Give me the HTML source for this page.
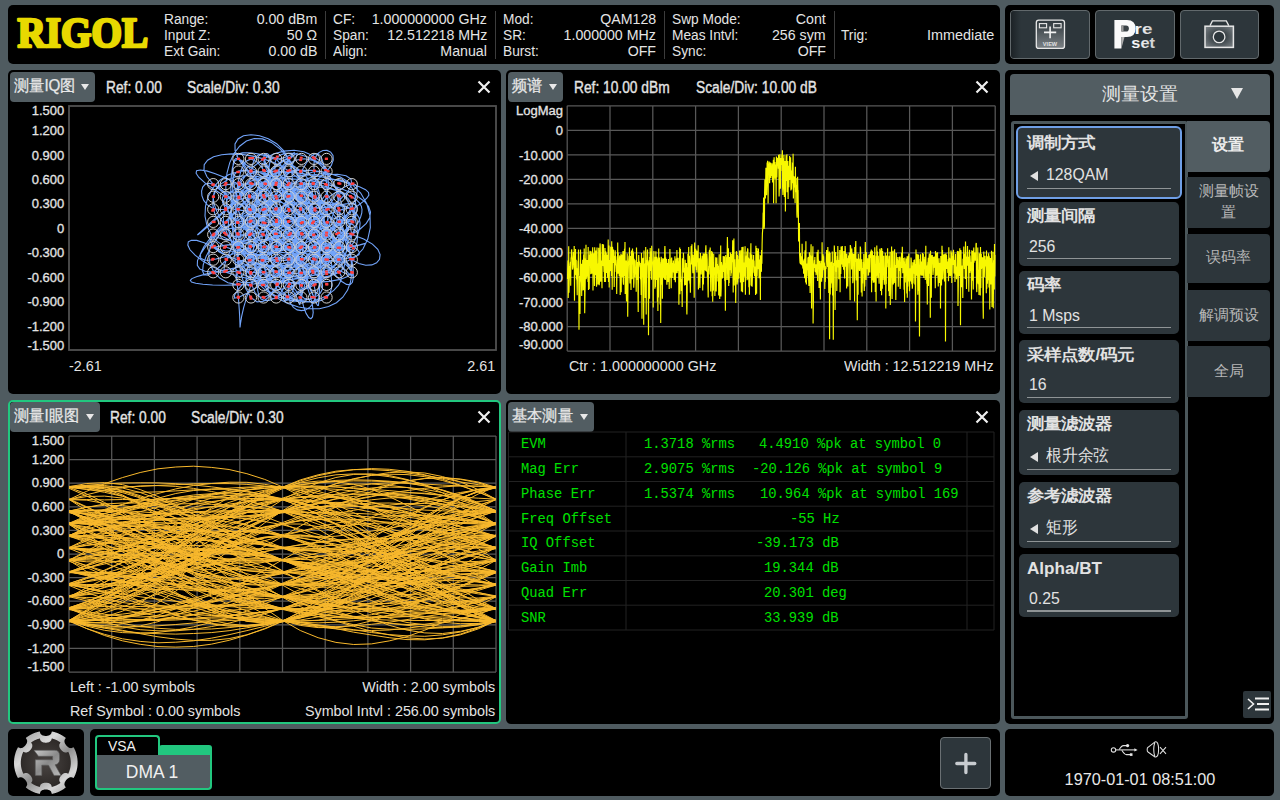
<!DOCTYPE html><html><head><meta charset="utf-8"><style>html,body{margin:0;padding:0;}body{width:1280px;height:800px;position:relative;overflow:hidden;background:#4f5b60;font-family:"Liberation Sans",sans-serif;}</style></head><body><div style="position:absolute;left:8px;top:5px;width:992px;height:59px;background:#000;border-radius:5px;"></div><div style="position:absolute;left:1005px;top:5px;width:269px;height:59px;background:#000;border-radius:5px;"></div><div style="position:absolute;left:8px;top:70px;width:493px;height:324px;background:#000;border-radius:5px;"></div><div style="position:absolute;left:506px;top:70px;width:494px;height:324px;background:#000;border-radius:5px;"></div><div style="position:absolute;left:8px;top:400px;width:493px;height:324px;background:#000;border-radius:5px;box-sizing:border-box;border:2px solid #22c77f;"></div><div style="position:absolute;left:506px;top:400px;width:494px;height:324px;background:#000;border-radius:5px;"></div><div style="position:absolute;left:1005px;top:70px;width:269px;height:654px;background:#000;border-radius:5px;"></div><div style="position:absolute;left:8px;top:729px;width:76px;height:67px;background:#000;border-radius:5px;"></div><div style="position:absolute;left:90px;top:729px;width:910px;height:67px;background:#000;border-radius:5px;"></div><div style="position:absolute;left:1005px;top:729px;width:269px;height:67px;background:#000;border-radius:5px;"></div><svg style="position:absolute;left:0;top:0" width="170" height="64"><text x="17.6" y="46.8" font-family="Liberation Serif" font-weight="bold" font-size="42" textLength="130.5" lengthAdjust="spacingAndGlyphs" fill="#e8d900" stroke="#e8d900" stroke-width="2.7" stroke-linejoin="round">RIGOL</text></svg><div style="position:absolute;left:163.7px;top:8.83px;font:normal 15.5px/19px 'Liberation Sans', sans-serif;color:#e4e4e4;white-space:pre;transform:scale(0.885,1.0);transform-origin:left;">Range:</div><div style="position:absolute;right:962.8px;top:8.83px;font:normal 15.5px/19px 'Liberation Sans', sans-serif;color:#e4e4e4;white-space:pre;transform:scale(0.915,1.0);transform-origin:right;">0.00 dBm</div><div style="position:absolute;left:163.7px;top:24.93px;font:normal 15.5px/19px 'Liberation Sans', sans-serif;color:#e4e4e4;white-space:pre;transform:scale(0.885,1.0);transform-origin:left;">Input Z:</div><div style="position:absolute;right:962.8px;top:24.93px;font:normal 15.5px/19px 'Liberation Sans', sans-serif;color:#e4e4e4;white-space:pre;transform:scale(0.915,1.0);transform-origin:right;">50 Ω</div><div style="position:absolute;left:163.7px;top:40.73px;font:normal 15.5px/19px 'Liberation Sans', sans-serif;color:#e4e4e4;white-space:pre;transform:scale(0.885,1.0);transform-origin:left;">Ext Gain:</div><div style="position:absolute;right:962.8px;top:40.73px;font:normal 15.5px/19px 'Liberation Sans', sans-serif;color:#e4e4e4;white-space:pre;transform:scale(0.915,1.0);transform-origin:right;">0.00 dB</div><div style="position:absolute;left:332.8px;top:8.83px;font:normal 15.5px/19px 'Liberation Sans', sans-serif;color:#e4e4e4;white-space:pre;transform:scale(0.885,1.0);transform-origin:left;">CF:</div><div style="position:absolute;right:793.0px;top:8.83px;font:normal 15.5px/19px 'Liberation Sans', sans-serif;color:#e4e4e4;white-space:pre;transform:scale(0.915,1.0);transform-origin:right;">1.000000000 GHz</div><div style="position:absolute;left:332.8px;top:24.93px;font:normal 15.5px/19px 'Liberation Sans', sans-serif;color:#e4e4e4;white-space:pre;transform:scale(0.885,1.0);transform-origin:left;">Span:</div><div style="position:absolute;right:793.0px;top:24.93px;font:normal 15.5px/19px 'Liberation Sans', sans-serif;color:#e4e4e4;white-space:pre;transform:scale(0.915,1.0);transform-origin:right;">12.512218 MHz</div><div style="position:absolute;left:332.8px;top:40.73px;font:normal 15.5px/19px 'Liberation Sans', sans-serif;color:#e4e4e4;white-space:pre;transform:scale(0.885,1.0);transform-origin:left;">Align:</div><div style="position:absolute;right:793.0px;top:40.73px;font:normal 15.5px/19px 'Liberation Sans', sans-serif;color:#e4e4e4;white-space:pre;transform:scale(0.915,1.0);transform-origin:right;">Manual</div><div style="position:absolute;left:502.7px;top:8.83px;font:normal 15.5px/19px 'Liberation Sans', sans-serif;color:#e4e4e4;white-space:pre;transform:scale(0.885,1.0);transform-origin:left;">Mod:</div><div style="position:absolute;right:623.8px;top:8.83px;font:normal 15.5px/19px 'Liberation Sans', sans-serif;color:#e4e4e4;white-space:pre;transform:scale(0.915,1.0);transform-origin:right;">QAM128</div><div style="position:absolute;left:502.7px;top:24.93px;font:normal 15.5px/19px 'Liberation Sans', sans-serif;color:#e4e4e4;white-space:pre;transform:scale(0.885,1.0);transform-origin:left;">SR:</div><div style="position:absolute;right:623.8px;top:24.93px;font:normal 15.5px/19px 'Liberation Sans', sans-serif;color:#e4e4e4;white-space:pre;transform:scale(0.915,1.0);transform-origin:right;">1.000000 MHz</div><div style="position:absolute;left:502.7px;top:40.73px;font:normal 15.5px/19px 'Liberation Sans', sans-serif;color:#e4e4e4;white-space:pre;transform:scale(0.885,1.0);transform-origin:left;">Burst:</div><div style="position:absolute;right:623.8px;top:40.73px;font:normal 15.5px/19px 'Liberation Sans', sans-serif;color:#e4e4e4;white-space:pre;transform:scale(0.915,1.0);transform-origin:right;">OFF</div><div style="position:absolute;left:672.0px;top:8.83px;font:normal 15.5px/19px 'Liberation Sans', sans-serif;color:#e4e4e4;white-space:pre;transform:scale(0.885,1.0);transform-origin:left;">Swp Mode:</div><div style="position:absolute;right:454.5px;top:8.83px;font:normal 15.5px/19px 'Liberation Sans', sans-serif;color:#e4e4e4;white-space:pre;transform:scale(0.915,1.0);transform-origin:right;">Cont</div><div style="position:absolute;left:672.0px;top:24.93px;font:normal 15.5px/19px 'Liberation Sans', sans-serif;color:#e4e4e4;white-space:pre;transform:scale(0.885,1.0);transform-origin:left;">Meas Intvl:</div><div style="position:absolute;right:454.5px;top:24.93px;font:normal 15.5px/19px 'Liberation Sans', sans-serif;color:#e4e4e4;white-space:pre;transform:scale(0.915,1.0);transform-origin:right;">256 sym</div><div style="position:absolute;left:672.0px;top:40.73px;font:normal 15.5px/19px 'Liberation Sans', sans-serif;color:#e4e4e4;white-space:pre;transform:scale(0.885,1.0);transform-origin:left;">Sync:</div><div style="position:absolute;right:454.5px;top:40.73px;font:normal 15.5px/19px 'Liberation Sans', sans-serif;color:#e4e4e4;white-space:pre;transform:scale(0.915,1.0);transform-origin:right;">OFF</div><div style="position:absolute;left:841.4px;top:24.93px;font:normal 15.5px/19px 'Liberation Sans', sans-serif;color:#e4e4e4;white-space:pre;transform:scale(0.885,1.0);transform-origin:left;">Trig:</div><div style="position:absolute;right:285.5px;top:24.93px;font:normal 15.5px/19px 'Liberation Sans', sans-serif;color:#e4e4e4;white-space:pre;transform:scale(0.93,1.0);transform-origin:right;">Immediate</div><div style="position:absolute;left:324.5px;top:11px;width:1px;height:48px;background:#3c3c3c;border-radius:0px;"></div><div style="position:absolute;left:495px;top:11px;width:1px;height:48px;background:#3c3c3c;border-radius:0px;"></div><div style="position:absolute;left:664px;top:11px;width:1px;height:48px;background:#3c3c3c;border-radius:0px;"></div><div style="position:absolute;left:833.5px;top:11px;width:1px;height:48px;background:#3c3c3c;border-radius:0px;"></div><div style="position:absolute;left:1010px;top:10.3px;width:79.8px;height:48.7px;background:#2d363b;border-radius:4px;box-sizing:border-box;border:1px solid #62696c;"></div><div style="position:absolute;left:1095px;top:10.3px;width:79.8px;height:48.7px;background:#2d363b;border-radius:4px;box-sizing:border-box;border:1px solid #62696c;"></div><div style="position:absolute;left:1179.5px;top:10.3px;width:79.8px;height:48.7px;background:#2d363b;border-radius:4px;box-sizing:border-box;border:1px solid #62696c;"></div><div style="position:absolute;left:1011px;top:11.3px;width:10px;height:46.7px;background:linear-gradient(90deg,#1c2226,#2d363b);border-radius:3px;"></div><svg style="position:absolute;left:0;top:0;" width="1280" height="64">
<defs><linearGradient id="vg" x1="0" y1="0" x2="0" y2="1"><stop offset="0" stop-color="#2d363b"/><stop offset="1" stop-color="#7b8185"/></linearGradient>
<radialGradient id="cg" cx="0.5" cy="0.5" r="0.7"><stop offset="0.2" stop-color="#2d363b"/><stop offset="1" stop-color="#80868a"/></radialGradient>
<linearGradient id="pg" x1="0" y1="0" x2="1" y2="0"><stop offset="0" stop-color="#fff"/><stop offset="1" stop-color="#cfcfcf"/></linearGradient></defs>
<rect x="1036.3" y="20.1" width="28.2" height="28.3" rx="2.5" fill="url(#vg)" stroke="#e8e8e8" stroke-width="1.3"/>
<rect x="1039.4" y="23.6" width="7.2" height="4.2" fill="none" stroke="#e8e8e8" stroke-width="1.1"/>
<rect x="1053.7" y="23.6" width="7.4" height="4.2" fill="none" stroke="#e8e8e8" stroke-width="1.1"/>
<path d="M1050.1 26.6V38.2M1044 32.4H1056.2" stroke="#f2f2f2" stroke-width="1.6"/>
<text x="1050" y="46.2" text-anchor="middle" font-family="Liberation Sans" font-weight="bold" font-size="5.6" fill="#e0e0e0">VIEW</text>
<path d="M1114.4 20H1127Q1135.6 20 1135.6 28.5Q1135.6 37 1127 37H1121.4V48.4H1114.4Z" fill="#fafafa"/><path d="M1121.4 25.4H1126Q1128.9 25.4 1128.9 28.5Q1128.9 31.6 1126 31.6H1121.4Z" fill="#3a4246"/><path d="M1121.4 25.4H1123.5V31.6H1121.4Z" fill="#9a9a9a"/><path d="M1121.4 37H1124.5L1121.4 48.4Z" fill="#b0b0b0"/>
<text x="1134.6" y="33.9" font-family="Liberation Sans" font-weight="bold" font-size="14" fill="url(#pg)" textLength="17.7" lengthAdjust="spacingAndGlyphs">re</text>
<text x="1131.3" y="48.1" font-family="Liberation Sans" font-weight="bold" font-size="15.5" fill="url(#pg)" textLength="23.6" lengthAdjust="spacingAndGlyphs">set</text>
<path d="M1210 25.6L1212.4 20.9H1226.3L1228.8 25.6" fill="none" stroke="#e6e6e6" stroke-width="1.3"/>
<rect x="1205" y="26.2" width="28.4" height="21.2" fill="url(#cg)" stroke="#e6e6e6" stroke-width="1.5"/>
<circle cx="1219.1" cy="36.9" r="5.8" fill="#2d363b" stroke="#e6e6e6" stroke-width="1.3"/>
</svg><div style="position:absolute;left:10px;top:72px;width:85px;height:30px;background:#525d62;border-radius:4px;"></div><div style="position:absolute;left:14px;top:76.36px;font:normal 16px/19px 'Liberation Sans', sans-serif;color:#e8e8e8;white-space:pre;transform:scale(0.95,1.0);transform-origin:left;-webkit-text-stroke:0.25px #e8e8e8;">测量IQ图</div><div style="position:absolute;left:81.4px;top:84.2px;width:0;height:0;border-left:4.3px solid transparent;border-right:4.3px solid transparent;border-top:6.2px solid #e8e8e8"></div><div style="position:absolute;left:106.4px;top:78.36px;font:normal 16px/19px 'Liberation Sans', sans-serif;color:#e4e4e4;white-space:pre;transform:scale(0.86,1.0);transform-origin:left;-webkit-text-stroke:0.35px #e4e4e4;">Ref: 0.00</div><div style="position:absolute;left:187px;top:78.36px;font:normal 16px/19px 'Liberation Sans', sans-serif;color:#e4e4e4;white-space:pre;transform:scale(0.86,1.0);transform-origin:left;-webkit-text-stroke:0.35px #e4e4e4;">Scale/Div: 0.30</div><svg style="position:absolute;left:476.75px;top:79.5px" width="14" height="14"><path d="M1.5 1.5L12.5 12.5M12.5 1.5L1.5 12.5" stroke="#f0f0f0" stroke-width="2.2"/></svg><div style="position:absolute;left:508px;top:72px;width:55px;height:30px;background:#525d62;border-radius:4px;"></div><div style="position:absolute;left:512px;top:76.36px;font:normal 16px/19px 'Liberation Sans', sans-serif;color:#e8e8e8;white-space:pre;transform:scale(0.95,1.0);transform-origin:left;-webkit-text-stroke:0.25px #e8e8e8;">频谱</div><div style="position:absolute;left:549.4px;top:84.2px;width:0;height:0;border-left:4.3px solid transparent;border-right:4.3px solid transparent;border-top:6.2px solid #e8e8e8"></div><div style="position:absolute;left:574px;top:78.36px;font:normal 16px/19px 'Liberation Sans', sans-serif;color:#e4e4e4;white-space:pre;transform:scale(0.86,1.0);transform-origin:left;-webkit-text-stroke:0.35px #e4e4e4;">Ref: 10.00 dBm</div><div style="position:absolute;left:696px;top:78.36px;font:normal 16px/19px 'Liberation Sans', sans-serif;color:#e4e4e4;white-space:pre;transform:scale(0.86,1.0);transform-origin:left;-webkit-text-stroke:0.35px #e4e4e4;">Scale/Div: 10.00 dB</div><svg style="position:absolute;left:975px;top:79.5px" width="14" height="14"><path d="M1.5 1.5L12.5 12.5M12.5 1.5L1.5 12.5" stroke="#f0f0f0" stroke-width="2.2"/></svg><div style="position:absolute;left:10px;top:402px;width:89.5px;height:30px;background:#525d62;border-radius:4px;"></div><div style="position:absolute;left:14px;top:406.36px;font:normal 16px/19px 'Liberation Sans', sans-serif;color:#e8e8e8;white-space:pre;transform:scale(0.95,1.0);transform-origin:left;-webkit-text-stroke:0.25px #e8e8e8;">测量I眼图</div><div style="position:absolute;left:85.9px;top:414.2px;width:0;height:0;border-left:4.3px solid transparent;border-right:4.3px solid transparent;border-top:6.2px solid #e8e8e8"></div><div style="position:absolute;left:110px;top:408.36px;font:normal 16px/19px 'Liberation Sans', sans-serif;color:#e4e4e4;white-space:pre;transform:scale(0.86,1.0);transform-origin:left;-webkit-text-stroke:0.35px #e4e4e4;">Ref: 0.00</div><div style="position:absolute;left:191px;top:408.36px;font:normal 16px/19px 'Liberation Sans', sans-serif;color:#e4e4e4;white-space:pre;transform:scale(0.86,1.0);transform-origin:left;-webkit-text-stroke:0.35px #e4e4e4;">Scale/Div: 0.30</div><svg style="position:absolute;left:476.75px;top:409.5px" width="14" height="14"><path d="M1.5 1.5L12.5 12.5M12.5 1.5L1.5 12.5" stroke="#f0f0f0" stroke-width="2.2"/></svg><div style="position:absolute;left:508px;top:402px;width:86px;height:30px;background:#525d62;border-radius:4px;"></div><div style="position:absolute;left:512px;top:406.36px;font:normal 16px/19px 'Liberation Sans', sans-serif;color:#e8e8e8;white-space:pre;transform:scale(0.95,1.0);transform-origin:left;-webkit-text-stroke:0.25px #e8e8e8;">基本测量</div><div style="position:absolute;left:580.4px;top:414.2px;width:0;height:0;border-left:4.3px solid transparent;border-right:4.3px solid transparent;border-top:6.2px solid #e8e8e8"></div><svg style="position:absolute;left:975px;top:409.5px" width="14" height="14"><path d="M1.5 1.5L12.5 12.5M12.5 1.5L1.5 12.5" stroke="#f0f0f0" stroke-width="2.2"/></svg><svg style="position:absolute;left:0;top:0" width="1280" height="800" viewBox="0 0 1280 800"><rect x="69" y="106" width="427" height="244" fill="none" stroke="#505050" stroke-width="1.8"/><polyline points="251,184.1 249.1,189.3 247.7,196.9 247.1,206.5 247.1,217.7 247.9,229.9 249.5,242.5 251.9,254.8 255.1,266.3 259,276.5 263.6,284.9 268.7,291.3 274.1,295.5 279.5,297.5 284.5,297.5 288.8,295.8 292,292.5 293.8,288.2 293.9,283.1 292.3,277.7 288.8,272.3 283.6,267.3 277.1,262.8 269.6,259.1 261.6,256.3 253.8,254.5 246.9,253.7 241.4,253.9 238,255 236.9,257 238.4,259.7 242.4,263 248.7,266.6 256.8,270.3 266,273.7 275.6,276.5 284.6,278.4 292.4,279.2 298.1,278.5 301.2,276.3 301.4,272.3 298.6,266.6 293.1,259.4 285.4,250.8 276.2,241.1 266.3,230.7 256.7,220.1 248.3,209.8 242.1,200 238.6,191.4 238.4,184.1 241.6,178.4 248.2,174.3 257.9,172 270.1,171.1 284.1,171.6 299,173.1 314,175.4 328.3,178.1 341.1,181.1 351.8,184.1 360,187 365.6,189.7 368.5,192.4 368.9,195.1 367,198 363.4,201.4 358.3,205.3 352.3,210 345.8,215.5 339.2,221.9 332.8,229.2 326.8,237.2 321.3,245.6 316.6,254.4 312.5,263.2 309.1,271.6 306.3,279.5 304.2,286.6 302.6,292.6 301.4,297.5 300.6,301.1 300.1,303.5 299.8,304.5 299.4,304.3 298.9,303 298.1,300.7 296.9,297.5 294.9,293.8 292.3,289.5 288.8,284.9 284.4,280.2 279.3,275.5 273.5,270.8 267.4,266.4 261.1,262.2 255,258.3 249.5,254.8 244.7,251.8 240.9,249.2 238.4,247.1 237.1,245.4 237,244.1 238,243 239.8,242.1 242.2,241.3 244.8,240.4 247.2,239.4 249.2,238.1 250.5,236.5 251,234.5 250.6,232 249.4,229.2 247.6,226.1 245.7,222.8 243.9,219.5 242.7,216.5 242.5,213.7 243.7,211.5 246.5,210 251,209.3 257.3,209.4 265.2,210.4 274.2,212.2 284,214.7 293.9,217.7 303.4,221 311.9,224.6 318.9,228.1 323.9,231.4 326.6,234.5 327.1,237.3 325.3,239.9 321.4,242.2 315.8,244.4 309,246.5 301.6,248.7 294.2,251.1 287.2,253.7 281.1,256.5 276.2,259.7 272.7,263.1 270.6,266.6 269.6,269.9 269.6,272.8 269.9,275.3 270.3,276.9 270.2,277.5 269.3,277.1 267.1,275.3 263.6,272.3 258.8,268 252.7,262.5 245.8,255.9 238.3,248.3 230.9,239.9 224.2,231.1 218.5,222.1 214.6,213.1 212.8,204.6 213.2,196.7 216,189.7 221,183.9 228,179.5 236.6,176.6 246.2,175.5 256.2,176.1 266,178.7 275,183 282.7,189.1 288.8,196.7 293,205.7 295.4,215.8 296.1,226.8 295.5,238.1 294,249.7 292,260.9 290.1,271.6 288.7,281.5 288.2,290.2 288.8,297.5 290.5,303.3 293.4,307.4 297.2,309.9 301.5,310.6 305.9,309.7 309.9,307.2 313.1,303.3 315,298.1 315.4,291.9 314,284.9 310.9,277.4 306.3,269.7 300.6,262.1 294.3,254.9 288,248.4 282.3,242.9 277.8,238.7 275,235.9 274.5,234.5 276.2,234.5 280.3,235.8 286.5,238.2 294.3,241.3 303.2,244.7 312.5,247.9 321.4,250.5 329,252 334.9,252.1 338.4,250.5 339.2,247.1 337.2,241.8 332.5,234.8 325.2,226.5 315.9,217.1 305.1,207.3 293.5,197.7 281.6,188.7 270.3,181.1 259.9,175.3 251,171.5 243.7,170 238.4,170.9 234.8,174 232.9,178.9 232.4,185.3 233,192.6 234.3,200.5 235.8,208.2 237.3,215.5 238.4,221.9 239,227.1 239,231.2 238.3,233.9 237,235.6 235.2,236.4 233.2,236.4 231,236 228.9,235.5 227.1,234.9 225.8,234.5 225.1,234.4 225.1,234.5 225.8,234.8 227.3,235.3 229.5,235.8 232.5,236.1 236.1,236.3 240.5,236.1 245.4,235.5 251,234.5 257.1,233 263.8,231.2 270.8,228.9 278.3,226.3 286.2,223.5 294.3,220.6 302.5,217.6 310.7,214.7 318.8,211.9 326.6,209.3 333.8,207 340.3,205.1 346,203.9 350.6,203.3 354.1,203.6 356.3,205 357.2,207.5 356.7,211.1 354.9,216 351.8,221.9 347.6,228.8 342.4,236.4 336.3,244.2 329.5,252 322.3,259.2 315,265.3 307.7,270 300.8,272.9 294.4,273.7 288.8,272.3 284,268.7 280.4,263 277.8,255.7 276.5,247 276.3,237.6 277.3,227.9 279.1,218.6 281.8,210 285.1,202.6 288.8,196.7 292.7,192.4 296.6,189.8 300.4,188.8 303.8,189 306.9,190.2 309.5,191.9 311.5,193.8 313,195.5 313.8,196.5 314,196.7 313.4,195.8 312.1,193.9 309.9,190.8 306.7,186.9 302.5,182.3 297.1,177.2 290.5,172.1 282.6,167.1 273.6,162.6 263.6,158.9 252.9,156.1 242,154.4 231.4,153.9 221.7,154.7 213.6,156.8 207.6,160.2 204.2,164.7 204,170.2 207,176.8 213.2,184.1 222.5,192 234.3,200.4 247.9,209 262.3,217.6 276.6,226.2 289.8,234.4 300.8,242 308.8,248.9 313.4,254.8 314,259.7 310.8,263.4 303.9,265.9 293.9,267.1 281.5,267.1 267.7,265.9 253.6,263.6 240.1,260.4 228.4,256.5 219.2,252 213.2,247.1 210.7,242 211.9,236.9 216.6,231.9 224.4,227.3 235,223 247.4,219.2 261.1,215.9 275.1,213.2 288.8,211 301.4,209.3 312.4,208.1 321.2,207.3 327.7,206.8 331.4,206.7 332.5,206.7 330.9,207 326.7,207.4 320.2,208 311.6,208.6 301.4,209.3 290,210 277.9,210.6 265.8,211 254.1,211 243.5,210.6 234.7,209.4 228.1,207.5 224.2,204.7 223.4,201.1 225.8,196.7 231.4,191.6 240,186.2 251.4,180.9 264.9,176.2 279.9,172.5 295.8,170.4 311.6,170.3 326.6,172.5 340.3,177.1 351.8,184.1 360.7,193.1 366.8,203.8 370,215.6 370.3,227.6 367.8,239.1 362.9,249 355.9,256.6 347.2,261.2 337.3,262.3 326.6,259.7 315.5,253.5 304.3,244.1 293.4,232 282.9,218.2 273,203.7 264,189.7 255.9,177.3 248.9,167.5 243.1,161.2 238.4,158.9 234.8,161.1 232.4,167.6 231.1,178.2 230.8,192.2 231.3,208.9 232.4,227.2 233.9,246.3 235.5,264.9 237.1,282.3 238.4,297.5 239.3,310 239.8,319.2 240,325.1 240,327.5 240.1,326.7 240.6,322.8 241.7,316.2 243.7,307.4 246.8,296.8 251,284.9 256.3,272.1 262.4,258.6 269.1,244.8 275.8,231 282,217.4 287.1,204.1 290.7,191.5 292.4,179.6 291.7,168.6 288.8,158.9 283.6,150.5 276.6,143.7 268.3,138.7 259.5,135.7 250.9,134.7 243.5,135.8 238,138.9 235,143.9 235.1,150.7 238.4,158.9 245,168.3 254.5,178.5 266.3,189.3 279.6,200.5 293.5,211.6 307,222.5 319.1,232.9 329,242.7 335.8,251.6 339.2,259.7 338.9,266.8 334.8,272.7 327.2,277.4 316.4,280.7 303.1,282.8 288.1,283.3 272,282.5 255.8,280.3 240.2,276.8 225.8,272.3 213.2,266.9 202.8,261.1 195.1,255.2 190,249.8 187.8,245.1 188.3,241.8 191.4,240.2 196.7,240.4 204.1,242.7 213.2,247.1 223.5,253.4 234.7,261.1 246.2,269.7 257.6,278.5 268.5,286.9 278.4,294 286.9,299.2 293.7,301.7 298.6,301.3 301.4,297.5 302.2,290.5 301,280.5 298,267.8 293.7,253.1 288.5,237.3 282.7,221.2 276.8,205.8 271.4,191.9 266.9,180.3 263.6,171.5 261.9,165.8 261.9,163.3 263.7,163.9 267.3,167.3 272.5,172.8 279.1,179.9 286.9,187.7 295.6,195.6 304.7,203 314,209.3 323,214.2 331.3,217.6 338.7,219.6 344.7,220.4 349,220.3 351.4,219.8 351.7,219.3 349.7,219.3 345.5,220.1 339.2,221.9 331,225 321.2,229.1 310.3,234 298.8,239.5 287.3,245 276.5,250.2 267,254.6 259.3,257.8 253.9,259.5 251,259.7 250.7,258.4 253.1,255.8 257.8,252.1 264.5,247.7 272.6,243.2 281.6,239.1 290.9,235.8 299.7,233.8 307.5,233.3 314,234.5 318.8,237.3 321.8,241.5 323.2,246.9 323.2,252.8 322,258.9 320.2,264.5 318.1,269 316.1,272.1 314.7,273.2 314,272.3 314.2,269.2 315.5,264.1 317.6,257.1 320.5,248.6 323.9,239.2 327.6,229.3 331.2,219.6 334.5,210.6 337.3,202.8 339.2,196.7 340.2,192.4 340.3,190.3 339.4,190.3 337.6,192.4 334.9,196.4 331.6,202 327.6,209 323.3,216.9 318.7,225.5 314,234.5 309.2,243.5 304.6,252.3 300,260.7 295.7,268.6 291.6,275.7 287.8,282 284.4,287.4 281.3,291.8 278.6,295.2 276.2,297.5 274.2,298.7 272.5,298.8 271.1,297.7 269.9,295.4 268.8,291.9 267.8,287.3 266.9,281.6 265.9,275 264.8,267.7 263.6,259.7 262.1,251.4 260.5,242.9 258.5,234.6 256.4,226.6 253.9,219.2 251.2,212.5 248.2,206.9 245.1,202.3 241.8,198.9 238.4,196.7 235.2,195.7 232.2,195.8 229.6,196.9 227.6,198.9 226.4,201.7 226.3,205.1 227.3,209 229.6,213.2 233.3,217.5 238.4,221.9 244.7,226.2 252,230.3 260,234 268.3,237.3 276.5,240.2 284.2,242.6 290.8,244.4 296.1,245.7 299.7,246.6 301.4,247.1 301.2,247.2 299.2,247.2 295.6,247.2 290.8,247.3 285.2,247.8 279.3,248.8 273.8,250.5 269.1,252.8 265.6,255.9 263.6,259.7 263.3,264 264.4,268.6 266.9,273.3 270.1,277.9 273.6,281.9 276.8,285.2 279.1,287.3 280,288.1 279.1,287.3 276.2,284.9 271.4,280.9 264.8,275.4 257,268.5 248.6,260.4 240.2,251.6 232.8,242.4 227.1,233.2 223.7,224.3 223.2,216.3 225.8,209.3 231.4,203.6 239.9,199.4 250.6,196.6 262.7,195.3 275.4,195.4 287.6,196.7 298.4,199 306.8,202.1 312.1,205.6 314,209.3 312.2,213 307.1,216.4 299,219.4 288.8,221.9 277.5,223.7 266,224.9 255.5,225.3 246.9,224.9 241,223.8 238.4,221.9 239.3,219.4 243.7,216.1 251.2,212.2 261.3,207.7 273.2,202.6 285.8,197 298.3,190.9 309.7,184.5 319.3,178 326.6,171.5 331.3,165.4 333.3,159.9 333,155.4 330.7,152.1 327,150.4 322.9,150.5 318.9,152.6 315.7,156.8 314,163.1 314,171.5 315.9,181.7 319.5,193.2 324.4,205.7 330.1,218.6 335.7,231.3 340.6,243.2 344,253.6 345.2,262.2 343.7,268.5 339.2,272.3 331.8,273.4 321.6,271.9 309.2,267.9 295.3,261.8 280.6,254.1 266.1,245.2 252.7,235.8 241.1,226.3 232,217.3 225.8,209.3 222.6,202.6 222.4,197.4 224.9,193.9 229.6,192.1 235.7,191.9 242.5,193.2 249.3,195.9 255.4,199.6 260.3,204.1 263.6,209.3 265.1,214.9 264.8,220.6 263.1,226.5 260.3,232.3 256.8,237.9 253.5,243.3 250.7,248.2 249.1,252.6 249.1,256.5 251,259.7 254.9,262.2 260.8,263.9 268.4,265 277.6,265.4 287.9,265.2 298.8,264.5 309.8,263.5 320.5,262.3 330.4,261 339.2,259.7 346.7,258.4 352.5,257.2 356.7,256 359,254.6 359.5,252.9 358.3,250.7 355.5,247.9 351.2,244.3 345.7,239.8 339.2,234.5 332,228.5 324.4,222 316.8,215.3 309.4,208.9 302.6,203.1 296.8,198.4 292.4,195.2 289.5,193.7 288.3,194.2 288.8,196.7 291.1,201.2 294.8,207.3 299.7,214.8 305.3,223.1 311.1,231.7 316.6,240 321.3,247.4 324.8,253.4 326.6,257.6 326.6,259.7 324.5,259.5 320.6,257 314.9,252.4 307.8,246 299.8,238.3 291.4,229.7 283.1,220.8 275.3,212 268.7,203.8 263.6,196.7 260.3,190.9 258.8,186.7 259.4,184.3 261.8,183.6 265.9,184.6 271.5,187.2 278.1,191.2 285.6,196.4 293.4,202.5 301.4,209.3 309.2,216.7 316.6,224.3 323.5,232 329.8,239.4 335.4,246.6 340.2,253.2 344.3,259.3 347.6,264.5 350.1,268.9 351.8,272.3 352.8,274.7 352.9,275.9 352.1,276 350.5,275 348.1,272.8 344.9,269.5 341,265.2 336.5,259.9 331.7,253.8 326.6,247.1 321.4,239.9 316.3,232.4 311.4,224.7 306.8,217.2 302.6,209.9 298.9,203.1 295.7,197 293,191.8 290.7,187.4 288.8,184.1 287.3,181.7 286.3,180.3 285.7,179.8 285.7,179.9 286.3,180.6 287.6,181.5 289.8,182.5 292.8,183.3 296.7,183.9 301.4,184.1 306.7,183.9 312.3,183.6 317.7,183.2 322.5,183.2 326.2,183.8 328.4,185.6 328.4,188.8 326.1,193.8 321.3,200.6 314,209.3 304.4,219.7 293,231.5 280.6,244.1 268,257 256.2,269.2 246.1,280.1 238.7,288.9 234.6,295 234.5,298 238.4,297.5 246.3,293.6 257.8,286.6 272,277.1 287.9,265.8 304.3,253.5 319.9,241.3 333.4,230.1 343.8,220.6 350.1,213.5 351.8,209.3 348.7,208.1 340.9,209.9 328.9,214.2 313.4,220.6 295.6,228.3 276.7,236.5 257.9,244.5 240.3,251.4 225.2,256.6 213.2,259.7 204.9,260.3 200.7,258.3 200.4,253.8 203.7,247 210.1,238.3 219,228.1 229.6,217.1 241,205.7 252.6,194.6 263.6,184.1 273.4,174.6 281.8,166.6 288.3,160.4 293.1,156 295.9,153.7 297.1,153.5 296.8,155.3 295.1,159.1 292.4,164.5 288.8,171.5 284.6,179.6 279.9,188.5 274.9,197.7 269.6,206.9 264.1,215.4 258.6,222.9 253.1,228.8 247.8,232.9 242.8,234.8 238.4,234.5 234.8,231.9 232.2,227.1 230.8,220.5 230.8,212.3 232.3,203 235.5,193.1 240.3,183.3 246.7,174 254.6,165.7 263.6,158.9 273.5,154 283.8,151.1 294.1,150.3 303.9,151.8 312.6,155.4 319.8,160.9 325.1,168.1 328.1,176.8 328.6,186.4 326.6,196.7 322.2,207.1 315.4,217.3 306.6,226.9 296.1,235.3 284.3,242.4 271.9,247.6 259.4,250.8 247.2,251.8 235.8,250.6 225.8,247.1 217.4,241.6 211,234.3 206.9,225.6 205,216 205.5,206.1 208.2,196.4 213.1,187.6 219.9,180.3 228.5,174.8 238.4,171.5 249.4,170.7 261,172.5 272.8,176.8 284.4,183.3 295.2,191.8 304.9,201.8 313.2,212.9 319.7,224.4 324.1,236 326.6,247.1 327.1,257.2 325.7,266.2 322.9,273.8 319.1,279.8 314.6,284.3 310.1,287.3 306.2,288.7 303.1,288.7 301.5,287.4 301.4,284.9 303.1,281.3 306.4,276.8 311.3,271.4 317.3,265.2 324.1,258.5 331.1,251.4 337.8,244 343.8,236.5 348.5,229.1 351.8,221.9 353.4,215.1 353.3,208.9 351.4,203.4 348.1,198.6 343.5,194.5 338,191.2 331.9,188.6 325.7,186.5 319.6,185.1 314,184.1 309.1,183.6 305.2,183.6 302.3,184.2 300.6,185.3 300.1,187.2 300.8,189.8 302.7,193.3 305.6,197.8 309.4,203.1 314,209.3 319.1,216.2 324.4,223.4 329.7,230.6 334.5,237.4 338.7,243.4 341.7,248 343.5,251 343.7,251.9 342.3,250.6 339.2,247.1 334.4,241.4 328.3,233.8 321.1,224.7 313.2,214.8 305.1,204.7 297.3,194.9 290.1,186.2 284,179.1 279.3,174.1 276.2,171.5 274.9,171.3 275.5,173.6 277.8,178.2 281.8,184.6 287.3,192.4 294,201.2 301.6,210.3 309.8,219.1 318.3,227.3 326.6,234.5 334.5,240.4 341.5,245 347.2,248 351.3,249.8 353.3,250.4 353,250.2 350.2,249.4 344.8,248.5 336.8,247.6 326.6,247.1 314.5,247.1 301.1,247.8 287,249.2 273.1,251.3 260.2,254 249.3,257.3 241.1,260.9 236.3,264.8 235.4,268.6 238.4,272.3 245.4,275.6 255.9,278.4 269.1,280.6 284.2,282.1 300,282.7 315.3,282.6 329.1,281.4 340.3,279.4 348.1,276.3 351.8,272.3 351.1,267.4 346.1,261.5 337,254.9 324.5,247.5 309.2,239.5 292.2,231 274.5,222.3 256.9,213.5 240.4,204.9 225.8,196.7 213.8,189.2 204.7,182.6 198.7,177.2 196.1,173.2 196.6,170.7 200.2,170 206.6,170.9 215.3,173.7 226.1,178.1 238.4,184.1 251.7,191.3 265.5,199.6 279.1,208.6 292.1,218 303.8,227.3 313.7,236.1 321.2,244.1 326,250.8 327.8,256.1 326.6,259.7 322.5,261.4 315.9,261.2 307.3,259.2 297.5,255.4 287.4,250 278,243.2 270.1,235.5 264.7,227 262.4,218.1 263.6,209.3 268.4,200.9 276.5,193.1 287.3,186.4 300,180.9 313.3,176.9 326.3,174.7 337.5,174.3 346.1,175.7 351,179 351.8,184.1 348.3,190.9 340.6,199 329.4,208.3 315.4,218.2 299.7,228.6 283.7,238.9 268.5,248.7 255.3,257.8 245,265.7 238.4,272.3 235.7,277.4 236.9,280.8 241.6,282.5 249.2,282.5 258.8,281.1 269.4,278.4 279.8,274.6 289.1,270.1 296.5,265 301.4,259.7 303.3,254.3 302.2,249.1 298.5,244.3 292.5,239.8 285,235.8 276.7,232.3 268.4,229.1 261,226.4 255,224 251,221.9 249.3,220 250,218.4 253,217.1 257.9,216.2 264.3,215.8 271.8,215.9 279.7,216.5 287.5,217.7 294.9,219.5 301.4,221.9 307.1,224.8 311.7,228.1 315.5,231.5 318.6,234.9 321.4,238.2 324.1,241.1 327,243.5 330.4,245.4 334.5,246.6 339.2,247.1 344.3,247 349.8,246.4 355.1,245.6 359.8,244.7 363.5,243.8 365.7,243.3 366,243.3 363.8,243.9 359.1,245.1 351.8,247.1 342,249.7 329.8,252.8 315.7,256.3 300.2,259.9 283.8,263.4 267.4,266.7 251.5,269.3 236.8,271.3 223.9,272.3 213.2,272.3 205.1,271.2 199.8,269 197.3,265.4 197.5,260.6 200.2,254.6 205.1,247.3 211.7,239 219.8,229.7 228.8,219.7 238.4,209.3 248.3,198.8 258.3,188.6 268.1,179.1 277.7,170.9 286.9,164.5 295.7,160.3 304.1,158.8 312.1,160.1 319.6,164.3 326.6,171.5 332.9,181.3 338.3,193.3 342.7,206.7 345.8,220.8 347.3,234.6 347.1,247.4 344.9,258.1 340.7,266.2 334.6,271 326.6,272.3 317.1,270 306.3,264.2 294.8,255.7 283.1,244.9 271.7,232.8 261.3,220.3 252.4,208.3 245.4,197.9 240.6,189.6 238.4,184.1 238.7,181.8 241.4,182.9 246.2,187.2 252.9,194.6 260.8,204.5 269.5,216.5 278.4,229.9 287,244.1 294.8,258.5 301.4,272.3 306.7,285.1 310.4,296.4 312.5,305.7 313.2,312.6 312.5,317 310.9,318.7 308.7,317.5 306.1,313.4 303.6,306.7 301.4,297.5 299.6,286.2 298.4,273.3 297.9,259.5 298,245.4 298.5,231.8 299.3,219.6 300.2,209.4 301,202 301.4,197.6 301.4,196.7 300.9,199.1 300.1,204.6 298.9,212.7 297.7,222.7 296.7,233.7 296.1,244.8 296.1,255.1 296.9,263.5 298.7,269.4 301.4,272.3 305,271.9 309.2,268.2 313.6,261.7 317.8,252.8 321.3,242.4 323.7,231.2 324.4,220.3 323.1,210.4 319.7,202.4 314,196.7 306.4,193.8 297,193.8 286.5,196.5 275.4,201.4 264.5,208.2 254.7,216.3 246.6,224.8 240.9,233.1 238.1,240.8 238.4,247.1 241.8,251.8 248.1,254.7 256.7,255.7 267,254.7 278.1,252.1 289,248 298.8,242.6 306.7,236.3 311.9,229.3 314,221.9 312.9,214.3 308.6,206.7 301.5,199.2 292.2,191.9 281.6,185 270.4,178.6 259.7,172.6 250.3,167.3 243,162.7 238.4,158.9 236.8,156 238.2,154 242.5,152.9 249.1,152.8 257.5,153.7 266.9,155.5 276.7,158.3 286.1,162 294.5,166.4 301.4,171.5 306.7,177.2 310.2,183.4 312.1,189.9 312.7,196.6 312.4,203.3 311.7,210 311.2,216.6 311.2,222.9 312.1,228.9 314,234.5 317,239.7 321,244.5 325.6,248.9 330.4,252.9 335,256.7 338.9,260.2 341.6,263.5 342.7,266.7 342,269.6 339.2,272.3 334.5,274.6 327.9,276.4 319.9,277.6 310.8,278.1 301.2,277.8 291.6,276.4 282.5,274 274.6,270.4 268.2,265.6 263.6,259.7 261.1,252.7 260.7,244.9 262.4,236.4 266.2,227.5 271.7,218.7 278.7,210 286.7,202 295.6,194.8 304.8,188.8 314,184.1 322.9,180.9 331.1,179.3 338.5,179.5 344.7,181.3 349.7,184.8 353.2,189.8 355.2,196.3 355.6,203.9 354.5,212.6 351.8,221.9 347.6,231.4 342,241 335.3,250.1 327.7,258.5 319.3,265.7 310.4,271.2 301.4,274.9 292.5,276.4 284,275.6 276.2,272.3 269.1,266.6 263.1,258.8 258.1,249.1 254.3,238 251.5,226 249.8,213.7 249.1,201.6 249.1,190.3 249.8,180.1 251,171.5 252.5,164.7 254.3,159.7 256.3,156.5 258.5,154.9 260.8,154.6 263.4,155.2 266.2,156.3 269.3,157.5 272.6,158.4 276.2,158.9 279.9,158.7 283.6,157.9 287.1,156.6 290.2,155.1 292.6,153.6 294.1,152.6 294.6,152.3 293.9,153.2 291.9,155.3 288.8,158.9 284.5,163.8 279.5,169.9 273.9,176.8 268.2,184 262.7,191.2 257.9,197.7 254,203.2 251.5,207.1 250.5,209.2 251,209.3 253,207.4 256.3,203.6 260.7,198.4 265.8,192.1 271.3,185.1 276.6,178.1 281.3,171.6 285.2,165.9 287.7,161.6 288.8,158.9 288.2,158 285.9,158.9 281.8,161.5 276.2,165.8 269.3,171.5 261.3,178.2 252.6,185.7 243.6,193.6 234.5,201.6 225.8,209.3 217.7,216.4 210.6,222.7 204.9,227.9 200.6,231.8 198.1,234.2 197.4,235.1 198.6,234.2 201.7,231.7 206.6,227.6 213.2,221.9 221.1,214.8 230.1,206.8 239.8,198.1 249.7,189.2 259.3,180.8 268.2,173.1 276,166.7 282.2,162.1 286.5,159.4 288.8,158.9 288.9,160.6 286.9,164.3 282.8,169.7 277,176.3 269.7,183.6 261.4,190.9 252.4,197.6 243.2,203.1 234.2,207.1 225.8,209.3 218.3,209.5 212,207.8 207.1,204.6 203.7,200.4 201.9,195.7 201.6,191 202.7,187.1 205.1,184.3 208.7,183.3 213.2,184.1 218.3,186.9 223.9,191.6 229.5,198 235,205.6 240.1,213.9 244.4,222.4 247.7,230.4 250,237.5 251.1,243.2 251,247.1 249.8,249 247.5,248.7 244.4,246.2 240.8,241.6 236.9,235.1 233.2,226.9 229.9,217.4 227.4,206.8 225.9,195.5 225.8,184.1 227,173 229.8,162.6 234,153.5 239.6,146.2 246.4,141.1 254.2,138.5 262.6,138.9 271.4,142.4 280.2,149.1 288.8,158.9 296.7,171.5 303.8,186.4 309.9,202.9 314.7,220.4 318.2,238 320.2,254.7 320.7,269.7 319.8,282.2 317.5,291.6 314,297.5 309.4,299.7 304.1,298.2 298.1,293.4 291.8,285.7 285.5,275.9 279.5,264.6 274,252.8 269.4,241.3 265.9,230.8 263.6,221.9 262.6,215.1 262.9,210.8 264.6,208.9 267.7,209.6 271.8,212.5 276.9,217.3 282.7,223.7 288.9,231 295.2,239 301.4,247.1 307.2,255.1 312.3,262.6 316.5,269.5 319.7,275.7 321.8,281.1 322.6,285.7 322.2,289.6 320.5,292.8 317.8,295.4 314,297.5 309.3,299 304,300 298.3,300.4 292.4,300.2 286.5,299.4 280.8,297.8 275.5,295.6 270.8,292.6 266.8,289 263.6,284.9 261.4,280.3 260.2,275.5 260.1,270.7 261.1,266.3 263.2,262.5 266.5,259.6 270.8,257.8 276.1,257.2 282.1,257.8 288.8,259.7 295.9,262.6 302.9,266.2 309.6,270.3 315.5,274.3 320.2,277.7 323.2,280.2 324.3,281.1 323.1,280.3 319.7,277.3 314,272.3 306.3,265.4 297,256.7 286.8,246.8 276.4,236.2 266.5,225.6 258,215.8 251.7,207.5 248.2,201.2 247.9,197.6 251,196.7 257.4,198.8 266.8,203.7 278.6,211 292,220.1 306,230.4 319.6,241 331.8,251.2 341.6,260.2 348.5,267.4 351.8,272.3 351.5,274.6 347.5,274.2 340.3,271.1 330.4,265.6 318.7,258.1 306,249.1 293.2,239.2 281.4,228.9 271.3,218.8 263.6,209.3 258.7,200.8 256.9,193.6 258.2,187.8 262.5,183.4 269.5,180.5 278.8,179 289.7,178.7 301.8,179.6 314.3,181.4 326.6,184.1 338.3,187.6 348.7,191.7 357.5,196.3 364.2,201.2 368.6,206.5 370.5,212 369.7,217.7 366.3,223.4 360.2,229 351.8,234.5 341.3,239.8 328.8,244.9 314.9,249.5 299.9,253.8 284.3,257.7 268.5,261.2 253,264.4 238.3,267.3 224.9,269.9 213.2,272.3 203.6,274.6 196.4,276.7 191.9,278.6 190.3,280.4 191.5,282 195.8,283.3 202.9,284.3 212.6,285 224.6,285.2 238.4,284.9 253.5,284 269.1,282.7 284.6,280.8 299.1,278.5 311.7,275.7 321.8,272.7 328.8,269.5 332,266.2 331.3,262.9 326.6,259.7 318.3,256.6 306.7,253.7 292.7,250.9 277.1,248.4 261.2,245.9 246,243.6 232.7,241.3 222.3,239 215.6,236.8 213.2,234.5 215.4,232.2 222.1,230 232.9,228.1 247.2,226.6 264.1,225.7 282.6,225.5 301.6,226.2 320.1,228 337.1,230.7 351.8,234.5 363.7,239 372.4,244.1 377.8,249.4 380.1,254.6 379.5,259.3 376.6,262.8 371.8,264.9 365.8,265.2 358.9,263.5 351.8,259.7 344.8,253.9 338.3,246.4 332.3,237.5 327.1,227.7 322.8,217.6 319.4,207.9 316.8,199.2 315.1,192.1 314.2,186.9 314,184.1 314.5,183.7 315.4,185.6 316.7,189.4 318.1,194.7 319.3,200.9 320.1,207.2 320.1,213.1 319.2,217.8 317.2,220.9 314,221.9 309.7,220.7 304.5,217.4 298.6,211.9 292.5,204.9 286.6,196.7 281.5,187.9 277.5,179.2 275.1,171.2 274.7,164.3 276.2,158.9 279.8,155.3 285.1,153.4 291.7,153.3 299.3,154.5 307,156.8 314.2,159.9 320.3,163.2 324.7,166.4 326.9,169.2 326.6,171.5 323.6,173.1 318,174.2 310.1,174.9 300.5,175.6 289.6,176.5 278.1,178.1 266.6,180.7 255.8,184.6 246.2,189.9 238.4,196.7 232.7,205 229.3,214.6 228.3,225.2 229.7,236.6 233.4,248.3 239.1,259.9 246.6,270.9 255.5,281.1 265.5,290.1 276.2,297.5 287.3,303.2 298.5,307 309.3,308.8 319.4,308.7 328.5,306.6 336.4,302.7 342.8,297.2 347.6,290.1 350.6,281.7 351.8,272.3 351.3,262.2 349.1,251.7 345.4,241.2 340.4,231.1 334.4,221.7 327.7,213.4 320.8,206.5 313.9,201.4 307.3,198.1 301.4,196.7 296.3,197.2 292.1,199.4 288.7,202.9 286.2,207.2 284.2,211.9 282.7,216.4 281.3,220.1 279.9,222.5 278.3,223.2 276.2,221.9 273.7,218.5 270.5,213.2 266.9,206.2 262.8,198.1 258.4,189.4 253.9,180.8 249.4,172.9 245.3,166.3 241.5,161.6 238.4,158.9 236,158.4 234.2,160.1 233.2,163.8 232.8,168.9 233,174.8 233.6,181.1 234.6,186.9 235.8,191.7 237,195 238.4,196.7 239.8,196.6 241.2,194.8 242.7,191.7 244.5,187.9 246.4,183.9 248.8,180.4 251.7,178.2 255,177.8 259,179.7 263.6,184.1 268.7,191.2 274.2,200.8 280.1,212.4 286.1,225.5 292,239.5 297.7,253.6 302.9,267.1 307.4,279.3 311.1,289.6 314,297.5 316.2,302.9 317.6,305.5 318.4,305.4 318.7,303 319,298.4 319.3,292.1 320,284.7 321.4,276.5 323.6,268.1 326.6,259.7 330.4,251.7 335,244.3 339.9,237.7 344.8,231.7 349.3,226.5 353,222 355.4,218.1 356.2,214.7 355,211.8 351.8,209.3 346.6,207.2 339.5,205.6 330.9,204.4 321.3,203.6 311.4,203.4 301.6,203.7 292.7,204.4 285.2,205.6 279.6,207.3 276.2,209.3 275,211.5 275.9,214.1 278.7,216.9 282.9,220.1 287.8,223.6 292.8,227.5 297.2,231.8 300.4,236.5 301.9,241.6 301.4,247.1 298.8,252.7 294.4,258.4 288.5,263.8 281.7,268.8 274.8,272.9 268.5,276 263.6,277.6 260.9,277.5 260.8,275.8 263.6,272.3 269.3,267.2 277.8,260.9 288.5,253.6 300.6,246 313.2,238.5 325.4,231.8 336.1,226.3 344.5,222.7 349.9,221.1 351.8,221.9 350.1,225 344.9,230.3 336.9,237.3 326.7,245.5 315.4,254.4 303.9,263.2 293.4,271.2 284.8,277.9 278.9,282.6 276.2,284.9 276.9,284.7 280.6,282 287,276.7 295.2,269.3 304.2,260.3 312.9,250 320.4,239.3 325.5,228.5 327.8,218.4 326.6,209.3 322,201.5 314.3,195.2 303.8,190.5 291.6,187.3 278.6,185.2 265.9,184.2 254.7,183.8 245.9,183.9 240.3,184 238.4,184.1 240.4,184.1 245.9,184 254.7,184.1 265.7,184.5 278.2,185.5 291.1,187.5 303.2,190.8 313.7,195.4 321.7,201.6 326.6,209.3 328.2,218.4 326.2,228.5 321,239.2 312.8,250 302.2,260.2 290,269.3 276.8,276.7 263.3,281.9 250.3,284.7 238.4,284.9 228,282.7 219.7,278.1 213.6,271.6 209.9,263.7 208.8,255 210.2,246.3 214.1,238 220.2,230.9 228.4,225.4 238.4,221.9 249.9,220.5 262.5,221.2 275.5,223.9 288.5,228.2 301,233.6 312.4,239.7 322.3,245.8 330.2,251.5 335.9,256.2 339.2,259.7 340,261.6 338.6,261.8 335.2,260.4 330.3,257.3 324.5,252.8 318.3,247.4 312.4,241.2 307.3,234.6 303.5,228.1 301.4,221.9 301.2,216.3 302.8,211.5 306.3,207.7 311.4,204.9 317.7,203.1 324.8,202.4 332.2,202.7 339.5,204 346.1,206.2 351.8,209.3 356.1,213.1 359,217.7 360.1,223 359.5,229 357.3,235.6 353.5,242.6 348.3,250 341.8,257.5 334.5,265 326.6,272.3 318.5,279.1 310.5,285.3 302.9,290.6 296.2,295 290.6,298.3 286.6,300.4 284.2,301.4 283.8,301.2 285.3,299.9 288.8,297.5 294.1,294.2 300.9,289.9 308.8,284.9 317.4,279.2 326.1,272.8 334.4,265.9 341.6,258.5 347.2,250.7 350.7,242.6 351.8,234.5 350.2,226.5 346,218.9 339.2,212 330.1,206.1 319,201.7 306.3,199 292.7,198.2 278.5,199.7 264.5,203.4 251,209.3 238.6,217.1 227.6,226.3 218.4,236.4 211.2,246.8 206.1,256.5 203.2,264.9 202.6,271.2 204.1,274.8 207.7,275.2 213.2,272.3 220.5,266 229.3,256.7 239.2,245 250,231.7 261.3,217.8 272.8,204.2 284.1,191.9 295,182 305,175 314,171.5 321.9,171.6 328.3,175.1 333.2,181.5 336.4,190.2 338.1,200.2 338.3,210.4 337.1,219.8 334.6,227.4 331,232.5 326.6,234.5 321.6,233.3 316.2,228.8 310.5,221.5 304.7,212.1 299,201.2 293.5,190 288.4,179.3 283.8,170.1 279.7,163.1 276.2,158.9 273.3,157.7 271,159.6 269.3,164.2 267.9,171.2 266.9,179.7 266.2,189.2 265.5,198.9 264.9,207.9 264.3,215.8 263.6,221.9 262.9,226.1 262.3,228.1 261.7,228.1 261.5,226.1 261.8,222.6 262.7,217.9 264.5,212.6 267.3,207 271.2,201.6 276.2,196.7 282.3,192.6 289.4,189.5 297.3,187.5 305.8,186.6 314.5,186.6 323.2,187.5 331.6,189.1 339.3,191.3 346.1,193.9 351.8,196.7 356.2,199.7 359.4,202.9 361.3,206.1 362,209.5 361.8,213 360.7,216.7 359,220.8 356.8,225.1 354.4,229.7 351.8,234.5 349.3,239.3 346.9,244.1 344.7,248.4 342.9,252.1 341.4,254.8 340.3,256.3 339.6,256.4 339.2,254.9 339.1,251.8 339.2,247.1 339.6,241.2 339.9,234.4 340.2,227.1 340.1,219.9 339.6,213.4 338.6,208.2 336.8,204.8 334.3,203.7 330.9,205.2 326.6,209.3 321.5,216 315.7,224.9 309.3,235.6 302.5,247.4 295.5,259.4 288.4,271 281.5,281.2 275,289.4 269,295 263.6,297.5 259,296.8 255.2,292.9 252.3,286.2 250.2,277 248.8,266 248.2,254 248.2,241.6 248.8,229.6 249.8,218.7 251,209.3 252.5,201.8 254,196.6 255.3,193.6 256.4,192.9 257,194.3 257.1,197.4 256.6,202.1 255.3,208 253.5,214.7 251,221.9 248.2,229.3 245.3,236.6 242.4,243.7 240,250.3 238.2,256.2 237.6,261.3 238.4,265.5 240.8,268.8 245,271 251,272.3 258.7,272.6 267.9,272.2 278.1,271.2 289,270 300,268.7 310.6,267.9 320.3,267.6 328.5,268.1 334.9,269.7 339.2,272.3 341.3,275.9 341,280.3 338.5,285.2 334,290.2 327.9,294.9 320.6,298.7 312.6,301.2 304.3,302 296.2,300.8 288.8,297.5 282.5,292 277.5,284.5 273.9,275.1 271.9,264.3 271.4,252.5 272.5,240.3 274.9,228.1 278.5,216.5 283.2,205.9 288.8,196.7 295,189.3 301.8,183.8 308.8,180.4 315.9,179.2 323.1,180 329.9,182.9 336.4,187.5 342.4,193.6 347.5,201 351.8,209.3 355,218.1 356.9,226.9 357.6,235.3 357,242.7 354.9,248.8 351.6,253.1 346.9,255.2 341.1,254.9 334.2,252.2 326.6,247.1 318.5,239.8 310,230.5 301.6,219.9 293.5,208.5 285.9,196.9 279.1,185.9 273.3,176 268.7,167.9 265.4,162.1 263.6,158.9 263.3,158.7 264.4,161.3 267.1,166.7 271.2,174.5 276.4,184.5 282.8,196 290,208.6 297.8,221.7 305.9,234.7 314,247.1 321.9,258.4 329.4,268.2 336.1,276 341.8,281.5 346.5,284.4 350.1,284.7 352.4,282.3 353.4,277.2 353.2,269.5 351.8,259.7 349.2,248.1 345.5,235.2 340.8,221.8 335.2,208.4 328.7,196 321.5,185.2 313.8,176.9 305.6,171.6 297.2,169.7 288.8,171.5 280.6,176.9 273,185.7 266.2,197.3 260.6,210.9 256.4,225.8 253.9,240.8 253.3,255.1 254.7,267.6 258.2,277.8 263.6,284.9 270.9,288.8 279.5,289.5 289.2,287.2 299.2,282.5 309.1,276.2 318.4,268.9 326.4,261.6 332.7,255.1 337.1,250.1 339.2,247.1 339.1,246.4 336.7,248 332.2,251.8 325.9,257.5 318.3,264.4 309.8,272.1 300.9,279.9 292,287 283.7,293.1 276.2,297.5 269.9,300.1 264.8,300.6 261.1,299 258.8,295.5 257.7,290.1 257.6,283.2 258.4,275.1 259.8,266.2 261.6,256.7 263.6,247.1 265.6,237.7 267.4,228.8 268.8,220.5 269.8,213.2 270.2,207 270.1,202 269.3,198.5 267.9,196.4 266,195.8 263.6,196.7 261,199.1 258.3,202.7 255.8,207.4 253.5,213 252,219.1 251.4,225.4 252.1,231.7 254.3,237.6 258.1,242.8 263.6,247.1 270.8,250.3 279.5,252.3 289.3,253.1 300,252.7 310.9,251.3 321.6,248.9 331.4,245.8 340,242.2 346.9,238.4 351.8,234.5 354.5,230.9 355.1,227.8 353.7,225.2 350.8,223.5 346.7,222.6 342,222.8 337.2,224 332.8,226.4 329.1,229.9 326.6,234.5 325.3,240 325.3,246.3 326.2,253.3 327.7,260.6 329.5,268 331,275.3 331.8,282.2 331.5,288.3 329.8,293.5 326.6,297.5 321.9,300.3 315.9,301.7 308.9,301.9 301.4,300.9 293.9,299 287.1,296.4 281.5,293.5 277.6,290.4 275.8,287.5 276.2,284.9 278.9,282.7 283.8,280.9 290.4,279.5 298.4,278.1 307,276.7 315.7,274.9 323.9,272.5 330.8,269.2 336,264.9 339.2,259.7 340.1,253.5 338.6,246.7 334.9,239.6 329.2,232.7 321.9,226.6 313.4,221.6 304.1,218.4 294.5,217.2 285.1,218.4 276.2,221.9 268.2,227.6 261.3,235.2 255.6,244.1 251.2,253.7 248.2,263.3 246.5,272 246.1,279 246.7,283.9 248.4,285.9 251,284.9 254.4,280.8 258.5,273.6 263.2,263.6 268.3,251.4 273.7,237.7 279.3,223.2 285.1,208.5 290.7,194.6 296.2,182.1 301.4,171.5 306.2,163.2 310.4,157.4 314.1,154.2 317.3,153.6 319.8,155.3 321.9,158.9 323.5,164 324.8,170.2 325.8,177.1 326.6,184.1 327.3,191.1 327.7,197.6 327.9,203.4 327.7,208.4 327.1,212.5 325.9,215.8 324,218.2 321.4,220 318.1,221.2 314,221.9 309.3,222.1 304.1,221.9 298.7,221.1 293.3,219.8 288.3,217.8 283.8,215.1 280.2,211.6 277.6,207.3 276.3,202.3 276.2,196.7 277.4,190.7 279.7,184.8 282.8,179.4 286.5,175 290.3,172.1 294.1,171.4 297.3,173.3 299.8,178.1 301.2,185.9 301.4,196.7 300.3,210 297.8,225.2 294.1,241.5 289.2,257.8 283.5,273.1 277.1,286.1 270.4,295.7 263.6,301.2 257,301.9 251,297.5 245.6,288.3 241.2,274.7 238,257.7 236,238.5 235.3,218.5 235.9,199.4 237.9,182.7 241.2,169.7 245.6,161.5 251,158.9 257.2,161.9 264.1,170.5 271.3,183.8 278.7,200.9 286,220.2 292.9,240.3 299.4,259.5 305.2,276.2 310.1,289.2 314,297.5 316.9,300.4 318.7,298 319.4,290.6 319,278.9 317.7,264 315.5,247.1 312.6,229.5 309.2,212.4 305.4,197 301.4,184.1 297.4,174.2 293.7,167.7 290.3,164.3 287.5,163.8 285.5,165.6 284.2,169 284,173.1 284.7,177.4 286.3,181.2 288.8,184.1 291.9,185.8 295.4,186.4 299.1,186.1 302.6,185.3 305.5,184.5 307.6,184.2 308.4,184.9 307.8,187.1 305.5,191 301.4,196.7 295.6,204.2 288.4,213.2 279.9,223.2 270.6,233.7 261,244.1 251.6,253.6 242.9,261.7 235.5,267.7 229.7,271.4 225.8,272.3 224,270.6 224.3,266.1 226.5,259.3 230.4,250.5 235.6,240.1 241.5,228.7 247.7,217 253.8,205.3 259.1,194.2 263.6,184.1 266.9,175.2 269,167.8 269.9,162 269.8,157.7 269,155 267.6,153.7 266.2,153.6 264.9,154.6 263.9,156.4 263.6,158.9 264,161.9 264.9,165.1 266.2,168.5 267.7,171.8 269,174.9 269.9,177.7 270,180.1 269.1,181.9 267,183.3 263.6,184.1 259,184.4 253.3,184.4 246.9,184.2 240.1,184 233.3,184 226.9,184.6 221.4,186 217.1,188.4 214.3,191.9 213.2,196.7 213.8,202.6 216,209.6 219.7,217.4 224.7,225.6 230.7,233.8 237.3,241.6 244.2,248.4 251.1,253.9 257.6,257.8 263.6,259.7 268.9,259.7 273.4,257.8 277.1,254.3 280,249.5 282.3,243.9 284,238.1 285.3,232.6 286.5,227.8 287.6,224.1 288.8,221.9 290.3,221.2 292.2,222 294.6,224 297.6,226.8 301.2,230 305.3,233 310,235.4 315.2,236.6 320.8,236.4 326.6,234.5 332.5,230.9 338.4,225.7 343.9,219.3 348.8,212.1 352.8,204.7 355.7,197.7 357.2,191.6 357.2,187.1 355.4,184.5 351.8,184.1 346.4,185.9 339.3,189.9 330.6,195.7 320.5,203.1 309.4,211.4 297.7,220 285.6,228.4 273.6,236 261.9,242.4 251,247.1 241,250.1 232.2,251.3 224.8,250.9 218.9,249.2 214.4,246.6 211.5,243.5 210,240.4 209.9,237.6 211,235.6 213.2,234.5 216.4,234.5 220.5,235.7 225.5,237.9 231.1,240.9 237.5,244.5 244.4,248.3 251.8,252.1 259.7,255.4 267.8,258 276.2,259.7 284.6,260.4 293,260 301.1,258.6 308.9,256.3 316.1,253.3 322.7,249.7 328.3,245.8 333,241.9 336.7,238.1 339.2,234.5 340.6,231.4 341,228.7 340.5,226.6 339.2,224.9 337.4,223.6 335.2,222.8 332.9,222.2 330.6,221.9 328.5,221.8 326.6,221.9 325,222.2 323.5,222.7 322,223.3 320.1,224.2 317.7,225.4 314.4,226.8 310,228.5 304.3,230.3 297.2,232.4 288.8,234.5 279.2,236.6 268.8,238.7 257.8,240.7 246.9,242.5 236.7,244 227.6,245.3 220.4,246.3 215.4,246.9 212.9,247.2 213.2,247.1 216.1,246.7 221.6,245.8 229.1,244.5 238.1,242.7 248.1,240.5 258.3,237.6 268,234.3 276.7,230.5 283.7,226.3 288.8,221.9 291.6,217.4 292.2,212.9 290.7,208.9 287.4,205.4 282.5,202.8 276.5,201.4 270,201.2 263.2,202.4 256.8,205.2 251,209.3 246.2,214.8 242.8,221.3 240.8,228.7 240.6,236.5 242.2,244.3 245.6,251.9 250.9,258.8 257.9,264.7 266.4,269.2 276.2,272.3 286.9,273.7 298.2,273.4 309.3,271.4 319.8,267.8 329,262.6 336.4,256.1 341.5,248.5 343.8,240 343,231.1 339.2,221.9 332.4,212.9 323,204.5 311.4,197 298.5,190.8 285,186.3 271.8,183.8 259.8,183.5 249.9,185.5 242.6,190 238.4,196.7 237.5,205.5 239.8,215.8 245,227.3 252.5,239.3 261.5,251.1 271.3,262 281,271.3 289.6,278.5 296.6,283.2 301.4,284.9 303.6,283.7 303.1,279.7 300.2,273.2 295.1,264.6 288.3,254.7 280.5,244.2 272.3,233.7 264.3,224 257,215.7 251,209.3 246.5,205.1 243.7,203.1 242.6,203.3 243,205.5 244.8,209.3 247.7,214.2 251.4,219.6 255.4,225.1 259.6,230.2 263.6,234.5 267.3,237.7 270.5,239.7 273.3,240.5 275.6,240.2 277.5,239 279,237.1 280.2,234.9 281.1,232.5 281.9,230.2" fill="none" stroke="#72a4fa" stroke-width="1.1"/><g fill="none" stroke="#d2d2d2" stroke-width="1"><circle cx="238.4" cy="297.5" r="5.6"/><circle cx="251" cy="297.5" r="5.6"/><circle cx="263.6" cy="297.5" r="5.6"/><circle cx="276.2" cy="297.5" r="5.6"/><circle cx="288.8" cy="297.5" r="5.6"/><circle cx="301.4" cy="297.5" r="5.6"/><circle cx="314" cy="297.5" r="5.6"/><circle cx="326.6" cy="297.5" r="5.6"/><circle cx="238.4" cy="284.9" r="5.6"/><circle cx="251" cy="284.9" r="5.6"/><circle cx="263.6" cy="284.9" r="5.6"/><circle cx="276.2" cy="284.9" r="5.6"/><circle cx="288.8" cy="284.9" r="5.6"/><circle cx="301.4" cy="284.9" r="5.6"/><circle cx="314" cy="284.9" r="5.6"/><circle cx="326.6" cy="284.9" r="5.6"/><circle cx="213.2" cy="272.3" r="5.6"/><circle cx="225.8" cy="272.3" r="5.6"/><circle cx="238.4" cy="272.3" r="5.6"/><circle cx="251" cy="272.3" r="5.6"/><circle cx="263.6" cy="272.3" r="5.6"/><circle cx="276.2" cy="272.3" r="5.6"/><circle cx="288.8" cy="272.3" r="5.6"/><circle cx="301.4" cy="272.3" r="5.6"/><circle cx="314" cy="272.3" r="5.6"/><circle cx="326.6" cy="272.3" r="5.6"/><circle cx="339.2" cy="272.3" r="5.6"/><circle cx="351.8" cy="272.3" r="5.6"/><circle cx="213.2" cy="259.7" r="5.6"/><circle cx="225.8" cy="259.7" r="5.6"/><circle cx="238.4" cy="259.7" r="5.6"/><circle cx="251" cy="259.7" r="5.6"/><circle cx="263.6" cy="259.7" r="5.6"/><circle cx="276.2" cy="259.7" r="5.6"/><circle cx="288.8" cy="259.7" r="5.6"/><circle cx="301.4" cy="259.7" r="5.6"/><circle cx="314" cy="259.7" r="5.6"/><circle cx="326.6" cy="259.7" r="5.6"/><circle cx="339.2" cy="259.7" r="5.6"/><circle cx="351.8" cy="259.7" r="5.6"/><circle cx="213.2" cy="247.1" r="5.6"/><circle cx="225.8" cy="247.1" r="5.6"/><circle cx="238.4" cy="247.1" r="5.6"/><circle cx="251" cy="247.1" r="5.6"/><circle cx="263.6" cy="247.1" r="5.6"/><circle cx="276.2" cy="247.1" r="5.6"/><circle cx="288.8" cy="247.1" r="5.6"/><circle cx="301.4" cy="247.1" r="5.6"/><circle cx="314" cy="247.1" r="5.6"/><circle cx="326.6" cy="247.1" r="5.6"/><circle cx="339.2" cy="247.1" r="5.6"/><circle cx="351.8" cy="247.1" r="5.6"/><circle cx="213.2" cy="234.5" r="5.6"/><circle cx="225.8" cy="234.5" r="5.6"/><circle cx="238.4" cy="234.5" r="5.6"/><circle cx="251" cy="234.5" r="5.6"/><circle cx="263.6" cy="234.5" r="5.6"/><circle cx="276.2" cy="234.5" r="5.6"/><circle cx="288.8" cy="234.5" r="5.6"/><circle cx="301.4" cy="234.5" r="5.6"/><circle cx="314" cy="234.5" r="5.6"/><circle cx="326.6" cy="234.5" r="5.6"/><circle cx="339.2" cy="234.5" r="5.6"/><circle cx="351.8" cy="234.5" r="5.6"/><circle cx="213.2" cy="221.9" r="5.6"/><circle cx="225.8" cy="221.9" r="5.6"/><circle cx="238.4" cy="221.9" r="5.6"/><circle cx="251" cy="221.9" r="5.6"/><circle cx="263.6" cy="221.9" r="5.6"/><circle cx="276.2" cy="221.9" r="5.6"/><circle cx="288.8" cy="221.9" r="5.6"/><circle cx="301.4" cy="221.9" r="5.6"/><circle cx="314" cy="221.9" r="5.6"/><circle cx="326.6" cy="221.9" r="5.6"/><circle cx="339.2" cy="221.9" r="5.6"/><circle cx="351.8" cy="221.9" r="5.6"/><circle cx="213.2" cy="209.3" r="5.6"/><circle cx="225.8" cy="209.3" r="5.6"/><circle cx="238.4" cy="209.3" r="5.6"/><circle cx="251" cy="209.3" r="5.6"/><circle cx="263.6" cy="209.3" r="5.6"/><circle cx="276.2" cy="209.3" r="5.6"/><circle cx="288.8" cy="209.3" r="5.6"/><circle cx="301.4" cy="209.3" r="5.6"/><circle cx="314" cy="209.3" r="5.6"/><circle cx="326.6" cy="209.3" r="5.6"/><circle cx="339.2" cy="209.3" r="5.6"/><circle cx="351.8" cy="209.3" r="5.6"/><circle cx="213.2" cy="196.7" r="5.6"/><circle cx="225.8" cy="196.7" r="5.6"/><circle cx="238.4" cy="196.7" r="5.6"/><circle cx="251" cy="196.7" r="5.6"/><circle cx="263.6" cy="196.7" r="5.6"/><circle cx="276.2" cy="196.7" r="5.6"/><circle cx="288.8" cy="196.7" r="5.6"/><circle cx="301.4" cy="196.7" r="5.6"/><circle cx="314" cy="196.7" r="5.6"/><circle cx="326.6" cy="196.7" r="5.6"/><circle cx="339.2" cy="196.7" r="5.6"/><circle cx="351.8" cy="196.7" r="5.6"/><circle cx="213.2" cy="184.1" r="5.6"/><circle cx="225.8" cy="184.1" r="5.6"/><circle cx="238.4" cy="184.1" r="5.6"/><circle cx="251" cy="184.1" r="5.6"/><circle cx="263.6" cy="184.1" r="5.6"/><circle cx="276.2" cy="184.1" r="5.6"/><circle cx="288.8" cy="184.1" r="5.6"/><circle cx="301.4" cy="184.1" r="5.6"/><circle cx="314" cy="184.1" r="5.6"/><circle cx="326.6" cy="184.1" r="5.6"/><circle cx="339.2" cy="184.1" r="5.6"/><circle cx="351.8" cy="184.1" r="5.6"/><circle cx="238.4" cy="171.5" r="5.6"/><circle cx="251" cy="171.5" r="5.6"/><circle cx="263.6" cy="171.5" r="5.6"/><circle cx="276.2" cy="171.5" r="5.6"/><circle cx="288.8" cy="171.5" r="5.6"/><circle cx="301.4" cy="171.5" r="5.6"/><circle cx="314" cy="171.5" r="5.6"/><circle cx="326.6" cy="171.5" r="5.6"/><circle cx="238.4" cy="158.9" r="5.6"/><circle cx="251" cy="158.9" r="5.6"/><circle cx="263.6" cy="158.9" r="5.6"/><circle cx="276.2" cy="158.9" r="5.6"/><circle cx="288.8" cy="158.9" r="5.6"/><circle cx="301.4" cy="158.9" r="5.6"/><circle cx="314" cy="158.9" r="5.6"/><circle cx="326.6" cy="158.9" r="5.6"/></g><g fill="#ff4040"><rect x="236.9" y="296.6" width="3" height="2.2"/><rect x="236.7" y="295.7" width="3" height="2.2"/><rect x="249.1" y="295.6" width="3" height="2.2"/><rect x="249.5" y="297.5" width="3" height="2.2"/><rect x="261.7" y="295.9" width="3" height="2.2"/><rect x="262.5" y="296.7" width="3" height="2.2"/><rect x="274.8" y="295.7" width="3" height="2.2"/><rect x="274.7" y="297" width="3" height="2.2"/><rect x="286.2" y="296" width="3" height="2.2"/><rect x="285.8" y="295.4" width="3" height="2.2"/><rect x="298.4" y="296.2" width="3" height="2.2"/><rect x="298.9" y="296.6" width="3" height="2.2"/><rect x="312.6" y="296.3" width="3" height="2.2"/><rect x="310.5" y="296" width="3" height="2.2"/><rect x="325.1" y="296.5" width="3" height="2.2"/><rect x="323.9" y="296" width="3" height="2.2"/><rect x="236.1" y="283.2" width="3" height="2.2"/><rect x="237.7" y="283.2" width="3" height="2.2"/><rect x="249.5" y="284.5" width="3" height="2.2"/><rect x="249" y="283.7" width="3" height="2.2"/><rect x="262.2" y="283.9" width="3" height="2.2"/><rect x="261.1" y="283.9" width="3" height="2.2"/><rect x="275.8" y="282.6" width="3" height="2.2"/><rect x="275.4" y="283.9" width="3" height="2.2"/><rect x="286.8" y="285.4" width="3" height="2.2"/><rect x="287.9" y="282.8" width="3" height="2.2"/><rect x="300" y="284.3" width="3" height="2.2"/><rect x="299.7" y="284.3" width="3" height="2.2"/><rect x="312.4" y="284.3" width="3" height="2.2"/><rect x="313.7" y="283.3" width="3" height="2.2"/><rect x="325.3" y="283.4" width="3" height="2.2"/><rect x="325.2" y="282.9" width="3" height="2.2"/><rect x="211.2" y="271" width="3" height="2.2"/><rect x="212.4" y="272.1" width="3" height="2.2"/><rect x="223.2" y="270.6" width="3" height="2.2"/><rect x="224.8" y="269.6" width="3" height="2.2"/><rect x="236.5" y="271.1" width="3" height="2.2"/><rect x="237.9" y="271.8" width="3" height="2.2"/><rect x="249.2" y="270.9" width="3" height="2.2"/><rect x="249.3" y="272.4" width="3" height="2.2"/><rect x="261.8" y="271" width="3" height="2.2"/><rect x="262.4" y="271.1" width="3" height="2.2"/><rect x="274.5" y="270.3" width="3" height="2.2"/><rect x="274.7" y="270.8" width="3" height="2.2"/><rect x="288.2" y="271.7" width="3" height="2.2"/><rect x="287.3" y="271.7" width="3" height="2.2"/><rect x="299.6" y="272" width="3" height="2.2"/><rect x="299.9" y="271.7" width="3" height="2.2"/><rect x="311.5" y="271.5" width="3" height="2.2"/><rect x="311.1" y="269.6" width="3" height="2.2"/><rect x="324.9" y="270.5" width="3" height="2.2"/><rect x="325.2" y="273" width="3" height="2.2"/><rect x="337" y="270.7" width="3" height="2.2"/><rect x="337.9" y="271.6" width="3" height="2.2"/><rect x="350.2" y="271" width="3" height="2.2"/><rect x="350.9" y="271.6" width="3" height="2.2"/><rect x="210.9" y="258.5" width="3" height="2.2"/><rect x="211.7" y="257.8" width="3" height="2.2"/><rect x="224.5" y="257.9" width="3" height="2.2"/><rect x="225.1" y="258.8" width="3" height="2.2"/><rect x="237" y="258.1" width="3" height="2.2"/><rect x="236.8" y="257" width="3" height="2.2"/><rect x="248.6" y="258.9" width="3" height="2.2"/><rect x="247.8" y="259.3" width="3" height="2.2"/><rect x="260.7" y="259.2" width="3" height="2.2"/><rect x="261.4" y="259.2" width="3" height="2.2"/><rect x="274.8" y="257.4" width="3" height="2.2"/><rect x="275.7" y="259.8" width="3" height="2.2"/><rect x="287.2" y="258.4" width="3" height="2.2"/><rect x="287.2" y="257.8" width="3" height="2.2"/><rect x="300.8" y="258.2" width="3" height="2.2"/><rect x="299.9" y="258" width="3" height="2.2"/><rect x="312" y="257.6" width="3" height="2.2"/><rect x="313.5" y="258.5" width="3" height="2.2"/><rect x="325.9" y="258.6" width="3" height="2.2"/><rect x="324.5" y="258.3" width="3" height="2.2"/><rect x="337.3" y="258.6" width="3" height="2.2"/><rect x="337.4" y="258.4" width="3" height="2.2"/><rect x="349.2" y="258" width="3" height="2.2"/><rect x="351.6" y="258.1" width="3" height="2.2"/><rect x="210.9" y="246.3" width="3" height="2.2"/><rect x="212.8" y="244.8" width="3" height="2.2"/><rect x="224.1" y="245.5" width="3" height="2.2"/><rect x="222.9" y="246.6" width="3" height="2.2"/><rect x="236.9" y="246.1" width="3" height="2.2"/><rect x="236.3" y="246.4" width="3" height="2.2"/><rect x="249.1" y="245.9" width="3" height="2.2"/><rect x="248.6" y="245" width="3" height="2.2"/><rect x="263.2" y="245.6" width="3" height="2.2"/><rect x="262.3" y="246" width="3" height="2.2"/><rect x="274.3" y="245.6" width="3" height="2.2"/><rect x="275.2" y="245.8" width="3" height="2.2"/><rect x="287.2" y="246" width="3" height="2.2"/><rect x="288.2" y="246.5" width="3" height="2.2"/><rect x="300.2" y="245.5" width="3" height="2.2"/><rect x="298.8" y="246.8" width="3" height="2.2"/><rect x="313.3" y="245.9" width="3" height="2.2"/><rect x="312.9" y="246.6" width="3" height="2.2"/><rect x="325.8" y="246.7" width="3" height="2.2"/><rect x="324.7" y="247.2" width="3" height="2.2"/><rect x="336.7" y="246.7" width="3" height="2.2"/><rect x="338.1" y="246.7" width="3" height="2.2"/><rect x="351.8" y="247.2" width="3" height="2.2"/><rect x="349.4" y="244.6" width="3" height="2.2"/><rect x="212.4" y="232.6" width="3" height="2.2"/><rect x="211.7" y="234.1" width="3" height="2.2"/><rect x="223" y="231.7" width="3" height="2.2"/><rect x="224.5" y="233.4" width="3" height="2.2"/><rect x="236.7" y="233.4" width="3" height="2.2"/><rect x="236.2" y="232.2" width="3" height="2.2"/><rect x="249.4" y="232.6" width="3" height="2.2"/><rect x="248.2" y="233.8" width="3" height="2.2"/><rect x="262.1" y="233.7" width="3" height="2.2"/><rect x="261.3" y="232.9" width="3" height="2.2"/><rect x="273.9" y="232.7" width="3" height="2.2"/><rect x="274.9" y="232.8" width="3" height="2.2"/><rect x="287.6" y="233.7" width="3" height="2.2"/><rect x="288.9" y="232.3" width="3" height="2.2"/><rect x="300.6" y="233.3" width="3" height="2.2"/><rect x="299.9" y="232.2" width="3" height="2.2"/><rect x="312.1" y="234" width="3" height="2.2"/><rect x="312.4" y="233.5" width="3" height="2.2"/><rect x="324.9" y="234.3" width="3" height="2.2"/><rect x="325.1" y="231.6" width="3" height="2.2"/><rect x="337.1" y="231.8" width="3" height="2.2"/><rect x="335.1" y="233" width="3" height="2.2"/><rect x="351.4" y="233.4" width="3" height="2.2"/><rect x="349.4" y="232.6" width="3" height="2.2"/><rect x="212.6" y="220.9" width="3" height="2.2"/><rect x="211.7" y="220.8" width="3" height="2.2"/><rect x="224.3" y="221.4" width="3" height="2.2"/><rect x="224.7" y="221" width="3" height="2.2"/><rect x="236.1" y="221.2" width="3" height="2.2"/><rect x="236.4" y="221.7" width="3" height="2.2"/><rect x="248.5" y="220.7" width="3" height="2.2"/><rect x="249.5" y="219.7" width="3" height="2.2"/><rect x="263.5" y="222" width="3" height="2.2"/><rect x="261.7" y="221.4" width="3" height="2.2"/><rect x="275" y="218.7" width="3" height="2.2"/><rect x="274.9" y="220.8" width="3" height="2.2"/><rect x="287.4" y="219.9" width="3" height="2.2"/><rect x="287.1" y="220.7" width="3" height="2.2"/><rect x="300.9" y="221.1" width="3" height="2.2"/><rect x="299.9" y="222" width="3" height="2.2"/><rect x="312.1" y="220.5" width="3" height="2.2"/><rect x="311" y="222.1" width="3" height="2.2"/><rect x="325.9" y="221.5" width="3" height="2.2"/><rect x="325.6" y="220.9" width="3" height="2.2"/><rect x="337.9" y="220.6" width="3" height="2.2"/><rect x="337.5" y="220.8" width="3" height="2.2"/><rect x="351.5" y="221.2" width="3" height="2.2"/><rect x="350.3" y="220.3" width="3" height="2.2"/><rect x="211.2" y="209.5" width="3" height="2.2"/><rect x="212.1" y="208.3" width="3" height="2.2"/><rect x="224" y="207.3" width="3" height="2.2"/><rect x="224.2" y="208.9" width="3" height="2.2"/><rect x="236.6" y="208" width="3" height="2.2"/><rect x="236.7" y="208.3" width="3" height="2.2"/><rect x="248.2" y="208" width="3" height="2.2"/><rect x="248.8" y="208.9" width="3" height="2.2"/><rect x="261.5" y="208.7" width="3" height="2.2"/><rect x="263.3" y="207.9" width="3" height="2.2"/><rect x="274.2" y="208.4" width="3" height="2.2"/><rect x="274.7" y="207.4" width="3" height="2.2"/><rect x="287.7" y="209.8" width="3" height="2.2"/><rect x="287.1" y="208" width="3" height="2.2"/><rect x="299.1" y="208.5" width="3" height="2.2"/><rect x="298.9" y="207.3" width="3" height="2.2"/><rect x="313.5" y="207.5" width="3" height="2.2"/><rect x="313.4" y="209.4" width="3" height="2.2"/><rect x="325.3" y="208.6" width="3" height="2.2"/><rect x="326.7" y="208" width="3" height="2.2"/><rect x="337.2" y="207.1" width="3" height="2.2"/><rect x="337.7" y="209.4" width="3" height="2.2"/><rect x="351.1" y="207.4" width="3" height="2.2"/><rect x="349.6" y="207.8" width="3" height="2.2"/><rect x="211.9" y="195.4" width="3" height="2.2"/><rect x="211.9" y="195.8" width="3" height="2.2"/><rect x="224.1" y="195.6" width="3" height="2.2"/><rect x="224.5" y="195.5" width="3" height="2.2"/><rect x="237.3" y="197.1" width="3" height="2.2"/><rect x="237.4" y="195.6" width="3" height="2.2"/><rect x="248.2" y="195.9" width="3" height="2.2"/><rect x="247.9" y="194.5" width="3" height="2.2"/><rect x="262.8" y="196.2" width="3" height="2.2"/><rect x="262" y="194.2" width="3" height="2.2"/><rect x="274.4" y="195.1" width="3" height="2.2"/><rect x="275.2" y="197.4" width="3" height="2.2"/><rect x="287.5" y="195" width="3" height="2.2"/><rect x="286.4" y="195.6" width="3" height="2.2"/><rect x="299.8" y="194.7" width="3" height="2.2"/><rect x="300" y="194.7" width="3" height="2.2"/><rect x="313.4" y="196.5" width="3" height="2.2"/><rect x="313.4" y="195.2" width="3" height="2.2"/><rect x="325.5" y="195.5" width="3" height="2.2"/><rect x="324.8" y="195.3" width="3" height="2.2"/><rect x="336.7" y="194.4" width="3" height="2.2"/><rect x="338.3" y="195.4" width="3" height="2.2"/><rect x="350.5" y="196.4" width="3" height="2.2"/><rect x="348.9" y="195" width="3" height="2.2"/><rect x="211.8" y="183.3" width="3" height="2.2"/><rect x="211.4" y="183.8" width="3" height="2.2"/><rect x="224.5" y="182" width="3" height="2.2"/><rect x="223.6" y="183.6" width="3" height="2.2"/><rect x="237.3" y="181.5" width="3" height="2.2"/><rect x="238" y="183.5" width="3" height="2.2"/><rect x="250.6" y="182.7" width="3" height="2.2"/><rect x="249.3" y="182.1" width="3" height="2.2"/><rect x="264.1" y="182.9" width="3" height="2.2"/><rect x="263.4" y="182.5" width="3" height="2.2"/><rect x="274.8" y="181.7" width="3" height="2.2"/><rect x="274.4" y="183.8" width="3" height="2.2"/><rect x="286.3" y="183.9" width="3" height="2.2"/><rect x="287.6" y="182.2" width="3" height="2.2"/><rect x="299.5" y="182.6" width="3" height="2.2"/><rect x="299.9" y="182.6" width="3" height="2.2"/><rect x="311.8" y="182.8" width="3" height="2.2"/><rect x="311.7" y="182" width="3" height="2.2"/><rect x="325.1" y="183.7" width="3" height="2.2"/><rect x="323.9" y="183" width="3" height="2.2"/><rect x="337.2" y="182.2" width="3" height="2.2"/><rect x="338.4" y="182.6" width="3" height="2.2"/><rect x="351.5" y="182.4" width="3" height="2.2"/><rect x="350.6" y="182.8" width="3" height="2.2"/><rect x="236.3" y="170.9" width="3" height="2.2"/><rect x="236.8" y="170.9" width="3" height="2.2"/><rect x="249.5" y="169.5" width="3" height="2.2"/><rect x="249.4" y="170.4" width="3" height="2.2"/><rect x="262.9" y="169.7" width="3" height="2.2"/><rect x="262.1" y="169" width="3" height="2.2"/><rect x="275.2" y="169.5" width="3" height="2.2"/><rect x="273.3" y="170.4" width="3" height="2.2"/><rect x="288.2" y="169.2" width="3" height="2.2"/><rect x="286.4" y="169.8" width="3" height="2.2"/><rect x="299" y="170.7" width="3" height="2.2"/><rect x="299.3" y="169.8" width="3" height="2.2"/><rect x="313" y="169.8" width="3" height="2.2"/><rect x="312.8" y="169.6" width="3" height="2.2"/><rect x="324.1" y="168.9" width="3" height="2.2"/><rect x="326.6" y="170.1" width="3" height="2.2"/><rect x="237.1" y="157.8" width="3" height="2.2"/><rect x="237" y="157.8" width="3" height="2.2"/><rect x="251" y="157" width="3" height="2.2"/><rect x="248.3" y="157" width="3" height="2.2"/><rect x="261" y="158.4" width="3" height="2.2"/><rect x="262.8" y="157" width="3" height="2.2"/><rect x="273.6" y="157.5" width="3" height="2.2"/><rect x="275.8" y="155.5" width="3" height="2.2"/><rect x="287.7" y="156.9" width="3" height="2.2"/><rect x="288.1" y="156.9" width="3" height="2.2"/><rect x="299.7" y="156.6" width="3" height="2.2"/><rect x="299.1" y="158.9" width="3" height="2.2"/><rect x="313.2" y="157.5" width="3" height="2.2"/><rect x="311.8" y="156.3" width="3" height="2.2"/><rect x="324.8" y="157.8" width="3" height="2.2"/><rect x="325" y="157.7" width="3" height="2.2"/></g><path d="M567.2 105.8V351.0M567.2 105.8H995.2M610 105.8V351.0M567.2 130.3H995.2M652.8 105.8V351.0M567.2 154.8H995.2M695.6 105.8V351.0M567.2 179.4H995.2M738.4 105.8V351.0M567.2 203.9H995.2M781.2 105.8V351.0M567.2 228.4H995.2M824 105.8V351.0M567.2 252.9H995.2M866.8 105.8V351.0M567.2 277.4H995.2M909.6 105.8V351.0M567.2 302H995.2M952.4 105.8V351.0M567.2 326.5H995.2M995.2 105.8V351.0M567.2 351H995.2" stroke="#585858" stroke-width="1.25" fill="none"/><polyline points="567.5,279 567.7,269 568,260.4 568.2,297.9 568.5,286.9 568.7,246.2 569,292.7 569.2,281.3 569.5,276.2 569.7,265.9 570,274.3 570.2,264.3 570.5,261.7 570.7,285.8 571,257.4 571.2,258.4 571.5,250.2 571.7,249.3 572,255.5 572.2,258.6 572.5,269.5 572.7,268.9 573,267.2 573.2,263.1 573.5,252.1 573.7,263.9 574,258.9 574.2,246 574.5,300.7 574.7,270.5 575,261.2 575.2,275.2 575.5,249.1 575.7,270.7 576,274.4 576.2,259.8 576.5,279.5 576.7,268.3 577,284.6 577.2,295.3 577.5,275.1 577.7,273.7 578,260.8 578.2,264.5 578.5,249.4 578.7,269.4 579,329.7 579.2,276 579.5,277.9 579.7,295.3 580,314.1 580.2,278.8 580.5,249.6 580.7,269.2 581,263.5 581.2,279.5 581.5,282.9 581.7,296.1 582,264 582.2,268.1 582.5,270.5 582.7,259.8 583,290.6 583.2,276.4 583.5,262 583.7,254.6 584,290.1 584.2,248.4 584.5,267.5 584.7,313.2 585,292.7 585.2,285.6 585.5,258.4 585.7,262.4 586,244.8 586.2,279.3 586.5,275.5 586.7,260.5 587,266 587.2,259.9 587.5,276.8 587.7,264.6 588,282 588.2,247 588.5,290 588.7,281.8 589,259.7 589.2,288.9 589.5,254.7 589.7,259.6 590,250.7 590.2,257.5 590.5,262.5 590.7,274.2 591,251.3 591.2,270 591.5,261.2 591.7,273.7 592,253.4 592.2,262.5 592.5,253.8 592.7,247.2 593,290.5 593.2,255.1 593.5,263.7 593.7,253.3 594,259.3 594.2,270.8 594.5,286.1 594.7,247.3 595,265.5 595.2,270.9 595.5,250.7 595.7,275.2 596,250.6 596.2,260.9 596.5,286.7 596.7,285 597,247.5 597.2,258.7 597.5,278.2 597.7,263.5 598,284.4 598.2,276.7 598.5,281.9 598.7,247.8 599,259.6 599.2,285.3 599.5,282 599.7,276.1 600,243.4 600.2,245.3 600.5,256.2 600.7,281.7 601,270.4 601.2,260.4 601.5,271.9 601.7,271.9 602,288.3 602.2,244.3 602.5,251.9 602.7,244.1 603,265.5 603.2,265.6 603.5,244.6 603.7,263.5 604,272.1 604.2,255.1 604.5,282 604.7,264.4 605,248.1 605.2,260.2 605.5,282 605.7,251.3 606,267.4 606.2,252.8 606.5,273.1 606.7,260.1 607,254.9 607.2,257.6 607.5,274.8 607.7,277.9 608,264.9 608.2,239.4 608.5,282 608.7,262.9 609,245.6 609.2,287.5 609.5,260.2 609.7,271.4 610,266.8 610.2,260 610.5,271 610.7,246.8 611,262.5 611.2,253.6 611.5,276.1 611.7,241.3 612,259 612.2,289.8 612.5,246.9 612.7,250 613,251.6 613.2,263 613.5,249.6 613.7,258 614,256.1 614.2,286.9 614.5,265.5 614.7,265.1 615,257.7 615.2,250.3 615.5,259.7 615.7,260.2 616,267.9 616.2,271.9 616.5,265.7 616.7,294 617,267.3 617.2,256.3 617.5,262 617.7,242.5 618,273.8 618.2,252.6 618.5,262.3 618.7,260 619,267.5 619.2,276.3 619.5,259.8 619.7,255.4 620,264.4 620.2,295.1 620.5,284.6 620.7,259.1 621,253.7 621.2,292.2 621.5,256.3 621.7,254.8 622,277.3 622.2,255.7 622.5,263.4 622.7,257.9 623,250.9 623.2,281.2 623.5,284.8 623.7,251.2 624,276 624.2,265.2 624.5,248.8 624.7,259.9 625,242.1 625.2,293.9 625.5,289 625.7,271.2 626,260.5 626.2,290.2 626.5,301.5 626.7,273.5 627,271 627.2,253.4 627.5,273.2 627.7,316.8 628,284.7 628.2,274.5 628.5,261.9 628.7,260.5 629,255.9 629.2,264.7 629.5,247.6 629.7,276 630,283.6 630.2,266 630.5,273.4 630.7,256.1 631,289.9 631.2,264.4 631.5,250.4 631.7,267.4 632,270.9 632.2,279.2 632.5,248.6 632.7,264.4 633,251.3 633.2,252.9 633.5,253.8 633.7,287.7 634,282.5 634.2,258.8 634.5,274.7 634.7,277.3 635,260.3 635.2,266.9 635.5,273.6 635.7,273.1 636,274.6 636.2,291.8 636.5,247.6 636.7,259.9 637,279.9 637.2,277 637.5,262.1 637.7,266.8 638,293.3 638.2,312 638.5,268.7 638.7,255 639,263.5 639.2,262.4 639.5,261.5 639.7,264.6 640,267.2 640.2,263.1 640.5,279.3 640.7,276 641,282.8 641.2,295 641.5,253 641.7,269.6 642,318.7 642.2,272.6 642.5,258.2 642.7,276.3 643,276.3 643.2,257.8 643.5,287.2 643.7,324.7 644,250.5 644.2,280.1 644.5,264.2 644.7,263.4 645,279.9 645.2,298 645.5,292.1 645.7,247.1 646,269.3 646.2,314.5 646.5,267.7 646.7,260 647,265.3 647.2,258.6 647.5,249.6 647.7,258.6 648,276.9 648.2,271.4 648.5,335.3 648.7,264 649,262 649.2,260.2 649.5,298.8 649.7,256.9 650,258.7 650.2,248.1 650.5,271 650.7,262.4 651,251.5 651.2,274.1 651.5,279.8 651.7,245.7 652,257.2 652.2,260.8 652.5,262.7 652.7,263.3 653,267.9 653.2,307.6 653.4,266.5 653.7,258.7 653.9,251 654.2,278.6 654.4,279.3 654.7,261.7 654.9,288.8 655.2,256.8 655.4,287.2 655.7,267 655.9,251.3 656.2,274.2 656.4,280.1 656.7,261.4 656.9,256.9 657.2,263.2 657.4,301.7 657.7,273 657.9,311 658.2,258.2 658.4,297.4 658.7,248.5 658.9,266.7 659.2,277.5 659.4,257.5 659.7,264 659.9,262.3 660.2,304.6 660.4,264.5 660.7,323.1 660.9,282.6 661.2,256.7 661.4,259.6 661.7,270.4 661.9,284.8 662.2,259.7 662.4,298.7 662.7,258.2 662.9,260.8 663.2,277.8 663.4,260.4 663.7,267 663.9,258.4 664.2,269.8 664.4,279.5 664.7,250.7 664.9,246.1 665.2,254.5 665.4,279.9 665.7,257.4 665.9,268.1 666.2,272.3 666.4,259 666.7,279.6 666.9,284.8 667.2,276.9 667.4,265.3 667.7,263.2 667.9,281.9 668.2,262.9 668.4,259.1 668.7,282.1 668.9,267.3 669.2,289 669.4,274.2 669.7,262.3 669.9,249.1 670.2,261.4 670.4,277.7 670.7,264.3 670.9,274.2 671.2,288.2 671.4,259 671.7,257.6 671.9,263.6 672.2,277.9 672.4,269.5 672.7,263.1 672.9,272.2 673.2,264.3 673.4,260.6 673.7,272.7 673.9,263.6 674.2,280.1 674.4,265.8 674.7,269.4 674.9,256.3 675.2,279.4 675.4,282.3 675.7,266.7 675.9,271.5 676.2,258.5 676.4,266 676.7,273.3 676.9,250.1 677.2,272.9 677.4,266 677.7,261.2 677.9,262.7 678.2,257.8 678.4,271 678.7,263.5 678.9,304.7 679.2,261.2 679.4,275.1 679.7,247.5 679.9,294.2 680.2,253.2 680.4,249.1 680.7,272.8 680.9,281.9 681.2,278.8 681.4,290.9 681.7,281.9 681.9,279.6 682.2,307 682.4,258.2 682.7,270.7 682.9,271 683.2,268.5 683.4,252.8 683.7,259 683.9,272.7 684.2,267.9 684.4,279.5 684.7,285.4 684.9,279 685.2,259.7 685.4,269.9 685.7,285.1 685.9,277.5 686.2,269 686.4,263.1 686.7,306.4 686.9,314.4 687.2,294.8 687.4,267.2 687.7,281.3 687.9,253.7 688.2,258.1 688.4,279.5 688.7,247.1 688.9,280.4 689.2,266.7 689.4,255.8 689.7,264.9 689.9,282.6 690.2,284.4 690.4,292.8 690.7,269.6 690.9,258.7 691.2,246 691.4,260.2 691.7,264.5 691.9,244.2 692.2,263.6 692.4,254.4 692.7,270 692.9,273.2 693.2,262 693.4,270.6 693.7,254.7 693.9,260.1 694.2,297.8 694.4,257.5 694.7,242.4 694.9,263.1 695.2,248.7 695.4,266.5 695.7,248.7 695.9,262.6 696.2,267.2 696.4,269.9 696.7,250.5 696.9,272.5 697.2,256 697.4,251.2 697.7,261.8 697.9,256.6 698.2,245.3 698.4,289.5 698.7,281.8 698.9,278.9 699.2,258.2 699.4,261.8 699.7,260 699.9,288.1 700.2,264.9 700.4,253.1 700.7,258.9 700.9,258.4 701.2,274.6 701.4,266.9 701.7,266.6 701.9,269.5 702.2,255.7 702.4,262.6 702.7,290.5 702.9,261.3 703.2,253.2 703.4,284.4 703.7,263.6 703.9,278.1 704.2,253.8 704.4,258.9 704.7,270 704.9,262.7 705.2,252.8 705.4,270.7 705.7,248.4 705.9,245.2 706.2,259.1 706.4,271.6 706.7,268 706.9,253.9 707.2,259.4 707.4,277.2 707.7,271.5 707.9,284.8 708.2,297.6 708.4,274.4 708.7,266.1 708.9,267.1 709.2,254 709.4,250.7 709.7,250.2 709.9,274.6 710.2,247.4 710.4,260.9 710.7,291.4 710.9,273.8 711.2,264.5 711.4,260.7 711.7,250.9 711.9,260.7 712.2,296.3 712.4,252.2 712.7,301.8 712.9,276.7 713.2,263 713.4,290.7 713.7,253.7 713.9,275.1 714.2,269.5 714.4,267.4 714.7,273.5 714.9,295.9 715.2,280.4 715.4,277.8 715.7,257.3 715.9,281.7 716.2,291.5 716.4,279.1 716.7,267 716.9,257.6 717.2,273.5 717.4,263.9 717.7,271 717.9,281.4 718.2,269.6 718.4,265.7 718.7,295.6 718.9,272.5 719.2,254.2 719.4,279.2 719.7,299.1 719.9,286.4 720.2,276.7 720.4,280.4 720.7,245.5 720.9,296.5 721.2,287.8 721.4,262 721.7,264.4 721.9,266.7 722.2,273.4 722.4,278.5 722.7,265.3 722.9,277.2 723.2,255.9 723.4,262.6 723.7,272 723.9,266.9 724.2,261.5 724.4,256.3 724.7,280.7 724.9,276.6 725.2,288 725.4,310.7 725.7,255 725.9,259.1 726.2,265.7 726.4,259.6 726.7,257.3 726.9,280.1 727.2,251 727.4,236.9 727.7,252.9 727.9,254.4 728.2,279.9 728.4,248.2 728.7,286.1 728.9,266.6 729.2,283 729.4,257.1 729.7,267 729.9,270.2 730.2,266.4 730.4,252.4 730.7,264 730.9,276.3 731.2,270.4 731.4,273.2 731.7,254.1 731.9,256.8 732.2,257.6 732.4,262.1 732.7,240.2 732.9,264.4 733.2,292.6 733.4,264.8 733.7,258.6 733.9,238.5 734.2,285.4 734.4,261.1 734.7,259.2 734.9,272.6 735.2,280.2 735.4,267.2 735.7,302.9 735.9,288 736.2,255.5 736.4,251.2 736.7,252.2 736.9,256.8 737.2,284.5 737.4,255 737.7,282.6 737.9,259.3 738.2,271.7 738.4,262.6 738.6,278.8 738.9,271.3 739.1,256.1 739.4,262.6 739.6,250.5 739.9,272.5 740.1,263 740.4,282.6 740.6,267.5 740.9,250.2 741.1,250.7 741.4,291.5 741.6,261.3 741.9,247.1 742.1,258.5 742.4,252.9 742.6,292.2 742.9,264.8 743.1,246.8 743.4,272.3 743.6,282 743.9,262.6 744.1,267.7 744.4,276.8 744.6,270.3 744.9,255.6 745.1,246.2 745.4,294.7 745.6,266.4 745.9,267 746.1,260.9 746.4,255.5 746.6,265 746.9,251.4 747.1,280.2 747.4,254.7 747.6,248.3 747.9,249.7 748.1,279.5 748.4,257.4 748.6,266.2 748.9,287.3 749.1,258.5 749.4,294.7 749.6,278.2 749.9,275.7 750.1,252.8 750.4,258.1 750.6,257.9 750.9,243.3 751.1,285.4 751.4,263.5 751.6,286.1 751.9,254.4 752.1,286.8 752.4,278.1 752.6,266.7 752.9,259.5 753.1,267.1 753.4,266.3 753.6,255.1 753.9,272.8 754.1,260.4 754.4,273.5 754.6,276 754.9,266.6 755.1,271.8 755.4,277.8 755.6,294.9 755.9,245.8 756.1,263.1 756.4,264.4 756.6,293.7 756.9,248.1 757.1,276.3 757.4,265.3 757.6,265.6 757.9,251.1 758.1,269.3 758.4,248.6 758.6,268.9 758.9,254.4 759.1,278.3 759.4,259.8 759.6,259.4 759.9,269.7 760.1,266.8 760.4,300 760.6,255.3 760.9,263.8 761.1,270.4 761.4,271.8 761.6,249.9 761.9,263.7 762.1,245.3 762.4,233.5 762.6,230.9 762.9,227.1 763.1,213.3 763.4,212.1 763.6,197.6 763.9,199.3 764.1,229 764.4,225.6 764.6,192.4 764.9,179.5 765.1,196.3 765.4,198.5 765.6,186.5 765.9,167.8 766.1,186.4 766.4,190.7 766.6,195.3 766.9,184.1 767.1,162.4 767.4,177.4 767.6,160.7 767.9,165.3 768.1,203.4 768.4,168.9 768.6,169.7 768.9,166.8 769.1,161.5 769.4,163.1 769.6,183.3 769.9,169.8 770.1,166.1 770.4,174.2 770.6,162.6 770.9,178.1 771.1,170.8 771.4,169.5 771.6,176.1 771.9,163.3 772.1,172 772.4,168.7 772.6,182.6 772.9,164.5 773.1,166.1 773.4,159.8 773.6,203.3 773.9,178.4 774.1,157.2 774.4,166.7 774.6,175.4 774.9,162.1 775.1,178.7 775.4,173 775.6,164.6 775.9,168 776.1,203.2 776.4,156.5 776.6,176 776.9,177.5 777.1,166.4 777.4,157.7 777.6,165.9 777.9,158.3 778.1,161.8 778.4,168.7 778.6,154.7 778.9,166.6 779.1,196.5 779.4,186.5 779.6,188 779.9,154.2 780.1,181.2 780.4,188.8 780.6,161.3 780.9,158 781.1,165.1 781.4,158 781.6,164.8 781.9,154.3 782.1,171.1 782.4,150.2 782.6,187.3 782.9,195 783.1,173.3 783.4,158.3 783.6,173.2 783.9,155.1 784.1,188.3 784.4,197.1 784.6,172.5 784.9,160.9 785.1,167.1 785.4,211.4 785.6,170.6 785.9,176.7 786.1,155.2 786.4,159.8 786.6,180.9 786.9,154.3 787.1,192.2 787.4,161 787.6,190 787.9,161.1 788.1,199 788.4,170 788.6,166.8 788.9,187.3 789.1,165.7 789.4,179.9 789.6,156 789.9,179.8 790.1,171.6 790.4,168.3 790.6,157.2 790.9,190.6 791.1,170.6 791.4,176.5 791.6,189.6 791.9,176.2 792.1,175 792.4,163.8 792.6,164.1 792.9,183.3 793.1,153.8 793.4,198.5 793.6,176.1 793.9,187.5 794.1,178 794.4,176.9 794.6,176.5 794.9,189.1 795.1,202.9 795.4,166.7 795.6,184.5 795.9,192.3 796.1,178.1 796.4,191.7 796.6,185.1 796.9,214.8 797.1,217.7 797.4,200.3 797.6,176.8 797.9,192.1 798.1,191.8 798.4,214.9 798.6,241.4 798.9,230.8 799.1,227.5 799.4,223 799.6,255.3 799.9,261.3 800.1,263.5 800.4,252.9 800.6,264.3 800.9,262.9 801.1,261.5 801.4,256.2 801.6,264.4 801.9,264.8 802.1,243.8 802.4,256.5 802.6,265.7 802.9,268.2 803.1,268.3 803.4,260.6 803.6,273.8 803.9,262.6 804.1,259.7 804.4,258.9 804.6,278.2 804.9,253.8 805.1,250.4 805.4,254.5 805.6,282.4 805.9,241.2 806.1,276.9 806.4,284.6 806.6,275.5 806.9,263.5 807.1,276.3 807.4,263.6 807.6,270.2 807.9,257.4 808.1,263.2 808.4,256.9 808.6,279 808.9,286.1 809.1,266.5 809.4,252.2 809.6,258.8 809.9,255.3 810.1,293.1 810.4,263.7 810.6,271.9 810.9,251.1 811.1,244.3 811.4,285.7 811.6,308.6 811.9,260.8 812.1,262.6 812.4,255.9 812.6,266.6 812.9,246.3 813.1,323.4 813.4,301.8 813.6,263.4 813.9,264.5 814.1,266.8 814.4,260.4 814.6,267.9 814.9,257.1 815.1,270.6 815.4,272.1 815.6,270.2 815.9,264.2 816.1,275.3 816.4,272 816.6,272.9 816.9,267.1 817.1,252.1 817.4,267.1 817.6,281 817.9,258.9 818.1,249.7 818.4,266.2 818.6,259.7 818.9,266.1 819.1,287.9 819.4,285.5 819.6,261 819.9,268 820.1,276.4 820.4,299.6 820.6,263.2 820.9,280.1 821.1,260.8 821.4,273.5 821.6,281.8 821.9,273.9 822.1,242.2 822.4,277.6 822.6,274 822.9,259.7 823.1,254.2 823.4,267.3 823.6,256.2 823.9,267.1 824.1,270.2 824.3,262.5 824.6,267.6 824.8,288.9 825.1,271.6 825.3,282 825.6,274.5 825.8,266.1 826.1,269 826.3,258.9 826.6,250 826.8,260.1 827.1,257.5 827.3,259.3 827.6,266.9 827.8,247 828.1,255.4 828.3,278.6 828.6,279.2 828.8,293.1 829.1,258.7 829.3,251.6 829.6,339.2 829.8,257.2 830.1,253 830.3,294.4 830.6,273.9 830.8,287.8 831.1,262.2 831.3,265.4 831.6,261.7 831.8,278.3 832.1,283.5 832.3,251.5 832.6,295.5 832.8,278.1 833.1,281.9 833.3,339.8 833.6,262.9 833.8,265.7 834.1,261.8 834.3,245.5 834.6,252.8 834.8,264.1 835.1,310.1 835.3,270.3 835.6,252 835.8,262.3 836.1,261.8 836.3,271.8 836.6,264.1 836.8,291 837.1,275.2 837.3,256.1 837.6,267.4 837.8,246.1 838.1,257.6 838.3,262.7 838.6,260.1 838.8,279.2 839.1,270.7 839.3,267.7 839.6,265.5 839.8,249.9 840.1,292.3 840.3,268.5 840.6,259.7 840.8,274 841.1,246.5 841.3,264.6 841.6,252.4 841.8,264.5 842.1,255.4 842.3,245.9 842.6,263.1 842.8,267 843.1,260.4 843.3,260.8 843.6,269.8 843.8,251 844.1,253.1 844.3,266.8 844.6,278.6 844.8,268.3 845.1,246 845.3,249.1 845.6,262.7 845.8,266.6 846.1,257.4 846.3,253.9 846.6,288.5 846.8,253.6 847.1,262.2 847.3,258.1 847.6,276.1 847.8,286.5 848.1,270.3 848.3,263.4 848.6,256.1 848.8,255.3 849.1,263.2 849.3,252.6 849.6,254.3 849.8,274.3 850.1,300.3 850.3,245 850.6,246.4 850.8,248 851.1,255.7 851.3,252.5 851.6,269.4 851.8,248.5 852.1,259.6 852.3,253.4 852.6,254.8 852.8,283.3 853.1,280.4 853.3,253.7 853.6,265.4 853.8,258.1 854.1,266.3 854.3,254.1 854.6,301.4 854.8,247 855.1,261.8 855.3,253.2 855.6,245.8 855.8,241 856.1,274.7 856.3,280.6 856.6,259.1 856.8,258.5 857.1,292.1 857.3,320.2 857.6,271.9 857.8,258.9 858.1,294.8 858.3,253.8 858.6,268.7 858.8,258.5 859.1,260.6 859.3,268.6 859.6,271 859.8,267.5 860.1,263.5 860.3,246.6 860.6,248.9 860.8,266.6 861.1,276.1 861.3,292.6 861.6,273.5 861.8,259.3 862.1,296.6 862.3,268 862.6,283.4 862.8,270.8 863.1,273.2 863.3,261.9 863.6,274.1 863.8,254 864.1,284.2 864.3,291 864.6,275.1 864.8,286.4 865.1,260 865.3,242 865.6,272.7 865.8,255.1 866.1,280.1 866.3,252 866.6,259.4 866.8,261.5 867.1,269.2 867.3,268 867.6,258.3 867.8,263 868.1,275.7 868.3,260.6 868.6,275.2 868.8,255.2 869.1,255 869.3,269 869.6,258.8 869.8,272.5 870.1,256 870.3,256.3 870.6,252.1 870.8,251.8 871.1,256.4 871.3,249.6 871.6,292.2 871.8,253.8 872.1,280.4 872.3,250.7 872.6,259.8 872.8,258 873.1,262.2 873.3,282.7 873.6,256.5 873.8,255 874.1,257.3 874.3,282.6 874.6,257.9 874.8,247.3 875.1,264.4 875.3,292.1 875.6,277.3 875.8,267.7 876.1,301.4 876.3,255.8 876.6,276.5 876.8,245.6 877.1,265.2 877.3,251.3 877.6,254.8 877.8,277.5 878.1,277.3 878.3,255.7 878.6,267.1 878.8,272.3 879.1,283.7 879.3,263.1 879.6,272.9 879.8,248.7 880.1,267.9 880.3,250.3 880.6,291.1 880.8,261.4 881.1,269.5 881.3,248.1 881.6,295.3 881.8,248.6 882.1,266.4 882.3,288.7 882.6,250.9 882.8,280.1 883.1,263 883.3,261.1 883.6,273.5 883.8,255.7 884.1,279.9 884.3,284.8 884.6,278.1 884.8,267.5 885.1,271.2 885.3,252.7 885.6,263.4 885.8,308.6 886.1,267.5 886.3,283.9 886.6,255.5 886.8,258.9 887.1,256.1 887.3,263.3 887.6,248.2 887.8,267.2 888.1,266.3 888.3,265.1 888.6,291.2 888.8,261.4 889.1,255.8 889.3,295.9 889.6,261.2 889.8,273.6 890.1,251.8 890.3,305.1 890.6,275.2 890.8,275.7 891.1,267.7 891.3,277.9 891.6,246.5 891.8,282.3 892.1,298.9 892.3,269.2 892.6,251.4 892.8,271.7 893.1,250.8 893.3,284.6 893.6,269.9 893.8,283.2 894.1,272.9 894.3,273.2 894.6,249.2 894.8,274.8 895.1,283 895.3,265.1 895.6,282.5 895.8,300 896.1,265.6 896.3,253.1 896.6,268.1 896.8,259 897.1,266.3 897.3,259.9 897.6,267.7 897.8,257.1 898.1,271.8 898.3,286.8 898.6,264.5 898.8,260.3 899.1,271.1 899.3,256.9 899.6,264.2 899.8,256.6 900.1,289.1 900.3,284.2 900.6,266.8 900.8,278 901.1,257.5 901.3,262.4 901.6,252.7 901.8,267.9 902.1,265.5 902.3,246.8 902.6,258.9 902.8,273.3 903.1,261.6 903.3,257.9 903.6,265.7 903.8,267.2 904.1,289.8 904.3,261.6 904.6,302 904.8,257.4 905.1,272.9 905.3,282.5 905.6,267.3 905.8,265.1 906.1,265.4 906.3,258.6 906.6,275.5 906.8,293.4 907.1,256.3 907.3,297.8 907.6,267.4 907.8,286.6 908.1,268.6 908.3,255.7 908.6,281.5 908.8,253.6 909.1,280.9 909.3,276.8 909.5,291.3 909.8,268.7 910,268.3 910.3,281.6 910.5,271.8 910.8,268.6 911,257.6 911.3,260.9 911.5,280.5 911.8,284.2 912,265.4 912.3,288.8 912.5,285.9 912.8,262.2 913,283.4 913.3,272.3 913.5,271 913.8,273.7 914,259.9 914.3,265.5 914.5,259.5 914.8,284.4 915,278.2 915.3,264.1 915.5,321.5 915.8,275.4 916,249.4 916.3,271.9 916.5,275.6 916.8,254.1 917,259.2 917.3,254.2 917.5,263 917.8,294.8 918,262.7 918.3,291.1 918.5,254.5 918.8,271.9 919,276.3 919.3,303.8 919.5,336.5 919.8,266.9 920,258.9 920.3,268.8 920.5,254.2 920.8,267.5 921,275.5 921.3,261.6 921.5,274.9 921.8,268.9 922,275.7 922.3,268 922.5,253.1 922.8,267 923,275.7 923.3,253.8 923.5,265.2 923.8,278.1 924,264.3 924.3,259.2 924.5,269.3 924.8,256.7 925,258.9 925.3,279.9 925.5,269.8 925.8,245.8 926,262.1 926.3,270.7 926.5,273.7 926.8,283.8 927,265.4 927.3,304.6 927.5,267.5 927.8,263 928,263.1 928.3,257.7 928.5,286.1 928.8,263.1 929,257.6 929.3,253.6 929.5,273.7 929.8,256.2 930,271 930.3,317.8 930.5,250.8 930.8,259.4 931,254.9 931.3,297.8 931.5,273 931.8,257.2 932,257.8 932.3,255 932.5,264.1 932.8,259.1 933,275 933.3,270.5 933.5,256.7 933.8,268.1 934,260.8 934.3,258.4 934.5,256.5 934.8,259.8 935,266.5 935.3,288.3 935.5,250.9 935.8,271.9 936,276 936.3,272.6 936.5,255.3 936.8,252.7 937,275.3 937.3,273.8 937.5,252.2 937.8,265.9 938,277.2 938.3,286.6 938.5,262.8 938.8,270.5 939,258.2 939.3,283.1 939.5,269.5 939.8,263.6 940,263.5 940.3,270.1 940.5,308.6 940.8,256 941,267.5 941.3,267.7 941.5,285.5 941.8,264.4 942,245.8 942.3,270.1 942.5,250.1 942.8,279.6 943,274.8 943.3,267.9 943.5,255.8 943.8,254.4 944,267.3 944.3,264.3 944.5,281.4 944.8,253.7 945,275.4 945.3,254.9 945.5,341.6 945.8,265.8 946,253.2 946.3,263.2 946.5,254.9 946.8,268.8 947,268.3 947.3,261.6 947.5,263.7 947.8,273.1 948,272 948.3,259 948.5,281.2 948.8,247.3 949,260.7 949.3,275.9 949.5,257.8 949.8,272.4 950,260.6 950.3,258.6 950.5,276.2 950.8,266.2 951,250.4 951.3,261.4 951.5,252.4 951.8,283.1 952,270.9 952.3,260 952.5,256.1 952.8,265 953,251.7 953.3,260.7 953.5,249.8 953.8,259.1 954,273.4 954.3,267.8 954.5,259.9 954.8,268 955,282 955.3,263.5 955.5,253.9 955.8,274.6 956,269.1 956.3,266.4 956.5,279.2 956.8,273.5 957,276 957.3,253 957.5,250.9 957.8,262.4 958,306.1 958.3,286.1 958.5,251.2 958.8,267.2 959,263 959.3,266.6 959.5,276 959.8,248.2 960,252.1 960.3,253.5 960.5,325.2 960.8,250 961,251.6 961.3,280.7 961.5,266.2 961.8,287.3 962,278.1 962.3,265.6 962.5,276.1 962.8,298 963,258.7 963.3,261.5 963.5,259.4 963.8,246.5 964,261.7 964.3,269.1 964.5,253.8 964.8,263.5 965,260.9 965.3,278.9 965.5,241.4 965.8,256.3 966,265.5 966.3,262.6 966.5,289 966.8,264.2 967,257.1 967.3,257.1 967.5,245.9 967.8,265.6 968,261.5 968.3,265.7 968.5,256.8 968.8,291.8 969,274.3 969.3,253.7 969.5,249.7 969.8,272.9 970,255.5 970.3,261.3 970.5,267.1 970.8,271.3 971,262.1 971.3,275.3 971.5,299.4 971.8,250.2 972,256.7 972.3,268.7 972.5,280.8 972.8,250.9 973,259.7 973.3,289.5 973.5,253 973.8,247.6 974,262.8 974.3,256.5 974.5,259.7 974.8,258.6 975,252.4 975.3,260.7 975.5,254.7 975.8,255.9 976,244.2 976.3,243 976.5,287.1 976.8,292.1 977,274.6 977.3,276.5 977.5,265.5 977.8,247.6 978,281.6 978.3,284.1 978.5,269.8 978.8,285.4 979,295 979.3,253.3 979.5,266.8 979.8,258.4 980,272.9 980.3,295.5 980.5,246.9 980.8,288.1 981,271.6 981.3,253.8 981.5,268.9 981.8,265.1 982,266.8 982.3,264.8 982.5,257.2 982.8,268.6 983,302.4 983.3,318.8 983.5,266.6 983.8,251.5 984,272 984.3,277 984.5,267.9 984.8,264.7 985,255.7 985.3,264.8 985.5,259.5 985.8,265.1 986,267.3 986.3,293.2 986.5,250.6 986.8,288.7 987,258.4 987.3,256.2 987.5,283.7 987.8,266.1 988,275.5 988.3,280.3 988.5,253.3 988.8,255.3 989,287.6 989.3,256.3 989.5,268.8 989.8,309.4 990,258.2 990.3,262 990.5,258 990.8,262.6 991,284.4 991.3,272.7 991.5,250.8 991.8,269.9 992,306.9 992.3,289.4 992.5,262.8 992.8,284.1 993,251.8 993.3,308.3 993.5,278.9 993.8,286.8 994,260.3 994.3,289.5 994.5,244 994.8,276.4 995,254.9" fill="none" stroke="#f8f800" stroke-width="1.15"/><path d="M69 436.0V672.0M69.0 436H496.0M111.7 436.0V672.0M69.0 459.6H496.0M154.4 436.0V672.0M69.0 483.2H496.0M197.1 436.0V672.0M69.0 506.8H496.0M239.8 436.0V672.0M69.0 530.4H496.0M282.5 436.0V672.0M69.0 554H496.0M325.2 436.0V672.0M69.0 577.6H496.0M367.9 436.0V672.0M69.0 601.2H496.0M410.6 436.0V672.0M69.0 624.8H496.0M453.3 436.0V672.0M69.0 648.4H496.0M496 436.0V672.0M69.0 672H496.0" stroke="#585858" stroke-width="1.25" fill="none"/><path d="M69 596.6 86.8 594 104.6 590.7 122.4 587 140.2 582.9 158 578.7 175.8 574.3 193.5 569.2 211.3 564.6 229.1 560 246.9 555.5 264.7 551.6 282.5 547.9 300.3 544.6 318.1 542.1 335.9 540.1 353.7 538.9 371.5 538.5 389.2 538.6 407 540 424.8 541.8 442.6 544.8 460.4 549 478.2 553.8 496 559.6M69 559.6 86.8 566 104.6 572.7 122.4 580.1 140.2 587.4 158 594.3 175.8 601.2 193.5 607.2 211.3 612.7 229.1 616.8 246.9 619.7 264.7 621.3 282.5 621.2 300.3 620 318.1 616.9 335.9 612.9 353.7 607.9 371.5 602.6 389.2 596.7 407 590.9 424.8 585.5 442.6 580.8 460.4 577 478.2 574.3 496 572.8M69 572.8 86.8 572.1 104.6 573.3 122.4 575.2 140.2 578 158 581.1 175.8 584.3 193.5 586.9 211.3 588.9 229.1 590 246.9 589.5 264.7 587.5 282.5 584.1 300.3 579.1 318.1 572.4 335.9 564.6 353.7 556.2 371.5 547.3 389.2 538.3 407 529.8 424.8 522.5 442.6 516.8 460.4 512.8 478.2 510.8 496 511.7M69 511.7 86.8 514.7 104.6 520.3 122.4 528.1 140.2 537.4 158 548.3 175.8 559.6 193.5 572 211.3 583.8 229.1 595 246.9 605.1 264.7 614.2 282.5 620.5 300.3 625.4 318.1 627.6 335.9 627.6 353.7 625.2 371.5 620.8 389.2 615 407 607.8 424.8 599.3 442.6 589.9 460.4 580.2 478.2 570 496 560.3M69 560.3 86.8 550.7 104.6 541.8 122.4 533.7 140.2 526 158 519 175.8 512.9 193.5 507.4 211.3 502.6 229.1 498.2 246.9 494.1 264.7 490.2 282.5 487.3 300.3 484.6 318.1 482.5 335.9 480.4 353.7 479.8 371.5 480.2 389.2 481.2 407 482.8 424.8 486 442.6 490.4 460.4 496.4 478.2 503.6 496 511.6M69 511.6 86.8 520.7 104.6 530.4 122.4 541.3 140.2 552.2 158 562.8 175.8 572.9 193.5 582.6 211.3 591 229.1 598.1 246.9 603.4 264.7 607.2 282.5 609 300.3 608.9 318.1 607.5 335.9 604.5 353.7 599.9 371.5 594.5 389.2 588.5 407 582.3 424.8 576.3 442.6 571 460.4 566.2 478.2 562.8 496 560.7M69 560.7 86.8 560 104.6 560.4 122.4 562.1 140.2 565 158 569 175.8 573.3 193.5 578.4 211.3 583.1 229.1 587.6 246.9 591.4 264.7 594.9 282.5 597.4 300.3 598.3 318.1 598.1 335.9 596.2 353.7 593.2 371.5 589.1 389.2 584 407 577.4 424.8 570 442.6 562 460.4 553.7 478.2 544.6 496 535.8M69 535.8 86.8 526.9 104.6 518.5 122.4 510.8 140.2 504.2 158 498.2 175.8 493.5 193.5 490.5 211.3 489.3 229.1 489.3 246.9 491.1 264.7 494.8 282.5 499.5 300.3 506.2 318.1 514.5 335.9 523.9 353.7 534.3 371.5 545.6 389.2 557.8 407 569.8 424.8 581.3 442.6 592.8 460.4 603.3 478.2 612.6 496 621.2M69 621.2 86.8 628.6 104.6 634.4 122.4 638.8 140.2 641.4 158 642.8 175.8 642.2 193.5 640.8 211.3 638.2 229.1 634.7 246.9 630.6 264.7 626.3 282.5 620.8 300.3 615.3 318.1 609.7 335.9 603.8 353.7 598.3 371.5 592.7 389.2 587.4 407 582.2 424.8 577.6 442.6 572.9 460.4 568.7 478.2 564.3 496 561M69 561 86.8 557.4 104.6 554.1 122.4 551 140.2 548.1 158 545.5 175.8 542.8 193.5 540.1 211.3 536.8 229.1 533.8 246.9 530.6 264.7 527.4 282.5 523.7 300.3 520.3 318.1 517 335.9 513.7 353.7 510.3 371.5 507.3 389.2 505.1 407 503.6 424.8 503.5 442.6 504.3 460.4 505.9 478.2 508.7 496 512.6M69 512.6 86.8 517.8 104.6 523.6 122.4 530.8 140.2 538.3 158 546.2 175.8 554.1 193.5 561.4 211.3 567.8 229.1 573.7 246.9 578.5 264.7 581.9 282.5 583.9 300.3 584.3 318.1 583.2 335.9 580 353.7 576.3 371.5 570.8 389.2 564.4 407 557.8 424.8 550.8 442.6 543.4 460.4 536.5 478.2 529.8 496 523.7M69 523.7 86.8 518.1 104.6 513.4 122.4 509.7 140.2 506.6 158 505 175.8 504 193.5 503.6 211.3 504.3 229.1 505.4 246.9 506.9 264.7 508.9 282.5 511.3 300.3 513.9 318.1 516.6 335.9 519.9 353.7 523.4 371.5 527.1 389.2 531.1 407 535.2 424.8 539.9 442.6 544.5 460.4 549.3 478.2 554.6 496 559.9M69 559.9 86.8 565.6 104.6 571.2 122.4 577 140.2 582.4 158 588.1 175.8 593.6 193.5 599.4 211.3 604.4 229.1 609.4 246.9 613.5 264.7 617.3 282.5 621.1 300.3 624 318.1 626.9 335.9 628.9 353.7 630.2 371.5 630.5 389.2 630 407 628.2 424.8 626 442.6 623 460.4 619.1 478.2 614.1 496 607.9M69 607.9 86.8 601.5 104.6 594 122.4 585.9 140.2 577.5 158 569 175.8 561 193.5 553.1 211.3 545.3 229.1 538.1 246.9 532.1 264.7 527.4 282.5 523.9 300.3 520.7 318.1 519.4 335.9 518.9 353.7 519.6 371.5 520.9 389.2 522.2 407 524.3 424.8 526.8 442.6 529.4 460.4 532 478.2 533.9 496 535.4M69 535.4 86.8 537.2 104.6 537.7 122.4 538.4 140.2 538.8 158 539 175.8 539.5 193.5 540.1 211.3 540.7 229.1 541.9 246.9 543 264.7 545.1 282.5 548.2 300.3 551.4 318.1 555.7 335.9 560.1 353.7 564.8 371.5 570.5 389.2 576.1 407 582.2 424.8 588.4 442.6 594 460.4 599.7 478.2 604.2 496 608.6M69 608.6 86.8 611.8 104.6 614.3 122.4 616.1 140.2 617 158 616.1 175.8 614.5 193.5 611.1 211.3 607.2 229.1 602.3 246.9 596.7 264.7 590.4 282.5 583.2 300.3 575.9 318.1 568.1 335.9 560.2 353.7 552.5 371.5 545.5 389.2 538.4 407 532.2 424.8 526.1 442.6 521 460.4 516.9 478.2 513.7 496 511.5M69 511.5 86.8 510.1 104.6 510.2 122.4 511.4 140.2 513.6 158 517 175.8 521.6 193.5 527.6 211.3 534.6 229.1 542.6 246.9 551.3 264.7 560.7 282.5 570.8 300.3 581.5 318.1 591.5 335.9 601.4 353.7 610.7 371.5 618.5 389.2 625.3 407 630.1 424.8 632.9 442.6 633.5 460.4 631.3 478.2 627.5 496 620.8M69 620.8 86.8 611.5 104.6 600.9 122.4 588.2 140.2 574.4 158 559.9 175.8 545.2 193.5 531.3 211.3 518.4 229.1 507.2 246.9 497.9 264.7 491.1 282.5 487 300.3 486.1 318.1 487.3 335.9 491.8 353.7 498.7 371.5 507.6 389.2 518.3 407 530 424.8 542.3 442.6 554.2 460.4 566 478.2 576.1 496 585.4M69 585.4 86.8 592.7 104.6 598.5 122.4 602.5 140.2 604.7 158 605.8 175.8 606.2 193.5 605.6 211.3 605.2 229.1 604.9 246.9 605.7 264.7 607.1 282.5 609 300.3 612.3 318.1 616.5 335.9 621.1 353.7 626.3 371.5 631.3 389.2 634.9 407 637.8 424.8 639 442.6 638.1 460.4 634.8 478.2 628.9 496 620.7M69 620.7 86.8 609.7 104.6 596.7 122.4 582.3 140.2 566.9 158 550.6 175.8 535.4 193.5 520.8 211.3 507.7 229.1 497.5 246.9 490.2 264.7 486.6 282.5 486.5 300.3 490.4 318.1 497.6 335.9 507.4 353.7 519.5 371.5 533.8 389.2 549.1 407 565 424.8 580.3 442.6 594.2 460.4 605.6 478.2 614.6 496 620.6M69 620.6 86.8 622.9 104.6 622.1 122.4 618.4 140.2 611.9 158 602.7 175.8 591.1 193.5 578.1 211.3 564.4 229.1 550.3 246.9 536.3 264.7 522.8 282.5 510.7 300.3 500.2 318.1 491.1 335.9 483.7 353.7 478.7 371.5 475.4 389.2 474.2 407 474.6 424.8 476.7 442.6 480.5 460.4 485.7 478.2 491.9 496 498.9M69 498.9 86.8 506.8 104.6 515.3 122.4 524.3 140.2 532.8 158 541.5 175.8 549.9 193.5 558 211.3 565.2 229.1 571.4 246.9 576.7 264.7 581 282.5 584.2 300.3 586.2 318.1 587.2 335.9 587.2 353.7 586.5 371.5 585.4 389.2 584 407 582.2 424.8 581 442.6 580.6 460.4 580.7 478.2 582.1 496 584.5M69 584.5 86.8 588.2 104.6 592.6 122.4 597.9 140.2 603.7 158 609.2 175.8 614.9 193.5 620.1 211.3 623.9 229.1 626.2 246.9 626.5 264.7 624.9 282.5 620.8 300.3 614.4 318.1 606.5 335.9 596.6 353.7 585.3 371.5 573.7 389.2 561.3 407 549.1 424.8 538.1 442.6 528.2 460.4 520.4 478.2 514.4 496 511M69 511 86.8 509.8 104.6 511.1 122.4 515.1 140.2 521.3 158 528.9 175.8 538.5 193.5 548.9 211.3 559 229.1 569.5 246.9 579.4 264.7 588.4 282.5 596.3 300.3 602.9 318.1 607.9 335.9 610.7 353.7 611.7 371.5 610.9 389.2 608.6 407 604.8 424.8 599.9 442.6 593.9 460.4 587.1 478.2 580 496 572.3M69 572.3 86.8 564.8 104.6 556.9 122.4 549.1 140.2 541.8 158 535 175.8 528.2 193.5 522.1 211.3 516.5 229.1 511.7 246.9 507.3 264.7 503.1 282.5 499.9 300.3 497.3 318.1 495.3 335.9 494.4 353.7 494 371.5 494.5 389.2 496.2 407 498.8 424.8 502.2 442.6 506.4 460.4 511.1 478.2 517 496 523.4M69 523.4 86.8 530.2 104.6 537.8 122.4 545.7 140.2 553.6 158 561.3 175.8 568.1 193.5 573.8 211.3 578.4 229.1 581.9 246.9 584.6 264.7 585.3 282.5 584.8 300.3 582.7 318.1 579.1 335.9 574.2 353.7 568.6 371.5 562.7 389.2 556.8 407 551.9 424.8 548.1 442.6 545.2 460.4 543.7 478.2 544.5 496 547M69 547 86.8 551.4 104.6 557.7 122.4 565.7 140.2 574.5 158 584.2 175.8 594 193.5 602.8 211.3 610.4 229.1 616.6 246.9 620.9 264.7 622.6 282.5 621.5 300.3 618 318.1 612.3 335.9 604 353.7 594.5 371.5 583.7 389.2 572.8 407 562.1 424.8 552.7 442.6 544.7 460.4 538.7 478.2 536 496 535.8M69 535.8 86.8 538.6 104.6 544.1 122.4 551.8 140.2 561.6 158 572.6 175.8 584 193.5 595.1 211.3 605.1 229.1 613.5 246.9 619.4 264.7 621.9 282.5 621.7 300.3 617.9 318.1 610.9 335.9 601.4 353.7 588.9 371.5 574.6 389.2 559.5 407 544.1 424.8 529.3 442.6 515.5 460.4 503.3 478.2 494 496 486.8M69 486.8 86.8 483.5 104.6 482.6 122.4 484.6 140.2 489.6 158 496.5 175.8 504.7 193.5 514.4 211.3 524.4 229.1 534.4 246.9 544 264.7 552.6 282.5 560.1 300.3 565.7 318.1 569.9 335.9 573 353.7 574.1 371.5 574.5 389.2 574 407 572.9 424.8 571.5 442.6 570.5 460.4 570.2 478.2 570.6 496 571.5M69 571.5 86.8 574 104.6 577 122.4 580.9 140.2 585.4 158 590.2 175.8 595.6 193.5 600.9 211.3 606.2 229.1 611 246.9 615.2 264.7 618.4 282.5 620.9 300.3 622.3 318.1 622.9 335.9 622.2 353.7 620.8 371.5 618.7 389.2 615.4 407 611.5 424.8 607.1 442.6 601.9 460.4 596.2 478.2 590.4 496 585M69 585 86.8 578.6 104.6 573.3 122.4 568.1 140.2 563.5 158 559.3 175.8 556.1 193.5 553.8 211.3 552.8 229.1 553 246.9 554.4 264.7 556.9 282.5 560.2 300.3 565.2 318.1 570.1 335.9 576.1 353.7 582.2 371.5 588.9 389.2 595.3 407 600.8 424.8 605.2 442.6 608.5 460.4 610.3 478.2 610.3 496 608.6M69 608.6 86.8 605.3 104.6 600.5 122.4 594.1 140.2 586.8 158 578.6 175.8 569.9 193.5 561.6 211.3 553.6 229.1 547 246.9 541.5 264.7 537.6 282.5 535.5 300.3 534.9 318.1 536.5 335.9 539.1 353.7 543.3 371.5 548.1 389.2 554.3 407 560.8 424.8 567.3 442.6 572.9 460.4 577.6 478.2 581.5 496 583.7M69 583.7 86.8 584.6 104.6 584.2 122.4 582.2 140.2 579 158 574.3 175.8 568.4 193.5 561.6 211.3 554.2 229.1 546.4 246.9 539 264.7 531.3 282.5 524.3 300.3 517.7 318.1 511.9 335.9 506.9 353.7 502.4 371.5 499.8 389.2 498 407 497.5 424.8 497.9 442.6 499.9 460.4 502.7 478.2 507 496 512.2M69 512.2 86.8 518.2 104.6 524.6 122.4 531.9 140.2 539.9 158 547.4 175.8 554.8 193.5 561.7 211.3 567.8 229.1 573.5 246.9 578 264.7 581.8 282.5 584.1 300.3 585.3 318.1 585.5 335.9 584.9 353.7 583 371.5 580.8 389.2 578.4 407 575.9 424.8 574.2 442.6 572.5 460.4 571.4 478.2 571.2 496 572.2M69 572.2 86.8 574.2 104.6 577.3 122.4 581.1 140.2 586.3 158 592 175.8 597.9 193.5 603.7 211.3 609.5 229.1 613.8 246.9 617.4 264.7 619.9 282.5 621.4 300.3 621.3 318.1 620.1 335.9 617.1 353.7 612.3 371.5 606.3 389.2 599.3 407 591.6 424.8 582.7 442.6 574 460.4 565.5 478.2 556.7 496 547.6M69 547.6 86.8 539 104.6 530.9 122.4 523.8 140.2 518.1 158 512.6 175.8 508.2 193.5 504.4 211.3 501.6 229.1 499.5 246.9 498.9 264.7 498.7 282.5 499.3 300.3 500.8 318.1 502.2 335.9 504.1 353.7 505.7 371.5 508.5 389.2 510.6 407 513.2 424.8 515.8 442.6 518.5 460.4 520.1 478.2 521.7 496 523.2M69 523.2 86.8 524.1 104.6 524.9 122.4 525.1 140.2 525.2 158 524.3 175.8 523.1 193.5 520.7 211.3 518 229.1 514.3 246.9 510.2 264.7 505.4 282.5 499.9 300.3 494.6 318.1 489.2 335.9 483.8 353.7 479 371.5 475.3 389.2 472.6 407 471.9 424.8 473 442.6 476.6 460.4 481.9 478.2 489.6 496 499.3M69 499.3 86.8 510.9 104.6 524.4 122.4 539 140.2 554.1 158 569.6 175.8 584.1 193.5 597.1 211.3 607.7 229.1 616 246.9 621.3 264.7 623.3 282.5 622 300.3 616.9 318.1 608.4 335.9 597.6 353.7 584.2 371.5 568.8 389.2 553.3 407 537.7 424.8 522.8 442.6 509.5 460.4 498.7 478.2 490.7 496 486.4M69 486.4 86.8 485.6 104.6 488.8 122.4 494.9 140.2 504.3 158 516.4 175.8 530.7 193.5 546 211.3 562.5 229.1 579.1 246.9 594.5 264.7 608.2 282.5 620.4 300.3 630.5 318.1 637.7 335.9 642.4 353.7 644.5 371.5 643.9 389.2 640.9 407 636.6 424.8 630.2 442.6 622.4 460.4 614.3 478.2 605.9 496 596.9M69 596.9 86.8 587.7 104.6 578.7 122.4 570.2 140.2 562.4 158 555.1 175.8 548.1 193.5 541.1 211.3 534.8 229.1 528.6 246.9 522.9 264.7 517.1 282.5 511.8 300.3 506.8 318.1 502.8 335.9 499.1 353.7 496.4 371.5 494.4 389.2 493.9 407 494.8 424.8 497.4 442.6 501.5 460.4 507.1 478.2 515.1 496 524.3M69 524.3 86.8 534.8 104.6 545.8 122.4 557.7 140.2 569.6 158 581.3 175.8 592.4 193.5 602.6 211.3 610.6 229.1 616.9 246.9 621.1 264.7 622.1 282.5 620.9 300.3 617.2 318.1 611.7 335.9 604 353.7 594.6 371.5 584.5 389.2 573.4 407 561.8 424.8 551.3 442.6 542 460.4 533.4 478.2 527.4 496 523.1M69 523.1 86.8 521.1 104.6 521.5 122.4 523.8 140.2 528.1 158 534.3 175.8 542.2 193.5 551.2 211.3 560.5 229.1 569.7 246.9 579.4 264.7 588.3 282.5 596.7 300.3 603.5 318.1 609.1 335.9 613.5 353.7 616.3 371.5 617.7 389.2 617.5 407 616.2 424.8 613.8 442.6 610.6 460.4 606.2 478.2 601.3 496 595.8M69 595.8 86.8 590.6 104.6 585.2 122.4 580.2 140.2 575.2 158 570.7 175.8 566.9 193.5 563.4 211.3 560.9 229.1 559 246.9 558.7 264.7 558.8 282.5 559.9 300.3 561.7 318.1 564.4 335.9 567.4 353.7 571 371.5 574.5 389.2 578 407 581.2 424.8 584 442.6 586 460.4 586.3 478.2 586 496 584.1M69 584.1 86.8 581 104.6 576.7 122.4 570.5 140.2 563.9 158 556.1 175.8 547.6 193.5 539.1 211.3 529.8 229.1 520.8 246.9 512.6 264.7 504.7 282.5 498.1 300.3 492.6 318.1 488 335.9 485.6 353.7 484.1 371.5 484 389.2 485.3 407 487.5 424.8 491.2 442.6 495.5 460.4 500.1 478.2 505.7 496 511.6M69 511.6 86.8 517.6 104.6 523.7 122.4 529.8 140.2 535.6 158 541.4 175.8 546.4 193.5 551.5 211.3 556.1 229.1 560.6 246.9 564.8 264.7 568.1 282.5 571.3 300.3 574.4 318.1 577.2 335.9 579 353.7 580.7 371.5 581.9 389.2 583 407 583.7 424.8 584.2 442.6 584.3 460.4 584.4 478.2 585 496 584.9M69 584.9 86.8 585 104.6 584.7 122.4 585.1 140.2 585.2 158 586 175.8 587.2 193.5 588.4 211.3 590 229.1 591.8 246.9 593.8 264.7 595.5 282.5 597.4 300.3 599 318.1 600.8 335.9 602.1 353.7 603.3 371.5 603.9 389.2 603.5 407 602.5 424.8 600.3 442.6 597.6 460.4 593.7 478.2 589 496 583.6M69 583.6 86.8 577.6 104.6 570.1 122.4 562.1 140.2 553.7 158 545 175.8 536.3 193.5 527.9 211.3 520.5 229.1 513.2 246.9 507.6 264.7 503 282.5 499.3 300.3 496.7 318.1 496.1 335.9 496.7 353.7 498.9 371.5 502.5 389.2 507 407 512.6 424.8 518.8 442.6 526.3 460.4 533.4 478.2 541.1 496 548.3M69 548.3 86.8 555.7 104.6 562.9 122.4 569.7 140.2 575.5 158 580.6 175.8 585.5 193.5 589.1 211.3 592.1 229.1 594.2 246.9 595.6 264.7 596 282.5 596.3 300.3 595.3 318.1 594 335.9 592.1 353.7 589.8 371.5 586.7 389.2 582.9 407 579.5 424.8 575.7 442.6 571.5 460.4 567.8 478.2 563.8 496 560.2M69 560.2 86.8 557 104.6 553.8 122.4 551.3 140.2 549.1 158 548 175.8 547.8 193.5 548.3 211.3 549.1 229.1 551 246.9 553.2 264.7 556.4 282.5 560.2 300.3 564.6 318.1 569.5 335.9 574.4 353.7 580 371.5 586 389.2 591.5 407 597.2 424.8 602.6 442.6 607.8 460.4 612.8 478.2 617.2 496 621.4M69 621.4 86.8 625.1 104.6 628.2 122.4 631 140.2 632.9 158 633.7 175.8 634.1 193.5 633.5 211.3 632.6 229.1 630.7 246.9 627.8 264.7 624.7 282.5 620.7 300.3 615.8 318.1 611 335.9 605.6 353.7 600.3 371.5 595 389.2 589.8 407 585.1 424.8 581 442.6 577.4 460.4 574.8 478.2 572.7 496 571.7M69 571.7 86.8 572.2 104.6 573 122.4 574.9 140.2 577.2 158 580.5 175.8 584.2 193.5 588.2 211.3 592.5 229.1 596.9 246.9 600.8 264.7 605.2 282.5 608.5 300.3 611.5 318.1 614.1 335.9 616.1 353.7 618.4 371.5 619.4 389.2 620.1 407 620.4 424.8 620.5 442.6 620.5 460.4 620.6 478.2 620.3 496 620.4M69 620.4 86.8 620.3 104.6 620.5 122.4 620.3 140.2 619.7 158 619.6 175.8 618.9 193.5 618.2 211.3 617 229.1 615.7 246.9 614.2 264.7 611.7 282.5 608.9 300.3 605.4 318.1 601.5 335.9 598 353.7 594.1 371.5 590.2 389.2 586.9 407 583.4 424.8 580.3 442.6 577.4 460.4 574.9 478.2 573.3 496 572.5M69 572.5 86.8 572.3 104.6 572.7 122.4 573.4 140.2 574.9 158 576.6 175.8 578 193.5 579.6 211.3 580.8 229.1 582.5 246.9 583.7 264.7 584.7 282.5 584.8 300.3 584.7 318.1 584 335.9 582.4 353.7 580.4 371.5 578.2 389.2 576 407 573.6 424.8 571.2 442.6 568.2 460.4 565.4 478.2 562.9 496 560.7M69 560.7 86.8 558.3 104.6 556.7 122.4 555.3 140.2 553.9 158 552.6 175.8 551.7 193.5 550.8 211.3 550.1 229.1 549.6 246.9 549.1 264.7 548.5 282.5 548 300.3 547.4 318.1 546.1 335.9 545.1 353.7 544.1 371.5 542.9 389.2 541.1 407 539.1 424.8 536.7 442.6 534.3 460.4 531 478.2 527.6 496 523.7M69 523.7 86.8 520.1 104.6 516.1 122.4 512.1 140.2 508 158 504.1 175.8 500.8 193.5 498.3 211.3 496.7 229.1 495.5 246.9 496.1 264.7 496.8 282.5 499.5 300.3 502.4 318.1 507 335.9 512.3 353.7 518.3 371.5 524.9 389.2 531.6 407 538.1 424.8 544 442.6 549.6 460.4 554 478.2 557.9 496 560.2M69 560.2 86.8 561.8 104.6 561.9 122.4 561.5 140.2 560.4 158 558.7 175.8 556.8 193.5 555 211.3 554 229.1 553.8 246.9 554.6 264.7 556.5 282.5 559.6 300.3 563.7 318.1 569.3 335.9 575.3 353.7 581.7 371.5 588.6 389.2 595.5 407 601.8 424.8 607 442.6 610.2 460.4 611.7 478.2 611.5 496 609.2M69 609.2 86.8 605 104.6 598.1 122.4 589.7 140.2 579.4 158 567.7 175.8 555.1 193.5 542 211.3 529.1 229.1 516.9 246.9 505.4 264.7 495.5 282.5 487.2 300.3 479.9 318.1 474.8 335.9 471.2 353.7 469.6 371.5 469.6 389.2 470.6 407 472.9 424.8 475.4 442.6 478.3 460.4 481.9 478.2 484.7 496 487M69 487 86.8 489.4 104.6 490.9 122.4 491.8 140.2 492.3 158 491.9 175.8 490.9 193.5 489.9 211.3 489 229.1 488.2 246.9 487.1 264.7 486.8 282.5 486.8 300.3 487.3 318.1 488.1 335.9 489.3 353.7 491 371.5 493 389.2 495.8 407 498 424.8 501 442.6 503.8 460.4 506.5 478.2 509.1 496 511.6M69 511.6 86.8 514 104.6 516.3 122.4 518.8 140.2 521.3 158 524.1 175.8 527.2 193.5 531.2 211.3 535.4 229.1 540.2 246.9 546.1 264.7 552.5 282.5 559.8 300.3 567.6 318.1 575.8 335.9 584.1 353.7 592.6 371.5 600.6 389.2 607.9 407 614.2 424.8 618.9 442.6 622.3 460.4 623.7 478.2 623.4 496 620.8M69 620.8 86.8 616.3 104.6 610.1 122.4 602.5 140.2 593.3 158 583.5 175.8 573.1 193.5 562.5 211.3 552.7 229.1 543.5 246.9 535.5 264.7 528.8 282.5 524 300.3 520.7 318.1 519.5 335.9 520 353.7 521.9 371.5 524.8 389.2 528.6 407 533.1 424.8 537.5 442.6 541.4 460.4 544.8 478.2 547.4 496 548.8M69 548.8 86.8 549.1 104.6 548.4 122.4 546.1 140.2 543.4 158 540.7 175.8 537.4 193.5 534.6 211.3 532.4 229.1 531.2 246.9 531.3 264.7 532.4 282.5 535.4 300.3 540.3 318.1 546.5 335.9 554.4 353.7 562.9 371.5 571.4 389.2 580.2 407 588.2 424.8 595.4 442.6 601.3 460.4 605.8 478.2 608.5 496 608.6M69 608.6 86.8 606.5 104.6 602.2 122.4 595.7 140.2 587.5 158 578.2 175.8 568.2 193.5 557.5 211.3 546.7 229.1 536.4 246.9 526.6 264.7 518.3 282.5 511.6 300.3 507 318.1 503.6 335.9 502.3 353.7 503 371.5 504.8 389.2 507.5 407 511.6 424.8 516.5 442.6 521.6 460.4 526.9 478.2 531.7 496 535.9M69 535.9 86.8 539.3 104.6 542.6 122.4 545 140.2 546.4 158 547.6 175.8 548.8 193.5 549.9 211.3 550.8 229.1 551.9 246.9 553.7 264.7 556.3 282.5 560 300.3 563.7 318.1 568.1 335.9 572.5 353.7 577.3 371.5 581.7 389.2 585.5 407 588.2 424.8 590.6 442.6 591.8 460.4 590.9 478.2 588.3 496 583.6M69 583.6 86.8 577.7 104.6 570.7 122.4 562.6 140.2 554.1 158 545.5 175.8 537.1 193.5 529 211.3 521.9 229.1 516.2 246.9 512.5 264.7 510.8 282.5 511.3 300.3 513.6 318.1 517.6 335.9 523.6 353.7 530.3 371.5 538.1 389.2 546.5 407 555.5 424.8 563.5 442.6 570.6 460.4 577 478.2 581.3 496 584.2M69 584.2 86.8 585.5 104.6 584.9 122.4 582.2 140.2 578.4 158 572.6 175.8 565.2 193.5 556.7 211.3 547.8 229.1 538.6 246.9 528.8 264.7 520.2 282.5 511.5 300.3 503.4 318.1 496.5 335.9 490.9 353.7 486.4 371.5 483.8 389.2 482.8 407 483.3 424.8 485.7 442.6 490 460.4 495.5 478.2 502.6 496 511.1M69 511.1 86.8 521.1 104.6 531.5 122.4 542.4 140.2 553.4 158 564.1 175.8 574.1 193.5 582.8 211.3 590.1 229.1 595.1 246.9 598.4 264.7 598.7 282.5 596.5 300.3 591.8 318.1 585 335.9 576.5 353.7 566 371.5 554.2 389.2 542.1 407 530 424.8 518.1 442.6 507.4 460.4 498.2 478.2 491.4 496 487.4M69 487.4 86.8 485.3 104.6 485.5 122.4 488 140.2 492.5 158 498.9 175.8 506.1 193.5 514 211.3 522.5 229.1 530.8 246.9 538.1 264.7 543.9 282.5 547.6 300.3 549.9 318.1 550.4 335.9 549.2 353.7 546.7 371.5 543 389.2 538.4 407 533 424.8 527.3 442.6 521.7 460.4 517.4 478.2 513.6 496 511.5M69 511.5 86.8 510.6 104.6 511.1 122.4 512.3 140.2 514.7 158 518 175.8 522.7 193.5 527.4 211.3 532.4 229.1 537.2 246.9 541.3 264.7 545.1 282.5 547.9 300.3 549.9 318.1 550.9 335.9 551.8 353.7 551.6 371.5 551.1 389.2 550.1 407 549.1 424.8 547.7 442.6 547.1 460.4 546.5 478.2 546.8 496 547.6M69 547.6 86.8 549.3 104.6 551.8 122.4 554.7 140.2 558.3 158 562.7 175.8 567.1 193.5 572.2 211.3 577.5 229.1 582.5 246.9 587.8 264.7 592.4 282.5 596.8 300.3 600.5 318.1 603.8 335.9 606.4 353.7 608.4 371.5 609.1 389.2 609.4 407 608.7 424.8 607.6 442.6 605.8 460.4 603.5 478.2 600.3 496 596.7M69 596.7 86.8 592.3 104.6 587.6 122.4 582.7 140.2 576.9 158 570.9 175.8 564.8 193.5 558.4 211.3 551.6 229.1 544.6 246.9 537.1 264.7 529.9 282.5 522.6 300.3 516.1 318.1 509.9 335.9 504 353.7 499.5 371.5 496.1 389.2 493.7 407 492.8 424.8 493.2 442.6 495.1 460.4 498.7 478.2 504.2 496 510.6M69 510.6 86.8 519.1 104.6 528.4 122.4 538.7 140.2 549.1 158 559.9 175.8 570.3 193.5 579.9 211.3 588.6 229.1 596.3 246.9 602.4 264.7 606.4 282.5 609.2 300.3 608.9 318.1 606.6 335.9 602.6 353.7 597.3 371.5 589.8 389.2 581.4 407 572.1 424.8 562.2 442.6 551.9 460.4 542.1 478.2 532.5 496 523.3M69 523.3 86.8 515.6 104.6 509.4 122.4 504.3 140.2 500.8 158 498.9 175.8 498.4 193.5 499.5 211.3 502 229.1 506 246.9 510.5 264.7 516.6 282.5 523.4 300.3 530.9 318.1 538.2 335.9 546 353.7 553.6 371.5 561.5 389.2 568.8 407 575.4 424.8 581.3 442.6 586.5 460.4 590.8 478.2 593.9 496 596.4M69 596.4 86.8 597.6 104.6 597.9 122.4 596.7 140.2 594.4 158 590.1 175.8 585 193.5 579.1 211.3 571.9 229.1 564.2 246.9 555.7 264.7 546.3 282.5 536.5 300.3 526.1 318.1 516.2 335.9 507 353.7 498.4 371.5 491.5 389.2 485.3 407 481 424.8 478.6 442.6 477.7 460.4 479.4 478.2 482.9 496 488.3M69 488.3 86.8 496 104.6 505 122.4 515.1 140.2 526.4 158 538.2 175.8 550.5 193.5 562.4 211.3 574.3 229.1 585.3 246.9 594.8 264.7 603 282.5 609.4 300.3 613.7 318.1 616.5 335.9 617.7 353.7 616.9 371.5 614.7 389.2 611.2 407 605.7 424.8 600 442.6 593.3 460.4 586 478.2 578.7 496 571.7M69 571.7 86.8 565.8 104.6 560 122.4 555.1 140.2 550.8 158 547.6 175.8 545.7 193.5 545.5 211.3 545.9 229.1 547.5 246.9 550.4 264.7 554.7 282.5 559.7 300.3 565.3 318.1 571.3 335.9 578 353.7 585 371.5 591.8 389.2 598.4 407 604.3 424.8 609.6 442.6 614.1 460.4 618.2 478.2 620.4 496 621.3M69 621.3 86.8 620.8 104.6 619.7 122.4 616.8 140.2 613.4 158 609 175.8 604 193.5 598.5 211.3 593.2 229.1 587.5 246.9 581.3 264.7 576.2 282.5 572.4 300.3 569.2 318.1 567 335.9 566 353.7 565.5 371.5 566.1 389.2 567.3 407 569.3 424.8 571.5 442.6 574.2 460.4 578.1 478.2 581.8 496 585.1M69 585.1 86.8 588.3 104.6 591.4 122.4 594.1 140.2 596.8 158 599.1 175.8 601.3 193.5 603.2 211.3 604.9 229.1 606.6 246.9 607.5 264.7 608.1 282.5 608.8 300.3 609.2 318.1 608.8 335.9 608.4 353.7 607 371.5 605.2 389.2 602.8 407 599.8 424.8 595.9 442.6 591.3 460.4 585.8 478.2 579.7 496 572.9M69 572.9 86.8 565.3 104.6 557.6 122.4 549.3 140.2 541.1 158 532.8 175.8 524.6 193.5 516.4 211.3 509.1 229.1 502.4 246.9 496.7 264.7 492.1 282.5 487.8 300.3 484.9 318.1 482.9 335.9 481.6 353.7 480.9 371.5 481.1 389.2 481.7 407 482.9 424.8 484.1 442.6 485.1 460.4 485.9 478.2 486.2 496 487M69 487 86.8 487.3 104.6 487 122.4 486.8 140.2 486.4 158 485.4 175.8 484.7 193.5 483.8 211.3 483.6 229.1 483.6 246.9 484.4 264.7 486 282.5 487.6 300.3 490.2 318.1 493.4 335.9 497.3 353.7 501.7 371.5 506.9 389.2 512.8 407 519.2 424.8 525.1 442.6 531.4 460.4 537.1 478.2 542.3 496 547.5M69 547.5 86.8 552.1 104.6 556.3 122.4 559 140.2 561.3 158 563.1 175.8 564.2 193.5 564.4 211.3 564.3 229.1 563.6 246.9 562.7 264.7 561.7 282.5 560.3 300.3 558.5 318.1 556.5 335.9 554.7 353.7 552.5 371.5 550.3 389.2 547.4 407 544.3 424.8 540.9 442.6 537.2 460.4 532.8 478.2 528.6 496 523.8M69 523.8 86.8 518.8 104.6 513.7 122.4 508.8 140.2 504.2 158 500.4 175.8 497.7 193.5 496.4 211.3 496.3 229.1 497.7 246.9 500.9 264.7 505.1 282.5 511.4 300.3 519.5 318.1 529.1 335.9 539.4 353.7 550.7 371.5 561.8 389.2 572.9 407 582.8 424.8 591.6 442.6 599 460.4 604.7 478.2 608.3 496 609.6M69 609.6 86.8 608.2 104.6 604.2 122.4 598.7 140.2 591 158 581.9 175.8 571.4 193.5 560.6 211.3 549.6 229.1 538.9 246.9 528.5 264.7 519.1 282.5 511.2 300.3 504.6 318.1 499.8 335.9 496.2 353.7 494.3 371.5 494 389.2 494.6 407 496.5 424.8 498.8 442.6 501.6 460.4 504.4 478.2 507.9 496 510.9M69 510.9 86.8 513.6 104.6 516 122.4 518.2 140.2 519.4 158 520 175.8 520.3 193.5 519.6 211.3 518.6 229.1 517.5 246.9 516.1 264.7 514.1 282.5 511.9 300.3 509.8 318.1 507.6 335.9 505.3 353.7 504.2 371.5 503.2 389.2 503 407 503.9 424.8 505.8 442.6 508.6 460.4 512.5 478.2 517.7 496 523.9M69 523.9 86.8 531.3 104.6 539.6 122.4 548.9 140.2 558.3 158 567.6 175.8 576.8 193.5 585.5 211.3 593.1 229.1 599.6 246.9 604.6 264.7 607.8 282.5 609.1 300.3 608.7 318.1 606.2 335.9 601.6 353.7 595.9 371.5 588.9 389.2 580.9 407 572.6 424.8 564.2 442.6 556 460.4 548.4 478.2 541.6 496 536.2M69 536.2 86.8 532.2 104.6 529.6 122.4 528.7 140.2 529 158 530.7 175.8 533.3 193.5 536.7 211.3 540.9 229.1 545.6 246.9 550.4 264.7 555.6 282.5 560.3 300.3 564.5 318.1 568.4 335.9 572 353.7 574.8 371.5 577.6 389.2 580.7 407 583.3 424.8 585.7 442.6 587.8 460.4 590.4 478.2 592.6 496 595.9M69 595.9 86.8 599 104.6 602.4 122.4 605.6 140.2 608.9 158 611.8 175.8 613.5 193.5 614.7 211.3 615.5 229.1 615.6 246.9 614.4 264.7 612.3 282.5 608.7 300.3 604.5 318.1 599.1 335.9 592.8 353.7 586 371.5 579.1 389.2 572.1 407 565 424.8 558.1 442.6 551.3 460.4 545.3 478.2 539.8 496 535.1M69 535.1 86.8 531.3 104.6 528.4 122.4 526.9 140.2 526 158 526 175.8 527.1 193.5 528.8 211.3 531.7 229.1 535.2 246.9 539 264.7 543.5 282.5 548.3 300.3 553.2 318.1 558.3 335.9 563.3 353.7 568.2 371.5 572.2 389.2 575.2 407 577.7 424.8 578.8 442.6 579 460.4 578.3 478.2 576 496 572.5M69 572.5 86.8 568 104.6 562.2 122.4 555.6 140.2 548 158 540.3 175.8 532.8 193.5 525.2 211.3 518 229.1 511.4 246.9 505.8 264.7 501.8 282.5 499.2 300.3 497.5 318.1 497.1 335.9 497.7 353.7 499.7 371.5 502.3 389.2 505.8 407 509.6 424.8 513.4 442.6 517 460.4 519.9 478.2 521.9 496 523.2M69 523.2 86.8 523.7 104.6 523.1 122.4 521.9 140.2 519.7 158 516.8 175.8 513.3 193.5 510 211.3 506.7 229.1 504.1 246.9 501.7 264.7 500.2 282.5 499.5 300.3 499.8 318.1 500.9 335.9 502.9 353.7 505.5 371.5 508.9 389.2 512.2 407 515.1 424.8 518.3 442.6 520.5 460.4 522.6 478.2 523.8 496 523.9M69 523.9 86.8 523.1 104.6 521.8 122.4 519.3 140.2 516.6 158 513.6 175.8 510.9 193.5 508.7 211.3 506.8 229.1 506.1 246.9 506.4 264.7 508 282.5 510.9 300.3 515.2 318.1 521.6 335.9 528.7 353.7 537.3 371.5 546.8 389.2 556.5 407 566.7 424.8 576.6 442.6 586.1 460.4 594.6 478.2 602 496 608.5M69 608.5 86.8 613.5 104.6 616.8 122.4 619.2 140.2 620.2 158 620.5 175.8 620 193.5 618.9 211.3 618.1 229.1 617.7 246.9 617.8 264.7 619 282.5 620.2 300.3 622.5 318.1 625.3 335.9 628.6 353.7 632.2 371.5 635 389.2 637.7 407 639.6 424.8 639.8 442.6 637.9 460.4 634.1 478.2 627.9 496 620.4M69 620.4 86.8 610.5 104.6 599.4 122.4 587 140.2 573.6 158 560.1 175.8 547.3 193.5 535.3 211.3 525.3 229.1 517.3 246.9 512.2 264.7 510.1 282.5 510.5 300.3 514.7 318.1 521.2 335.9 530.3 353.7 541.7 371.5 554.2 389.2 566.8 407 579.6 424.8 591.3 442.6 602.1 460.4 610.5 478.2 616.6 496 620.1M69 620.1 86.8 619.9 104.6 616.9 122.4 611.2 140.2 602.5 158 591.6 175.8 579.4 193.5 565.9 211.3 551.9 229.1 537.7 246.9 524 264.7 511 282.5 499.7 300.3 490.3 318.1 482.9 335.9 477.5 353.7 474.4 371.5 473.9 389.2 475.5 407 479.5 424.8 485.1 442.6 493 460.4 502.4 478.2 512.9 496 524.2M69 524.2 86.8 536.4 104.6 548.7 122.4 561 140.2 573.1 158 584 175.8 593.8 193.5 601.5 211.3 607.8 229.1 611.6 246.9 613.1 264.7 612 282.5 608.2 300.3 602 318.1 594.1 335.9 583.6 353.7 572.1 371.5 559.8 389.2 546.8 407 534.8 424.8 523.3 442.6 513.8 460.4 506.3 478.2 501.5 496 499.6M69 499.6 86.8 500.2 104.6 503.5 122.4 509.8 140.2 518.1 158 528 175.8 539.3 193.5 550.2 211.3 560.8 229.1 570.1 246.9 577.2 264.7 582.1 282.5 584.4 300.3 584.3 318.1 581.6 335.9 575.9 353.7 568.6 371.5 559.6 389.2 549.6 407 539.7 424.8 530.6 442.6 522.4 460.4 516.5 478.2 513.2 496 512.2M69 512.2 86.8 513.8 104.6 517.4 122.4 524.2 140.2 532.6 158 542.3 175.8 553.1 193.5 563.9 211.3 573.9 229.1 582.8 246.9 589.9 264.7 594.8 282.5 597 300.3 597.2 318.1 594.5 335.9 589.4 353.7 582 371.5 573.5 389.2 563.6 407 553.3 424.8 543.1 442.6 533.4 460.4 524.7 478.2 517 496 511.2M69 511.2 86.8 507.1 104.6 505.3 122.4 505.6 140.2 507.7 158 512.1 175.8 518 193.5 524.8 211.3 533 229.1 541.8 246.9 551.2 264.7 561.3 282.5 571.2 300.3 581 318.1 590.3 335.9 598.9 353.7 606.7 371.5 613 389.2 618.1 407 622.5 424.8 624.8 442.6 626.4 460.4 626.2 478.2 624.5 496 622.1M69 622.1 86.8 618 104.6 612.9 122.4 606.9 140.2 600.6 158 593.8 175.8 587.2 193.5 580.8 211.3 575 229.1 569.5 246.9 565.3 264.7 562.1 282.5 560 300.3 559.4 318.1 560.1 335.9 562.1 353.7 565.4 371.5 569.7 389.2 574.5 407 580.1 424.8 586.4 442.6 592.8 460.4 599 478.2 604.5 496 609.5M69 609.5 86.8 613.7 104.6 616.9 122.4 618.9 140.2 619.8 158 619.3 175.8 617.5 193.5 614.5 211.3 610.5 229.1 605.1 246.9 598.8 264.7 592 282.5 584.3 300.3 576.2 318.1 568 335.9 559.5 353.7 550.9 371.5 543.1 389.2 535.9 407 529 424.8 522.7 442.6 518 460.4 514.5 478.2 512.2 496 511.3M69 511.3 86.8 512.1 104.6 513.8 122.4 517 140.2 521.2 158 526.2 175.8 531.9 193.5 538.9 211.3 545.9 229.1 553.1 246.9 560.1 264.7 567 282.5 573.2 300.3 578.8 318.1 583.4 335.9 587.6 353.7 590.7 371.5 592.9 389.2 594.3 407 594.5 424.8 594.1 442.6 592.9 460.4 590.7 478.2 588 496 584.7M69 584.7 86.8 581 104.6 577.3 122.4 572.8 140.2 568.5 158 564.1 175.8 559.6 193.5 555.1 211.3 550.5 229.1 546.1 246.9 542.1 264.7 538.1 282.5 534.5 300.3 531.2 318.1 528.5 335.9 526.3 353.7 524.7 371.5 523.4 389.2 522.8 407 523.2 424.8 524.5 442.6 526.2 460.4 528.8 478.2 532.3 496 536.3M69 536.3 86.8 540.6 104.6 545.4 122.4 550.3 140.2 555.4 158 560.7 175.8 565.5 193.5 570.3 211.3 574.3 229.1 578.1 246.9 581.1 264.7 583 282.5 584.1 300.3 584.5 318.1 584.3 335.9 583.3 353.7 581.6 371.5 579.4 389.2 576.9 407 573.9 424.8 570.9 442.6 567.4 460.4 564.4 478.2 562.2 496 560.5M69 560.5 86.8 559.1 104.6 557.9 122.4 557.7 140.2 557.9 158 558.3 175.8 558.9 193.5 559.5 211.3 560.2 229.1 561 246.9 561.2 264.7 560.7 282.5 559.9 300.3 558.3 318.1 556.3 335.9 553.6 353.7 550.3 371.5 546.7 389.2 543.2 407 539.3 424.8 535.3 442.6 531.6 460.4 528.1 478.2 525.2 496 522.9M69 522.9 86.8 521.1 104.6 520 122.4 519.2 140.2 518.7 158 518.7 175.8 518.6 193.5 518.3 211.3 518.2 229.1 517.4 246.9 516.8 264.7 515.2 282.5 512.9 300.3 510.5 318.1 507.2 335.9 503.8 353.7 500.1 371.5 496.7 389.2 493.1 407 490.6 424.8 488.3 442.6 486.9 460.4 485.8 478.2 486.2 496 487.5M69 487.5 86.8 489.3 104.6 492.3 122.4 496.3 140.2 501.4 158 506.3 175.8 511.7 193.5 516.6 211.3 521.7 229.1 526.5 246.9 530.3 264.7 533.1 282.5 535.3 300.3 536.7 318.1 537.1 335.9 536.2 353.7 534 371.5 531.2 389.2 528.2 407 524.9 424.8 521.3 442.6 517.7 460.4 515.1 478.2 513.2 496 511.5M69 511.5 86.8 510.5 104.6 510.2 122.4 510.5 140.2 511.8 158 513 175.8 514.3 193.5 515.4 211.3 516.3 229.1 516.5 246.9 515.7 264.7 514 282.5 511.1 300.3 507.6 318.1 503.4 335.9 498.7 353.7 493.4 371.5 488.9 389.2 484.4 407 480.9 424.8 478.4 442.6 477.5 460.4 479 478.2 482 496 487.3M69 487.3 86.8 494 104.6 502.5 122.4 512.7 140.2 523.9 158 535 175.8 546.7 193.5 557.6 211.3 567.2 229.1 575.3 246.9 580.5 264.7 583.2 282.5 583.7 300.3 581.7 318.1 577.2 335.9 569.8 353.7 560.7 371.5 550.5 389.2 538.7 407 527.5 424.8 516.3 442.6 506.1 460.4 498 478.2 491.8 496 487.9M69 487.9 86.8 486.4 104.6 486.9 122.4 490.3 140.2 495.7 158 502.1 175.8 509.8 193.5 518 211.3 526.1 229.1 533.6 246.9 539.8 264.7 544.7 282.5 547.9 300.3 549.8 318.1 549.8 335.9 547.9 353.7 544.2 371.5 540.1 389.2 535.8 407 531.2 424.8 527.4 442.6 524.5 460.4 522.7 478.2 522.5 496 523.9M69 523.9 86.8 526.9 104.6 531.8 122.4 538.3 140.2 546.9 158 556.2 175.8 565.4 193.5 574.9 211.3 583.9 229.1 592 246.9 599.2 264.7 604.8 282.5 608.8 300.3 610.4 318.1 610.4 335.9 608.5 353.7 604.4 371.5 598.4 389.2 591.6 407 583.2 424.8 574.1 442.6 564.8 460.4 555.1 478.2 545.4 496 536.1M69 536.1 86.8 527.6 104.6 519.4 122.4 512.3 140.2 506.4 158 501.4 175.8 497.5 193.5 495 211.3 493.7 229.1 493.2 246.9 494.1 264.7 496.4 282.5 499.5 300.3 503.5 318.1 508.5 335.9 514.3 353.7 520.1 371.5 527 389.2 534 407 541.2 424.8 548.1 442.6 554.9 460.4 561.2 478.2 567 496 571.6M69 571.6 86.8 575.7 104.6 579.1 122.4 581.5 140.2 583.3 158 584.1 175.8 584.2 193.5 583.4 211.3 581.7 229.1 579.7 246.9 577.1 264.7 574.7 282.5 572.2 300.3 569.7 318.1 566.6 335.9 563.5 353.7 560.5 371.5 557.4 389.2 554.2 407 551 424.8 548.2 442.6 545.3 460.4 542.3 478.2 538.5 496 535.2M69 535.2 86.8 531.6 104.6 528.5 122.4 525.5 140.2 522.5 158 520 175.8 518.2 193.5 517.6 211.3 517.1 229.1 517.3 246.9 518.8 264.7 521.5 282.5 524.8 300.3 529.3 318.1 534.4 335.9 540.7 353.7 547.4 371.5 555.1 389.2 563.2 407 571 424.8 579 442.6 587.3 460.4 595.2 478.2 602.3 496 608.7M69 608.7 86.8 614.2 104.6 619.3 122.4 623.4 140.2 626.6 158 628.3 175.8 629.4 193.5 629.3 211.3 629 229.1 627.6 246.9 625.6 264.7 623.2 282.5 620.6 300.3 617.9 318.1 614.1 335.9 610.5 353.7 606.9 371.5 603.3 389.2 599.2 407 595.4 424.8 591.1 442.6 586.5 460.4 581.9 478.2 577.4 496 572.6M69 572.6 86.8 567.9 104.6 564 122.4 559.9 140.2 556.2 158 553.1 175.8 551 193.5 549.3 211.3 549.1 229.1 550.2 246.9 552.5 264.7 556 282.5 560.6 300.3 565.6 318.1 571.6 335.9 578.2 353.7 585.2 371.5 591.9 389.2 598 407 603.5 424.8 607.6 442.6 610.2 460.4 611.4 478.2 610.3 496 607.8M69 607.8 86.8 603.5 104.6 597.2 122.4 589.6 140.2 580.4 158 570.6 175.8 560.2 193.5 549.8 211.3 539.9 229.1 530.8 246.9 522.6 264.7 516 282.5 511 300.3 507.7 318.1 506.5 335.9 506.8 353.7 508.7 371.5 512.1 389.2 516.8 407 521.9 424.8 527.7 442.6 533 460.4 537.9 478.2 543.2 496 547.4M69 547.4 86.8 551 104.6 553.3 122.4 555 140.2 555.8 158 555.7 175.8 555.1 193.5 554.3 211.3 552.7 229.1 551.5 246.9 550.6 264.7 549.4 282.5 548.8 300.3 548.2 318.1 548.6 335.9 548.8 353.7 550.1 371.5 551.7 389.2 553.4 407 555.5 424.8 558.4 442.6 561.5 460.4 564.7 478.2 568.1 496 571.5M69 571.5 86.8 575.2 104.6 578.6 122.4 582.2 140.2 584.8 158 587.3 175.8 589.3 193.5 590.7 211.3 591.4 229.1 591 246.9 589.9 264.7 587.8 282.5 584.4 300.3 580.4 318.1 575.7 335.9 570.5 353.7 565 371.5 558.9 389.2 553.4 407 548.1 424.8 543.4 442.6 539.7 460.4 536.9 478.2 535.6 496 535.5M69 535.5 86.8 536.8 104.6 539.1 122.4 542.9 140.2 547.6 158 553.7 175.8 559.9 193.5 566.7 211.3 573.6 229.1 580.5 246.9 587 264.7 592.2 282.5 597.2 300.3 601.3 318.1 604.6 335.9 606.5 353.7 608 371.5 608.5 389.2 608.3 407 607.4 424.8 605.9 442.6 603.7 460.4 601.3 478.2 599.1 496 597M69 597 86.8 594.7 104.6 592.9 122.4 591.3 140.2 590.2 158 589.4 175.8 589.3 193.5 589.1 211.3 589.6 229.1 590.8 246.9 592.4 264.7 594.5 282.5 596.8 300.3 599.4 318.1 602 335.9 605.3 353.7 608.2 371.5 611.3 389.2 613.8 407 616.2 424.8 618.3 442.6 619.8 460.4 621.1 478.2 621.5 496 621.6M69 621.6 86.8 620.8 104.6 619.3 122.4 616.5 140.2 613.3 158 609.4 175.8 605.2 193.5 600.3 211.3 595.2 229.1 589.6 246.9 583.9 264.7 578.1 282.5 572.1 300.3 566.4 318.1 561 335.9 555.8 353.7 551 371.5 546.1 389.2 542.2 407 538.2 424.8 534.5 442.6 531.4 460.4 528.3 478.2 526 496 523.6M69 523.6 86.8 521.2 104.6 519.1 122.4 517.3 140.2 516 158 514.6 175.8 512.8 193.5 511.9 211.3 511 229.1 510.7 246.9 510.7 264.7 510.6 282.5 511.1 300.3 512.1 318.1 512.8 335.9 514.4 353.7 515.7 371.5 517 389.2 519.1 407 520.8 424.8 522 442.6 522.9 460.4 523.4 478.2 524 496 523.9M69 523.9 86.8 523.2 104.6 523 122.4 522.4 140.2 522.2 158 522.7 175.8 523.1 193.5 524.6 211.3 527.2 229.1 530.8 246.9 535.3 264.7 540.7 282.5 547.5 300.3 555.5 318.1 564 335.9 572.5 353.7 581.1 371.5 589.1 389.2 597.1 407 603.3 424.8 608.3 442.6 611.5 460.4 612.7 478.2 611.4 496 607.6M69 607.6 86.8 602.1 104.6 594.1 122.4 584.5 140.2 573.6 158 561.7 175.8 548.4 193.5 535.8 211.3 523.7 229.1 512 246.9 501.8 264.7 493.3 282.5 487.3 300.3 482.9 318.1 481.1 335.9 481.6 353.7 484.3 371.5 489.3 389.2 496.6 407 505.2 424.8 514.5 442.6 525.1 460.4 536.6 478.2 548.6 496 560.3M69 560.3 86.8 571.7 104.6 582.6 122.4 592.7 140.2 601.6 158 609.2 175.8 615.2 193.5 619.9 211.3 623.4 229.1 625.2 246.9 625.4 264.7 624 282.5 621.3 300.3 617.2 318.1 612.4 335.9 605.9 353.7 599.4 371.5 592 389.2 584.3 407 577.1 424.8 570.2 442.6 563.7 460.4 557.8 478.2 552.5 496 548.5M69 548.5 86.8 545.5 104.6 543.4 122.4 542.8 140.2 543 158 544 175.8 546.1 193.5 548.4 211.3 550.7 229.1 553.6 246.9 556.3 264.7 558.9 282.5 561.1 300.3 562.4 318.1 563.1 335.9 563.1 353.7 562.4 371.5 560.9 389.2 558.6 407 555.5 424.8 552.4 442.6 548.5 460.4 544.4 478.2 540 496 535.6M69 535.6 86.8 531.7 104.6 528.1 122.4 524.7 140.2 521.7 158 520 175.8 518.9 193.5 519 211.3 519.8 229.1 521.9 246.9 525.2 264.7 529.9 282.5 535.4 300.3 541.9 318.1 549.2 335.9 557 353.7 565.2 371.5 572.7 389.2 580 407 586.4 424.8 591.8 442.6 595.5 460.4 597.8 478.2 598 496 596.4M69 596.4 86.8 592.9 104.6 587.2 122.4 579.7 140.2 570.7 158 560.9 175.8 549.7 193.5 538.5 211.3 527 229.1 516.4 246.9 505.9 264.7 496.6 282.5 488.6 300.3 482.2 318.1 477.8 335.9 474.8 353.7 473.9 371.5 474.4 389.2 476.7 407 479.9 424.8 484.7 442.6 490.3 460.4 496.7 478.2 503.6 496 510.8M69 510.8 86.8 518 104.6 524.8 122.4 531.7 140.2 538.2 158 544.5 175.8 550.9 193.5 557.1 211.3 563.1 229.1 568.2 246.9 573.7 264.7 579 282.5 583.9 300.3 588.7 318.1 593.7 335.9 598.6 353.7 602.8 371.5 607.2 389.2 610.9 407 614 424.8 616.5 442.6 618.6 460.4 619.9 478.2 620.7 496 620.9M69 620.9 86.8 620.1 104.6 618.8 122.4 616.9 140.2 614.6 158 611.7 175.8 608.1 193.5 604.6 211.3 600.6 229.1 596.5 246.9 592.4 264.7 588 282.5 583.8 300.3 579.8 318.1 575.6 335.9 571.1 353.7 566.8 371.5 561.9 389.2 557.6 407 552.4 424.8 547.2 442.6 542 460.4 536 478.2 529.9 496 523.5M69 523.5 86.8 516.9 104.6 510.5 122.4 504.5 140.2 498.6 158 493.5 175.8 488.9 193.5 485.5 211.3 483.5 229.1 482.2 246.9 482.3 264.7 484.3 282.5 487.5 300.3 492.3 318.1 498.2 335.9 504.7 353.7 512.7 371.5 521.2 389.2 529.9 407 538.4 424.8 546.7 442.6 554.3 460.4 561.3 478.2 566.9 496 571.7M69 571.7 86.8 574.6 104.6 576.4 122.4 577.1 140.2 576.4 158 574.2 175.8 571.2 193.5 567.6 211.3 563.6 229.1 559.6 246.9 555.6 264.7 551.6 282.5 547.8 300.3 545 318.1 542.5 335.9 540.9 353.7 539.4 371.5 538.9 389.2 538.3 407 538.2 424.8 538 442.6 538 460.4 537.9 478.2 537.4 496 536.6M69 536.6 86.8 535.3 104.6 533.5 122.4 531.5 140.2 529.7 158 528 175.8 526.9 193.5 525.9 211.3 525.9 229.1 526.8 246.9 528.6 264.7 531.7 282.5 535.9 300.3 541.3 318.1 547.8 335.9 555.3 353.7 563.2 371.5 571.8 389.2 580.3 407 589.4 424.8 597.5 442.6 604.7 460.4 611.4 478.2 616.6 496 620.8M69 620.8 86.8 623.9 104.6 626 122.4 626.8 140.2 626.7 158 625.8 175.8 624.5 193.5 623 211.3 621.2 229.1 620.5 246.9 619.9 264.7 620.2 282.5 621.2 300.3 622.5 318.1 624.9 335.9 627.2 353.7 629.7 371.5 632.5 389.2 634.6 407 635.8 424.8 636.3 442.6 634.8 460.4 632 478.2 627.2 496 620.9M69 620.9 86.8 613.3 104.6 603.5 122.4 593 140.2 581.4 158 569 175.8 557.1 193.5 545.3 211.3 534.8 229.1 525.9 246.9 518.7 264.7 514 282.5 511.5 300.3 511.3 318.1 513.7 335.9 518.4 353.7 525.4 371.5 534.2 389.2 544.1 407 555.2 424.8 566.8 442.6 578 460.4 589.3 478.2 599.7 496 608.5M69 608.5 86.8 616 104.6 622.1 122.4 626.8 140.2 629.7 158 630.8 175.8 630.8 193.5 629.4 211.3 626.6 229.1 623.1 246.9 618.5 264.7 613.5 282.5 608.2 300.3 602.8 318.1 597.2 335.9 591.5 353.7 585.6 371.5 579.7 389.2 573.2 407 566.9 424.8 560.5 442.6 554.3 460.4 548.1 478.2 541.5 496 535.4M69 535.4 86.8 529.5 104.6 523.3 122.4 517.5 140.2 511.7 158 507.1 175.8 502.6 193.5 498.7 211.3 495.3 229.1 492.5 246.9 490 264.7 488.4 282.5 487 300.3 486.2 318.1 486.3 335.9 486.8 353.7 488.5 371.5 489.9 389.2 492.8 407 496 424.8 499.9 442.6 504.7 460.4 510.6 478.2 517 496 524M69 524 86.8 531.7 104.6 539.1 122.4 546.9 140.2 554.3 158 561.5 175.8 567.5 193.5 572.5 211.3 576.3 229.1 578.3 246.9 578.5 264.7 577 282.5 573.7 300.3 568.3 318.1 561.6 335.9 553.5 353.7 544.1 371.5 534.6 389.2 525 407 515.7 424.8 507.1 442.6 499.8 460.4 494 478.2 489.5 496 487.4M69 487.4 86.8 487.2 104.6 489.1 122.4 492.6 140.2 497.9 158 503.9 175.8 510.9 193.5 518.5 211.3 526.3 229.1 533.1 246.9 539.4 264.7 544.9 282.5 548.3 300.3 550.6 318.1 551.1 335.9 550 353.7 547.4 371.5 543.4 389.2 538.3 407 532.2 424.8 525.6 442.6 518.8 460.4 512.1 478.2 505.3 496 499.7M69 499.7 86.8 494.7 104.6 490.4 122.4 487.6 140.2 485.9 158 485.6 175.8 486.4 193.5 488.4 211.3 491.4 229.1 495.5 246.9 500.1 264.7 505.8 282.5 511.6 300.3 517.5 318.1 524.2 335.9 530.4 353.7 536.8 371.5 543.1 389.2 549.2 407 554.8 424.8 559.9 442.6 563.9 460.4 567.5 478.2 570.1 496 571.8M69 571.8 86.8 572.9 104.6 573.1 122.4 572.2 140.2 570.6 158 567.8 175.8 564.6 193.5 560.5 211.3 555.8 229.1 550.8 246.9 545.9 264.7 540.7 282.5 535.9 300.3 531.4 318.1 526.8 335.9 523.3 353.7 520 371.5 518 389.2 516.1 407 515.3 424.8 515.4 442.6 516.5 460.4 518.3 478.2 520.8 496 524M69 524 86.8 528.1 104.6 532.3 122.4 536.8 140.2 541.7 158 546.4 175.8 551.5 193.5 556.2 211.3 560.5 229.1 564.4 246.9 567.8 264.7 570.2 282.5 572.5 300.3 573 318.1 573.5 335.9 573 353.7 571.8 371.5 569.6 389.2 566.7 407 563.7 424.8 560.5 442.6 557.4 460.4 553.9 478.2 551 496 547.8M69 547.8 86.8 545.1 104.6 542.7 122.4 540.8 140.2 539.7 158 539.3 175.8 539.5 193.5 540 211.3 540.6 229.1 541.4 246.9 542.8 264.7 544.7 282.5 546.8 300.3 549.1 318.1 551.7 335.9 554.4 353.7 556.9 371.5 559.7 389.2 562.7 407 565.9 424.8 569.3 442.6 573.1 460.4 576.8 478.2 580.4 496 584.2M69 584.2 86.8 588.3 104.6 592.4 122.4 596.8 140.2 601 158 605 175.8 608.4 193.5 611.6 211.3 614.7 229.1 616.9 246.9 618.9 264.7 620 282.5 620.6 300.3 620.8 318.1 620.5 335.9 619.5 353.7 618.5 371.5 616.9 389.2 615.7 407 614.2 424.8 612.8 442.6 611.5 460.4 610.3 478.2 609.3 496 608.9M69 608.9 86.8 608.8 104.6 609 122.4 608.8 140.2 608.9 158 609.1 175.8 608.8 193.5 608.3 211.3 607.1 229.1 605.8 246.9 603.9 264.7 601.1 282.5 597.3 300.3 592.9 318.1 587.8 335.9 582.7 353.7 577 371.5 571.2 389.2 565.7 407 560.4 424.8 555.8 442.6 551.7 460.4 549.1 478.2 548 496 547.9M69 547.9 86.8 549.1 104.6 551.7 122.4 555.3 140.2 560.2 158 566.1 175.8 572.6 193.5 579.5 211.3 586 229.1 592.6 246.9 598.7 264.7 603.7 282.5 608.4 300.3 612 318.1 614.5 335.9 616.4 353.7 617.1 371.5 617.2 389.2 617 407 616.7 424.8 616.9 442.6 617 460.4 617.6 478.2 619.4 496 621.1M69 621.1 86.8 623.9 104.6 627.1 122.4 630.3 140.2 633.7 158 636.8 175.8 639.1 193.5 640.4 211.3 640.4 229.1 638.6 246.9 634.8 264.7 629 282.5 621.4 300.3 611.5 318.1 600.2 335.9 587.6 353.7 573.6 371.5 558.9 389.2 544.5 407 530.7 424.8 518 442.6 507.2 460.4 498.5 478.2 491.7 496 487.7M69 487.7 86.8 486.6 104.6 487.6 122.4 491 140.2 496.9 158 504.5 175.8 513.1 193.5 522.3 211.3 531.6 229.1 540.4 246.9 548.1 264.7 554.7 282.5 559.6 300.3 562.8 318.1 564.8 335.9 564.8 353.7 563.4 371.5 561 389.2 557.9 407 554.8 424.8 551.6 442.6 548.8 460.4 547.4 478.2 546.9 496 547.9M69 547.9 86.8 550 104.6 553.5 122.4 558.8 140.2 565.4 158 572.9 175.8 580.7 193.5 588.7 211.3 596.7 229.1 604.5 246.9 610.9 264.7 616.6 282.5 620.9 300.3 624.1 318.1 625.9 335.9 626.7 353.7 625.9 371.5 624.3 389.2 622.2 407 619.6 424.8 616.6 442.6 613.9 460.4 611.5 478.2 609.2 496 607.9M69 607.9 86.8 607.1 104.6 606.5 122.4 606.2 140.2 606.5 158 606.9 175.8 607.1 193.5 606.9 211.3 606.4 229.1 605.2 246.9 603.4 264.7 601 282.5 597.1 300.3 592.3 318.1 586.9 335.9 580.1 353.7 572.8 371.5 564.6 389.2 555.6 407 546.4 424.8 536.9 442.6 527.5 460.4 517.8 478.2 508.2 496 499.5M69 499.5 86.8 491.2 104.6 483.7 122.4 477.6 140.2 472.5 158 468.8 175.8 467 193.5 466.2 211.3 467.4 229.1 469.5 246.9 473.7 264.7 479.4 282.5 486.9 300.3 495.8 318.1 505.6 335.9 516.4 353.7 528.2 371.5 540.3 389.2 552.5 407 565 424.8 577.2 442.6 589.5 460.4 600.9 478.2 611.4 496 620.6M69 620.6 86.8 628.6 104.6 635.5 122.4 640.8 140.2 644.3 158 646.6 175.8 647.1 193.5 646.5 211.3 644.2 229.1 640.3 246.9 635 264.7 628.5 282.5 620.9 300.3 612.3 318.1 603.4 335.9 594.1 353.7 584.8 371.5 575.6 389.2 567 407 558.8 424.8 551.3 442.6 545.2 460.4 540.6 478.2 537.3 496 535.8M69 535.8 86.8 535.7 104.6 536.7 122.4 538.9 140.2 542.1 158 545.6 175.8 549.5 193.5 553.3 211.3 556.8 229.1 559.1 246.9 560.6 264.7 560.8 282.5 559.5 300.3 556.9 318.1 552.9 335.9 548 353.7 541.8 371.5 535.5 389.2 529.1 407 523.2 424.8 517.9 442.6 513.9 460.4 511.4 478.2 510.6 496 511.3M69 511.3 86.8 514.4 104.6 518.8 122.4 524.7 140.2 532 158 540 175.8 548 193.5 555.3 211.3 562.3 229.1 567.6 246.9 570.8 264.7 572.5 282.5 572.2 300.3 568.7 318.1 563.7 335.9 556.8 353.7 548.1 371.5 538.2 389.2 527.8 407 517.7 424.8 507.9 442.6 499.8 460.4 493.6 478.2 489.2 496 486.9M69 486.9 86.8 487.9 104.6 490.7 122.4 496 140.2 504.1 158 513.6 175.8 525.2 193.5 537.2 211.3 549.8 229.1 562.4 246.9 574.9 264.7 586.6 282.5 597.3 300.3 606.6 318.1 614.5 335.9 620.6 353.7 624.7 371.5 628 389.2 629.2 407 629.4 424.8 628.9 442.6 627.7 460.4 625.8 478.2 623.5 496 621.1M69 621.1 86.8 618.2 104.6 615.8 122.4 614.1 140.2 611.8 158 609.1 175.8 606.7 193.5 604.6 211.3 601.6 229.1 597.8 246.9 593.6 264.7 589.1 282.5 584.5 300.3 579.3 318.1 573.8 335.9 567.9 353.7 563 371.5 558.9 389.2 554.8 407 552 424.8 550.8 442.6 551.2 460.4 552.9 478.2 556.8 496 561.2M69 561.2 86.8 567.7 104.6 575.2 122.4 583.3 140.2 591.7 158 600 175.8 607.9 193.5 614.8 211.3 620.4 229.1 623.9 246.9 625.7 264.7 624.5 282.5 621.4 300.3 615.8 318.1 607.9 335.9 598 353.7 586.3 371.5 573.8 389.2 560.9 407 547.7 424.8 534.9 442.6 523.4 460.4 513.2 478.2 505.5 496 499.5M69 499.5 86.8 496.5 104.6 496.1 122.4 498.1 140.2 502.9 158 509.4 175.8 518 193.5 527.7 211.3 538.6 229.1 550.6 246.9 562.4 264.7 573.8 282.5 585.1 300.3 595 318.1 603.7 335.9 611.4 353.7 616.8 371.5 620.9 389.2 623.4 407 624.5 424.8 624.2 442.6 622.1 460.4 618.6 478.2 614 496 608.2M69 608.2 86.8 601.8 104.6 594.9 122.4 586.9 140.2 579.2 158 570.7 175.8 561.9 193.5 552.9 211.3 543.8 229.1 535.2 246.9 527 264.7 519 282.5 511.7 300.3 504.9 318.1 498.9 335.9 494.1 353.7 490.5 371.5 488 389.2 487.1 407 487.5 424.8 489.4 442.6 492.6 460.4 497.5 478.2 503.7 496 510.9M69 510.9 86.8 519.1 104.6 527.6 122.4 536.6 140.2 545.7 158 554.9 175.8 563.7 193.5 572 211.3 579.4 229.1 586 246.9 590.8 264.7 594.2 282.5 596.1 300.3 596.9 318.1 596.3 335.9 594.3 353.7 591.2 371.5 587.1 389.2 582.5 407 576.8 424.8 570.8 442.6 564.5 460.4 558.5 478.2 553.1 496 548.2M69 548.2 86.8 543.7 104.6 540.4 122.4 537.9 140.2 536.1 158 535.9 175.8 536.3 193.5 538.2 211.3 541.2 229.1 544.8 246.9 549 264.7 554.3 282.5 560.4 300.3 566.6 318.1 573.3 335.9 580.2 353.7 587.3 371.5 594.1 389.2 600.3 407 606 424.8 611 442.6 615.2 460.4 618.1 478.2 620.1 496 620.9M69 620.9 86.8 621.2 104.6 619.8 122.4 618 140.2 615.2 158 611.8 175.8 608.2 193.5 605.1 211.3 601.7 229.1 599.3 246.9 597.7 264.7 596.6 282.5 596.5 300.3 597.1 318.1 598.6 335.9 600.6 353.7 603.4 371.5 606.2 389.2 609.3 407 611.7 424.8 613.3 442.6 614 460.4 613.6 478.2 611.7 496 608.4M69 608.4 86.8 604 104.6 598 122.4 590.8 140.2 582.5 158 574.4 175.8 565.7 193.5 557.6 211.3 550.6 229.1 544.6 246.9 540.1 264.7 537.5 282.5 537 300.3 537.9 318.1 540.9 335.9 546.1 353.7 553 371.5 560.9 389.2 569.9 407 579.2 424.8 588.8 442.6 597.8 460.4 606.4 478.2 614.5 496 620.8M69 620.8 86.8 626.2 104.6 630.3 122.4 632.6 140.2 633.2 158 632.4 175.8 630.2 193.5 626.8 211.3 622.3 229.1 617 246.9 611 264.7 603.8 282.5 596.6 300.3 589.5 318.1 582.1 335.9 574.8 353.7 567.8 371.5 560.9 389.2 554.5 407 548.2 424.8 542.6 442.6 537.4 460.4 532.6 478.2 528.4 496 524.8M69 524.8 86.8 521.4 104.6 518.7 122.4 516.8 140.2 515 158 513.9 175.8 513 193.5 512.5 211.3 512 229.1 511.8 246.9 512.1 264.7 512.4 282.5 512.3 300.3 512.3 318.1 512.6 335.9 512.6 353.7 513.3 371.5 514.1 389.2 515.3 407 517 424.8 519.6 442.6 522.5 460.4 526.3 478.2 530.6 496 536.2M69 536.2 86.8 542.2 104.6 548.8 122.4 556 140.2 563.1 158 570.3 175.8 577.7 193.5 584.7 211.3 590.9 229.1 596.7 246.9 601.6 264.7 605.6 282.5 608.2 300.3 610.3 318.1 611 335.9 610.9 353.7 610.1 371.5 608.4 389.2 605.6 407 602.5 424.8 599.2 442.6 595.7 460.4 591.9 478.2 588.7 496 585.3M69 585.3 86.8 581.8 104.6 578.8 122.4 576.1 140.2 573.7 158 572.1 175.8 571.1 193.5 570 211.3 569.6 229.1 569.2 246.9 569.8 264.7 570.3 282.5 571.8 300.3 573.3 318.1 575.1 335.9 576.3 353.7 577.8 371.5 578.8 389.2 578.7 407 578.5 424.8 577.5 442.6 575.1 460.4 571.2 478.2 566.2 496 559.9M69 559.9 86.8 552.6 104.6 544.3 122.4 536 140.2 527.1 158 518.1 175.8 510.5 193.5 503.6 211.3 498.2 229.1 495.2 246.9 494.2 264.7 495.8 282.5 499.8 300.3 506 318.1 514.4 335.9 524.7 353.7 536.5 371.5 549.2 389.2 562.1 407 574.4 424.8 585.6 442.6 595 460.4 602.3 478.2 606.9 496 608.7M69 608.7 86.8 607.8 104.6 604.5 122.4 598.3 140.2 589.9 158 580.3 175.8 569.5 193.5 558.6 211.3 548.3 229.1 539.2 246.9 531.9 264.7 526.7 282.5 524 300.3 524 318.1 526.6 335.9 531.9 353.7 539.9 371.5 549.3 389.2 560.3 407 571.9 424.8 583.6 442.6 594.6 460.4 604.8 478.2 613.4 496 620.5M69 620.5 86.8 625.3 104.6 627.9 122.4 628 140.2 625.9 158 621.7 175.8 615.4 193.5 607.7 211.3 599.6 229.1 590.3 246.9 580.1 264.7 570.1 282.5 559.7 300.3 550.1 318.1 540.9 335.9 532.3 353.7 524.3 371.5 517 389.2 510.9 407 505.6 424.8 500.2 442.6 495.8 460.4 492.5 478.2 489.7 496 487.4M69 487.4 86.8 485.3 104.6 484 122.4 483 140.2 482.8 158 482.9 175.8 483.7 193.5 485 211.3 486.8 229.1 489.1 246.9 491.9 264.7 495.2 282.5 498.6 300.3 503 318.1 507.3 335.9 511.4 353.7 515.6 371.5 519.7 389.2 523.6 407 526.8 424.8 529.6 442.6 532.4 460.4 534.3 478.2 535.5 496 536.4M69 536.4 86.8 536.1 104.6 535.6 122.4 535 140.2 533.9 158 533.1 175.8 532 193.5 531.1 211.3 531.1 229.1 531.3 246.9 531.9 264.7 533.2 282.5 535.2 300.3 537.9 318.1 540.7 335.9 544.2 353.7 547.6 371.5 551.1 389.2 554.4 407 557.9 424.8 560 442.6 561.6 460.4 561.9 478.2 561.4 496 559.3M69 559.3 86.8 556.3 104.6 552.1 122.4 547.2 140.2 541.7 158 535.8 175.8 530.1 193.5 524.2 211.3 519.2 229.1 514.8 246.9 512.4 264.7 511.1 282.5 511.9 300.3 514.4 318.1 518.5 335.9 523.7 353.7 530.8 371.5 538.5 389.2 547 407 555.3 424.8 563.5 442.6 570.9 460.4 577.1 478.2 581.7 496 584.9M69 584.9 86.8 586.5 104.6 586.3 122.4 584.9 140.2 581.9 158 577.9 175.8 573.1 193.5 568.6 211.3 564.6 229.1 561.3 246.9 559.3 264.7 558.9 282.5 559.8 300.3 561.8 318.1 565.6 335.9 570.8 353.7 576.4 371.5 582.8 389.2 589 407 594.6 424.8 598.9 442.6 601.8 460.4 602.2 478.2 600.4 496 596.4M69 596.4 86.8 590.4 104.6 582.2 122.4 572.2 140.2 560.9 158 548.9 175.8 537 193.5 525.6 211.3 515.3 229.1 507.1 246.9 501.6 264.7 498.7 282.5 499.1 300.3 502.2 318.1 508.7 335.9 517.9 353.7 529.2 371.5 541.6 389.2 555 407 569.3 424.8 583.1 442.6 595.4 460.4 606.3 478.2 614.9 496 621.2M69 621.2 86.8 624.8 104.6 625.4 122.4 623.7 140.2 620.3 158 615.1 175.8 608.8 193.5 601.6 211.3 594.1 229.1 586.9 246.9 581.1 264.7 576.4 282.5 573.2 300.3 572 318.1 572.6 335.9 574.9 353.7 578.5 371.5 583.2 389.2 589.3 407 595.5 424.8 601.9 442.6 608.4 460.4 613.6 478.2 618 496 621.3M69 621.3 86.8 622.8 104.6 623 122.4 622.1 140.2 620.2 158 617.1 175.8 612.5 193.5 607.4 211.3 602.7 229.1 597.5 246.9 592.5 264.7 587.9 282.5 583.9 300.3 581.2 318.1 579 335.9 577.2 353.7 576.2 371.5 576.5 389.2 577.5 407 579.6 424.8 582.1 442.6 585.3 460.4 588.8 478.2 592.5 496 596.7M69 596.7 86.8 600.9 104.6 605.4 122.4 609.4 140.2 613 158 615.9 175.8 618.5 193.5 620 211.3 620.3 229.1 619.1 246.9 617.2 264.7 613.7 282.5 608.8 300.3 602.5 318.1 595.1 335.9 586.9 353.7 577.9 371.5 568.3 389.2 558.7 407 548.6 424.8 539.3 442.6 530.7 460.4 522.9 478.2 516.5 496 511.2M69 511.2 86.8 507.3 104.6 504 122.4 503 140.2 503.1 158 504.4 175.8 507.1 193.5 510.9 211.3 515 229.1 519.8 246.9 524.8 264.7 529.8 282.5 535.1 300.3 540.2 318.1 545.4 335.9 549.7 353.7 553.8 371.5 557.6 389.2 560.7 407 563.2 424.8 565.7 442.6 567.6 460.4 569.5 478.2 571.1 496 572.4M69 572.4 86.8 573.7 104.6 575.1 122.4 576.4 140.2 577.9 158 579.4 175.8 580.8 193.5 583.2 211.3 585.3 229.1 588.1 246.9 590.5 264.7 593.3 282.5 596.5 300.3 599.4 318.1 602.5 335.9 605.4 353.7 607.9 371.5 610 389.2 611.2 407 611.4 424.8 610.7 442.6 609 460.4 606.1 478.2 602 496 596.6M69 596.6 86.8 590.1 104.6 582.4 122.4 573.8 140.2 564.4 158 554.2 175.8 544 193.5 533.5 211.3 523.1 229.1 512.8 246.9 503.3 264.7 494.8 282.5 487.2 300.3 480.8 318.1 475.7 335.9 472.1 353.7 469.7 371.5 468.6 389.2 469.3 407 471.3 424.8 474.8 442.6 479.3 460.4 485.2 478.2 492 496 499.6M69 499.6 86.8 507.5 104.6 515.8 122.4 524.2 140.2 532.8 158 541.6 175.8 549.3 193.5 556 211.3 561.7 229.1 566.6 246.9 570.5 264.7 572.2 282.5 572.5 300.3 571.7 318.1 569.6 335.9 566.1 353.7 561.7 371.5 556.4 389.2 550.9 407 545.5 424.8 540.1 442.6 534.8 460.4 530 478.2 526.4 496 523.7M69 523.7 86.8 522.2 104.6 521.9 122.4 522.7 140.2 524.5 158 527.2 175.8 530.9 193.5 535.2 211.3 539.9 229.1 544.9 246.9 550.1 264.7 555.2 282.5 559.8 300.3 563.9 318.1 567.2 335.9 569.4 353.7 571.1 371.5 571.9 389.2 571.4 407 569.8 424.8 567.1 442.6 564 460.4 559.1 478.2 553.6 496 547.7M69 547.7 86.8 540.9 104.6 533.9 122.4 526.5 140.2 519.3 158 512 175.8 505.4 193.5 499.3 211.3 494.5 229.1 490.4 246.9 488 264.7 486.6 282.5 486.7 300.3 488.4 318.1 491.4 335.9 496.4 353.7 501.5 371.5 507.9 389.2 514.6 407 521.6 424.8 528.3 442.6 534.5 460.4 539.9 478.2 544.3 496 547.5M69 547.5 86.8 549.2 104.6 549.7 122.4 548.3 140.2 546 158 542.8 175.8 538.8 193.5 533.8 211.3 528.6 229.1 523.9 246.9 519.2 264.7 515.1 282.5 511.5 300.3 509.1 318.1 507 335.9 506.2 353.7 506.3 371.5 506.6 389.2 507 407 508.7 424.8 510.1 442.6 510.8 460.4 511.5 478.2 511.7 496 511.7M69 511.7 86.8 511.1 104.6 509.9 122.4 507.9 140.2 505.4 158 502.5 175.8 500.1 193.5 496.9 211.3 494.2 229.1 492 246.9 489.8 264.7 488.2 282.5 486.9 300.3 486.2 318.1 486.1 335.9 487 353.7 487.8 371.5 489.3 389.2 490.6 407 492.3 424.8 493.8 442.6 495.4 460.4 497 478.2 498.2 496 499.1M69 499.1 86.8 499.5 104.6 499.9 122.4 499.5 140.2 499.7 158 499.3 175.8 498.6 193.5 498.2 211.3 498.1 229.1 498 246.9 498.4 264.7 498.8 282.5 499.5 300.3 500.6 318.1 502.2 335.9 504.2 353.7 505.9 371.5 508.2 389.2 510.9 407 513.2 424.8 515.5 442.6 517.7 460.4 519.5 478.2 521.3 496 522.8M69 522.8 86.8 524.3 104.6 525.1 122.4 525.7 140.2 526.6 158 527.7 175.8 529 193.5 530.7 211.3 532.6 229.1 535.3 246.9 538.5 264.7 543 282.5 547.8 300.3 553.3 318.1 559.9 335.9 567 353.7 574.3 371.5 581.4 389.2 588.8 407 595.8 424.8 602.6 442.6 608.5 460.4 613.8 478.2 617.4 496 620.5M69 620.5 86.8 622.4 104.6 622.9 122.4 622.3 140.2 621 158 619.5 175.8 617.4 193.5 615.1 211.3 612.7 229.1 610.4 246.9 609 264.7 608.4 282.5 608.8 300.3 609.7 318.1 611.5 335.9 613.9 353.7 616.8 371.5 620.2 389.2 623 407 625.3 424.8 627.1 442.6 627.8 460.4 627.1 478.2 624.8 496 620.6M69 620.6 86.8 615.2 104.6 608.6 122.4 600.6 140.2 591.8 158 581.3 175.8 571.5 193.5 562.1 211.3 553.5 229.1 546.6 246.9 540.9 264.7 537 282.5 535.6 300.3 535.3 318.1 537.2 335.9 540.8 353.7 545.6 371.5 551.6 389.2 557.8 407 563.8 424.8 568.4 442.6 571.6 460.4 573.8 478.2 573.7 496 571.7M69 571.7 86.8 568.1 104.6 562.5 122.4 555.2 140.2 546.7 158 537.6 175.8 528.6 193.5 519.4 211.3 511.8 229.1 505.6 246.9 501.3 264.7 499.3 282.5 499.7 300.3 502.7 318.1 508 335.9 515.6 353.7 525.1 371.5 536 389.2 547.6 407 560.1 424.8 572.2 442.6 583.7 460.4 594 478.2 602.6 496 608.9" fill="none" stroke="#f9b92c" stroke-width="1.0"/></svg><div style="position:absolute;right:1215.7px;top:103.45px;font:normal 13px/16px 'Liberation Sans', sans-serif;color:#e4e4e4;white-space:pre;-webkit-text-stroke:0.3px #e4e4e4;">1.500</div><div style="position:absolute;right:1215.7px;top:123.35px;font:normal 13px/16px 'Liberation Sans', sans-serif;color:#e4e4e4;white-space:pre;-webkit-text-stroke:0.3px #e4e4e4;">1.200</div><div style="position:absolute;right:1215.7px;top:147.75px;font:normal 13px/16px 'Liberation Sans', sans-serif;color:#e4e4e4;white-space:pre;-webkit-text-stroke:0.3px #e4e4e4;">0.900</div><div style="position:absolute;right:1215.7px;top:171.95px;font:normal 13px/16px 'Liberation Sans', sans-serif;color:#e4e4e4;white-space:pre;-webkit-text-stroke:0.3px #e4e4e4;">0.600</div><div style="position:absolute;right:1215.7px;top:196.45px;font:normal 13px/16px 'Liberation Sans', sans-serif;color:#e4e4e4;white-space:pre;-webkit-text-stroke:0.3px #e4e4e4;">0.300</div><div style="position:absolute;right:1215.7px;top:220.95px;font:normal 13px/16px 'Liberation Sans', sans-serif;color:#e4e4e4;white-space:pre;-webkit-text-stroke:0.3px #e4e4e4;">0</div><div style="position:absolute;right:1215.7px;top:245.45px;font:normal 13px/16px 'Liberation Sans', sans-serif;color:#e4e4e4;white-space:pre;-webkit-text-stroke:0.3px #e4e4e4;">-0.300</div><div style="position:absolute;right:1215.7px;top:269.95px;font:normal 13px/16px 'Liberation Sans', sans-serif;color:#e4e4e4;white-space:pre;-webkit-text-stroke:0.3px #e4e4e4;">-0.600</div><div style="position:absolute;right:1215.7px;top:293.95px;font:normal 13px/16px 'Liberation Sans', sans-serif;color:#e4e4e4;white-space:pre;-webkit-text-stroke:0.3px #e4e4e4;">-0.900</div><div style="position:absolute;right:1215.7px;top:318.95px;font:normal 13px/16px 'Liberation Sans', sans-serif;color:#e4e4e4;white-space:pre;-webkit-text-stroke:0.3px #e4e4e4;">-1.200</div><div style="position:absolute;right:1215.7px;top:337.95px;font:normal 13px/16px 'Liberation Sans', sans-serif;color:#e4e4e4;white-space:pre;-webkit-text-stroke:0.3px #e4e4e4;">-1.500</div><div style="position:absolute;left:69px;top:356.80px;font:normal 15px/18px 'Liberation Sans', sans-serif;color:#e4e4e4;white-space:pre;transform:scale(0.955,1.0);transform-origin:left;">-2.61</div><div style="position:absolute;right:785px;top:356.80px;font:normal 15px/18px 'Liberation Sans', sans-serif;color:#e4e4e4;white-space:pre;transform:scale(0.955,1.0);transform-origin:right;">2.61</div><div style="position:absolute;right:717px;top:103.45px;font:normal 13px/16px 'Liberation Sans', sans-serif;color:#e4e4e4;white-space:pre;-webkit-text-stroke:0.3px #e4e4e4;">LogMag</div><div style="position:absolute;right:717px;top:123.45px;font:normal 13px/16px 'Liberation Sans', sans-serif;color:#e4e4e4;white-space:pre;-webkit-text-stroke:0.3px #e4e4e4;">0</div><div style="position:absolute;right:717px;top:147.55px;font:normal 13px/16px 'Liberation Sans', sans-serif;color:#e4e4e4;white-space:pre;-webkit-text-stroke:0.3px #e4e4e4;">-10.000</div><div style="position:absolute;right:717px;top:171.95px;font:normal 13px/16px 'Liberation Sans', sans-serif;color:#e4e4e4;white-space:pre;-webkit-text-stroke:0.3px #e4e4e4;">-20.000</div><div style="position:absolute;right:717px;top:196.45px;font:normal 13px/16px 'Liberation Sans', sans-serif;color:#e4e4e4;white-space:pre;-webkit-text-stroke:0.3px #e4e4e4;">-30.000</div><div style="position:absolute;right:717px;top:220.95px;font:normal 13px/16px 'Liberation Sans', sans-serif;color:#e4e4e4;white-space:pre;-webkit-text-stroke:0.3px #e4e4e4;">-40.000</div><div style="position:absolute;right:717px;top:245.45px;font:normal 13px/16px 'Liberation Sans', sans-serif;color:#e4e4e4;white-space:pre;-webkit-text-stroke:0.3px #e4e4e4;">-50.000</div><div style="position:absolute;right:717px;top:269.95px;font:normal 13px/16px 'Liberation Sans', sans-serif;color:#e4e4e4;white-space:pre;-webkit-text-stroke:0.3px #e4e4e4;">-60.000</div><div style="position:absolute;right:717px;top:294.95px;font:normal 13px/16px 'Liberation Sans', sans-serif;color:#e4e4e4;white-space:pre;-webkit-text-stroke:0.3px #e4e4e4;">-70.000</div><div style="position:absolute;right:717px;top:319.45px;font:normal 13px/16px 'Liberation Sans', sans-serif;color:#e4e4e4;white-space:pre;-webkit-text-stroke:0.3px #e4e4e4;">-80.000</div><div style="position:absolute;right:717px;top:336.95px;font:normal 13px/16px 'Liberation Sans', sans-serif;color:#e4e4e4;white-space:pre;-webkit-text-stroke:0.3px #e4e4e4;">-90.000</div><div style="position:absolute;left:568.7px;top:356.80px;font:normal 15px/18px 'Liberation Sans', sans-serif;color:#e4e4e4;white-space:pre;transform:scale(0.955,1.0);transform-origin:left;">Ctr : 1.000000000 GHz</div><div style="position:absolute;right:286px;top:356.80px;font:normal 15px/18px 'Liberation Sans', sans-serif;color:#e4e4e4;white-space:pre;transform:scale(0.955,1.0);transform-origin:right;">Width : 12.512219 MHz</div><div style="position:absolute;right:1215.7px;top:433.45px;font:normal 13px/16px 'Liberation Sans', sans-serif;color:#e4e4e4;white-space:pre;-webkit-text-stroke:0.3px #e4e4e4;">1.500</div><div style="position:absolute;right:1215.7px;top:452.35px;font:normal 13px/16px 'Liberation Sans', sans-serif;color:#e4e4e4;white-space:pre;-webkit-text-stroke:0.3px #e4e4e4;">1.200</div><div style="position:absolute;right:1215.7px;top:475.45px;font:normal 13px/16px 'Liberation Sans', sans-serif;color:#e4e4e4;white-space:pre;-webkit-text-stroke:0.3px #e4e4e4;">0.900</div><div style="position:absolute;right:1215.7px;top:498.95px;font:normal 13px/16px 'Liberation Sans', sans-serif;color:#e4e4e4;white-space:pre;-webkit-text-stroke:0.3px #e4e4e4;">0.600</div><div style="position:absolute;right:1215.7px;top:522.55px;font:normal 13px/16px 'Liberation Sans', sans-serif;color:#e4e4e4;white-space:pre;-webkit-text-stroke:0.3px #e4e4e4;">0.300</div><div style="position:absolute;right:1215.7px;top:546.15px;font:normal 13px/16px 'Liberation Sans', sans-serif;color:#e4e4e4;white-space:pre;-webkit-text-stroke:0.3px #e4e4e4;">0</div><div style="position:absolute;right:1215.7px;top:569.95px;font:normal 13px/16px 'Liberation Sans', sans-serif;color:#e4e4e4;white-space:pre;-webkit-text-stroke:0.3px #e4e4e4;">-0.300</div><div style="position:absolute;right:1215.7px;top:593.35px;font:normal 13px/16px 'Liberation Sans', sans-serif;color:#e4e4e4;white-space:pre;-webkit-text-stroke:0.3px #e4e4e4;">-0.600</div><div style="position:absolute;right:1215.7px;top:616.95px;font:normal 13px/16px 'Liberation Sans', sans-serif;color:#e4e4e4;white-space:pre;-webkit-text-stroke:0.3px #e4e4e4;">-0.900</div><div style="position:absolute;right:1215.7px;top:640.55px;font:normal 13px/16px 'Liberation Sans', sans-serif;color:#e4e4e4;white-space:pre;-webkit-text-stroke:0.3px #e4e4e4;">-1.200</div><div style="position:absolute;right:1215.7px;top:658.95px;font:normal 13px/16px 'Liberation Sans', sans-serif;color:#e4e4e4;white-space:pre;-webkit-text-stroke:0.3px #e4e4e4;">-1.500</div><div style="position:absolute;left:70px;top:678.30px;font:normal 15px/18px 'Liberation Sans', sans-serif;color:#e4e4e4;white-space:pre;transform:scale(0.955,1.0);transform-origin:left;">Left : -1.00 symbols</div><div style="position:absolute;right:785px;top:678.30px;font:normal 15px/18px 'Liberation Sans', sans-serif;color:#e4e4e4;white-space:pre;transform:scale(0.955,1.0);transform-origin:right;">Width : 2.00 symbols</div><div style="position:absolute;left:70px;top:702.30px;font:normal 15px/18px 'Liberation Sans', sans-serif;color:#e4e4e4;white-space:pre;transform:scale(0.955,1.0);transform-origin:left;">Ref Symbol : 0.00 symbols</div><div style="position:absolute;right:785px;top:702.30px;font:normal 15px/18px 'Liberation Sans', sans-serif;color:#e4e4e4;white-space:pre;transform:scale(0.955,1.0);transform-origin:right;">Symbol Intvl : 256.00 symbols</div><div style="position:absolute;left:508px;top:432px;width:486px;height:198px;"></div><svg style="position:absolute;left:0;top:0" width="1280" height="800"><path d="M508.5 432H994M508.5 456.8H994M508.5 481.5H994M508.5 506.2H994M508.5 531H994M508.5 555.8H994M508.5 580.5H994M508.5 605.2H994M508.5 630H994M508.5 432V630M626 432V630M967 432V630M994 432V630" stroke="#222" stroke-width="1" fill="none"/></svg><div style="position:absolute;left:521px;top:436.45px;font:normal 14px/17px 'Liberation Mono', monospace;color:#00e000;white-space:pre;transform:scale(0.985,1.0);transform-origin:left;">EVM</div><div style="position:absolute;left:643.5px;top:436.45px;font:normal 14px/17px 'Liberation Mono', monospace;color:#00e000;white-space:pre;transform:scale(0.985,1.0);transform-origin:left;">1.3718 %rms</div><div style="position:absolute;left:759.2px;top:436.45px;font:normal 14px/17px 'Liberation Mono', monospace;color:#00e000;white-space:pre;transform:scale(0.985,1.0);transform-origin:left;">4.4910 %pk at symbol 0</div><div style="position:absolute;left:521px;top:461.20px;font:normal 14px/17px 'Liberation Mono', monospace;color:#00e000;white-space:pre;transform:scale(0.985,1.0);transform-origin:left;">Mag Err</div><div style="position:absolute;left:643.5px;top:461.20px;font:normal 14px/17px 'Liberation Mono', monospace;color:#00e000;white-space:pre;transform:scale(0.985,1.0);transform-origin:left;">2.9075 %rms</div><div style="position:absolute;left:752.0px;top:461.20px;font:normal 14px/17px 'Liberation Mono', monospace;color:#00e000;white-space:pre;transform:scale(0.985,1.0);transform-origin:left;">-20.126 %pk at symbol 9</div><div style="position:absolute;left:521px;top:485.95px;font:normal 14px/17px 'Liberation Mono', monospace;color:#00e000;white-space:pre;transform:scale(0.985,1.0);transform-origin:left;">Phase Err</div><div style="position:absolute;left:643.5px;top:485.95px;font:normal 14px/17px 'Liberation Mono', monospace;color:#00e000;white-space:pre;transform:scale(0.985,1.0);transform-origin:left;">1.5374 %rms</div><div style="position:absolute;left:760.2px;top:485.95px;font:normal 14px/17px 'Liberation Mono', monospace;color:#00e000;white-space:pre;transform:scale(0.985,1.0);transform-origin:left;">10.964 %pk at symbol 169</div><div style="position:absolute;left:521px;top:510.70px;font:normal 14px/17px 'Liberation Mono', monospace;color:#00e000;white-space:pre;transform:scale(0.985,1.0);transform-origin:left;">Freq Offset</div><div style="position:absolute;left:789.5px;top:510.70px;font:normal 14px/17px 'Liberation Mono', monospace;color:#00e000;white-space:pre;transform:scale(0.985,1.0);transform-origin:left;">-55 Hz</div><div style="position:absolute;left:521px;top:535.45px;font:normal 14px/17px 'Liberation Mono', monospace;color:#00e000;white-space:pre;transform:scale(0.985,1.0);transform-origin:left;">IQ Offset</div><div style="position:absolute;left:755.8000000000001px;top:535.45px;font:normal 14px/17px 'Liberation Mono', monospace;color:#00e000;white-space:pre;transform:scale(0.985,1.0);transform-origin:left;">-39.173 dB</div><div style="position:absolute;left:521px;top:560.20px;font:normal 14px/17px 'Liberation Mono', monospace;color:#00e000;white-space:pre;transform:scale(0.985,1.0);transform-origin:left;">Gain Imb</div><div style="position:absolute;left:763.5px;top:560.20px;font:normal 14px/17px 'Liberation Mono', monospace;color:#00e000;white-space:pre;transform:scale(0.985,1.0);transform-origin:left;">19.344 dB</div><div style="position:absolute;left:521px;top:584.95px;font:normal 14px/17px 'Liberation Mono', monospace;color:#00e000;white-space:pre;transform:scale(0.985,1.0);transform-origin:left;">Quad Err</div><div style="position:absolute;left:763.5px;top:584.95px;font:normal 14px/17px 'Liberation Mono', monospace;color:#00e000;white-space:pre;transform:scale(0.985,1.0);transform-origin:left;">20.301 deg</div><div style="position:absolute;left:521px;top:609.70px;font:normal 14px/17px 'Liberation Mono', monospace;color:#00e000;white-space:pre;transform:scale(0.985,1.0);transform-origin:left;">SNR</div><div style="position:absolute;left:763.5px;top:609.70px;font:normal 14px/17px 'Liberation Mono', monospace;color:#00e000;white-space:pre;transform:scale(0.985,1.0);transform-origin:left;">33.939 dB</div><div style="position:absolute;left:1010px;top:74px;width:260px;height:41px;background:#525d62;border-radius:4px;border-bottom-left-radius:0;border-bottom-right-radius:0;"></div><div style="position:absolute;left:839.5px;width:600px;text-align:center;top:81.92px;font:normal 19px/23px 'Liberation Sans', sans-serif;color:#e6e6e6;white-space:pre;transform:scale(1.0,0.95);transform-origin:center;">测量设置</div><div style="position:absolute;left:1231px;top:88px;width:0;height:0;border-left:6.5px solid transparent;border-right:6.5px solid transparent;border-top:11px solid #e6e6e6"></div><div style="position:absolute;left:1010.5px;top:121px;width:177px;height:598px;background:transparent;border-radius:3px;box-sizing:border-box;border:3.5px solid #4b575b;"></div><div style="position:absolute;left:1016px;top:126.25px;width:165.7px;height:72.25px;background:#2d363b;border-radius:6px;box-sizing:border-box;border:2px solid #6f9fe6;"></div><div style="position:absolute;left:1027.3px;top:131.76px;font:bold 18px/22px 'Liberation Sans', sans-serif;color:#e2e2e2;white-space:pre;transform:scale(0.95,0.87);transform-origin:left;">调制方式</div><div style="position:absolute;left:1030px;top:170.60px;width:0;height:0;border-top:5px solid transparent;border-bottom:5px solid transparent;border-right:8px solid #e0e0e0"></div><div style="position:absolute;left:1046.3px;top:164.71px;font:normal 17px/20px 'Liberation Sans', sans-serif;color:#e2e2e2;white-space:pre;transform:scale(0.93,1.0);transform-origin:left;">128QAM</div><div style="position:absolute;left:1026.5px;top:187.79999999999998px;width:144.5px;height:1.2px;background:#8f9496;border-radius:0px;"></div><div style="position:absolute;left:1019px;top:201.9px;width:159.6px;height:63.70000000000002px;background:#2d363b;border-radius:5px;"></div><div style="position:absolute;left:1027.3px;top:205.16px;font:bold 18px/22px 'Liberation Sans', sans-serif;color:#e2e2e2;white-space:pre;transform:scale(0.95,0.87);transform-origin:left;">测量间隔</div><div style="position:absolute;left:1028.5px;top:236.61px;font:normal 17px/20px 'Liberation Sans', sans-serif;color:#e2e2e2;white-space:pre;transform:scale(0.93,1.0);transform-origin:left;">256</div><div style="position:absolute;left:1026.5px;top:258.0px;width:144.5px;height:1.2px;background:#8f9496;border-radius:0px;"></div><div style="position:absolute;left:1019px;top:271.0px;width:159.6px;height:63.39999999999998px;background:#2d363b;border-radius:5px;"></div><div style="position:absolute;left:1027.3px;top:274.26px;font:bold 18px/22px 'Liberation Sans', sans-serif;color:#e2e2e2;white-space:pre;transform:scale(0.95,0.87);transform-origin:left;">码率</div><div style="position:absolute;left:1028.5px;top:305.71px;font:normal 17px/20px 'Liberation Sans', sans-serif;color:#e2e2e2;white-space:pre;transform:scale(0.93,1.0);transform-origin:left;">1 Msps</div><div style="position:absolute;left:1026.5px;top:327.1px;width:144.5px;height:1.2px;background:#8f9496;border-radius:0px;"></div><div style="position:absolute;left:1019px;top:340.4px;width:159.6px;height:63.10000000000002px;background:#2d363b;border-radius:5px;"></div><div style="position:absolute;left:1027.3px;top:343.66px;font:bold 18px/22px 'Liberation Sans', sans-serif;color:#e2e2e2;white-space:pre;transform:scale(0.95,0.87);transform-origin:left;">采样点数/码元</div><div style="position:absolute;left:1028.5px;top:375.11px;font:normal 17px/20px 'Liberation Sans', sans-serif;color:#e2e2e2;white-space:pre;transform:scale(0.93,1.0);transform-origin:left;">16</div><div style="position:absolute;left:1026.5px;top:396.5px;width:144.5px;height:1.2px;background:#8f9496;border-radius:0px;"></div><div style="position:absolute;left:1019px;top:409.5px;width:159.6px;height:65.80000000000001px;background:#2d363b;border-radius:5px;"></div><div style="position:absolute;left:1027.3px;top:412.76px;font:bold 18px/22px 'Liberation Sans', sans-serif;color:#e2e2e2;white-space:pre;transform:scale(0.95,0.87);transform-origin:left;">测量滤波器</div><div style="position:absolute;left:1030px;top:451.60px;width:0;height:0;border-top:5px solid transparent;border-bottom:5px solid transparent;border-right:8px solid #e0e0e0"></div><div style="position:absolute;left:1046.3px;top:445.71px;font:normal 17px/20px 'Liberation Sans', sans-serif;color:#e2e2e2;white-space:pre;transform:scale(0.93,1.0);transform-origin:left;">根升余弦</div><div style="position:absolute;left:1026.5px;top:468.8px;width:144.5px;height:1.2px;background:#8f9496;border-radius:0px;"></div><div style="position:absolute;left:1019px;top:481.9px;width:159.6px;height:66.0px;background:#2d363b;border-radius:5px;"></div><div style="position:absolute;left:1027.3px;top:485.16px;font:bold 18px/22px 'Liberation Sans', sans-serif;color:#e2e2e2;white-space:pre;transform:scale(0.95,0.87);transform-origin:left;">参考滤波器</div><div style="position:absolute;left:1030px;top:524.00px;width:0;height:0;border-top:5px solid transparent;border-bottom:5px solid transparent;border-right:8px solid #e0e0e0"></div><div style="position:absolute;left:1046.3px;top:518.11px;font:normal 17px/20px 'Liberation Sans', sans-serif;color:#e2e2e2;white-space:pre;transform:scale(0.93,1.0);transform-origin:left;">矩形</div><div style="position:absolute;left:1026.5px;top:541.2px;width:144.5px;height:1.2px;background:#8f9496;border-radius:0px;"></div><div style="position:absolute;left:1019px;top:554.3px;width:159.6px;height:63.0px;background:#2d363b;border-radius:5px;"></div><div style="position:absolute;left:1027.3px;top:557.56px;font:bold 18px/22px 'Liberation Sans', sans-serif;color:#e2e2e2;white-space:pre;transform:scale(0.95,0.87);transform-origin:left;">Alpha/BT</div><div style="position:absolute;left:1028.5px;top:589.01px;font:normal 17px/20px 'Liberation Sans', sans-serif;color:#e2e2e2;white-space:pre;transform:scale(0.93,1.0);transform-origin:left;">0.25</div><div style="position:absolute;left:1026.5px;top:610.4px;width:144.5px;height:1.2px;background:#8f9496;border-radius:0px;"></div><div style="position:absolute;left:1187px;top:121px;width:82.6px;height:50.80000000000001px;background:#525d62;border-radius:4px;border-top-left-radius:0;border-bottom-left-radius:0;"></div><div style="position:absolute;left:1187px;top:121px;width:82.6px;height:50.80000000000001px;display:flex;align-items:center;justify-content:center;font:bold 16px/20px 'Liberation Sans', sans-serif;color:#ececec;text-align:center;padding-bottom:3px;box-sizing:border-box">设置</div><div style="position:absolute;left:1187px;top:176.5px;width:82.6px;height:51.099999999999994px;background:#2d363b;border-radius:4px;border-top-left-radius:0;border-bottom-left-radius:0;"></div><div style="position:absolute;left:1187.6px;top:176.5px;width:82px;height:51.099999999999994px;display:flex;align-items:center;justify-content:center;font:normal 15px/21px 'Liberation Sans', sans-serif;color:#b8b8b8;text-align:center;padding-bottom:3px;box-sizing:border-box">测量帧设<br>置</div><div style="position:absolute;left:1187px;top:233.5px;width:82.6px;height:49.89999999999998px;background:#2d363b;border-radius:4px;border-top-left-radius:0;border-bottom-left-radius:0;"></div><div style="position:absolute;left:1187.6px;top:233.5px;width:82px;height:49.89999999999998px;display:flex;align-items:center;justify-content:center;font:normal 15px/21px 'Liberation Sans', sans-serif;color:#b8b8b8;text-align:center;padding-bottom:3px;box-sizing:border-box">误码率</div><div style="position:absolute;left:1187px;top:290px;width:82.6px;height:51px;background:#2d363b;border-radius:4px;border-top-left-radius:0;border-bottom-left-radius:0;"></div><div style="position:absolute;left:1187.6px;top:290px;width:82px;height:51px;display:flex;align-items:center;justify-content:center;font:normal 15px/21px 'Liberation Sans', sans-serif;color:#b8b8b8;text-align:center;padding-bottom:3px;box-sizing:border-box">解调预设</div><div style="position:absolute;left:1187px;top:346.3px;width:82.6px;height:50.69999999999999px;background:#2d363b;border-radius:4px;border-top-left-radius:0;border-bottom-left-radius:0;"></div><div style="position:absolute;left:1187.6px;top:346.3px;width:82px;height:50.69999999999999px;display:flex;align-items:center;justify-content:center;font:normal 15px/21px 'Liberation Sans', sans-serif;color:#b8b8b8;text-align:center;padding-bottom:3px;box-sizing:border-box">全局</div><div style="position:absolute;left:1243.3px;top:690.8px;width:28px;height:27.5px;background:#2d363b;border-radius:2px;"></div><svg style="position:absolute;left:1243px;top:690px" width="29" height="29"><path d="M5 9L10.5 14L5 19" stroke="#f0f0f0" stroke-width="1.6" fill="none"/><path d="M12 8.5H26M14 14H26M12 19.5H26" stroke="#f0f0f0" stroke-width="1.8"/></svg><svg style="position:absolute;left:0;top:0" width="90" height="800">
<defs><linearGradient id="gm" x1="0.1" y1="0" x2="0.9" y2="1"><stop offset="0" stop-color="#9a9a9a"/><stop offset="0.3" stop-color="#dadada"/><stop offset="0.55" stop-color="#8e8e8e"/><stop offset="0.8" stop-color="#d6d6d6"/><stop offset="1" stop-color="#a0a0a0"/></linearGradient>
<radialGradient id="gi" cx="0.5" cy="0.5" r="0.55"><stop offset="0" stop-color="#4a4543"/><stop offset="1" stop-color="#2b2725"/></radialGradient>
<linearGradient id="rg" x1="0" y1="0" x2="1" y2="1"><stop offset="0" stop-color="#c8c8c8"/><stop offset="0.5" stop-color="#8a8a8a"/><stop offset="1" stop-color="#bcbcbc"/></linearGradient></defs>
<path d="M77.6 762.7L77.6 762.4L77.6 762.1L77.6 761.9L77.6 761.6L77.6 761.3L77.6 761.0L77.5 760.8L77.5 760.5L77.5 760.2L77.5 759.9L77.5 759.7L77.4 759.4L77.4 759.1L77.4 758.8L77.3 758.5L77.3 758.3L77.3 758.0L77.2 757.7L77.2 757.5L77.1 757.2L77.1 756.9L77.0 756.6L77.0 756.4L76.9 756.1L76.8 755.8L76.8 755.5L76.7 755.3L76.7 755.0L76.6 754.7L76.5 754.5L76.4 754.2L76.4 753.9L76.3 753.7L76.2 753.4L76.1 753.1L76.0 752.9L76.0 752.6L75.9 752.3L75.8 752.1L75.7 751.8L75.6 751.6L75.5 751.3L75.4 751.0L75.3 750.8L75.2 750.5L75.1 750.3L75.0 750.0L74.9 749.8L74.7 749.5L74.6 749.3L74.5 749.0L74.4 748.8L74.3 748.5L74.1 748.3L74.0 748.0L73.9 747.8L73.7 747.5L73.6 747.3L71.6 748.1L71.0 748.2L70.5 748.1L70.1 748.1L69.8 748.0L69.5 747.9L69.2 747.8L69.0 747.7L68.7 747.5L68.5 747.4L68.3 747.2L68.1 747.1L67.9 747.0L67.7 746.8L67.5 746.6L67.3 746.5L67.1 746.3L67.0 746.2L66.8 746.0L66.6 745.8L66.5 745.7L66.3 745.5L66.2 745.3L66.0 745.1L65.9 744.9L65.8 744.7L65.6 744.5L65.5 744.3L65.4 744.1L65.3 743.9L65.1 743.7L65.0 743.5L64.9 743.2L64.8 743.0L64.7 742.8L64.6 742.5L64.6 742.2L64.5 741.9L64.5 741.6L64.4 741.3L64.4 740.9L64.5 740.4L64.7 739.8L65.8 738.0L65.6 737.8L65.4 737.6L65.2 737.5L64.9 737.3L64.7 737.1L64.5 737.0L64.3 736.8L64.0 736.7L63.8 736.5L63.6 736.3L63.4 736.2L63.1 736.0L62.9 735.9L62.7 735.7L62.4 735.6L62.2 735.4L61.9 735.3L61.7 735.2L61.5 735.0L61.2 734.9L61.0 734.8L60.7 734.6L60.5 734.5L60.2 734.4L60.0 734.2L59.7 734.1L59.5 734.0L59.2 733.9L59.0 733.8L58.7 733.6L58.5 733.5L58.2 733.4L58.0 733.3L57.7 733.2L57.5 733.1L57.2 733.0L56.9 732.9L56.7 732.8L56.4 732.7L56.2 732.6L55.9 732.5L55.6 732.5L55.4 732.4L55.1 732.3L54.8 732.2L54.6 732.1L54.3 732.1L54.0 732.0L53.8 731.9L53.5 731.8L53.2 731.8L53.0 731.7L52.7 731.7L52.4 731.6L52.1 731.5L51.9 731.5L51.2 733.5L50.9 734.1L50.5 734.4L50.2 734.6L50.0 734.8L49.7 735.0L49.4 735.2L49.2 735.3L48.9 735.4L48.7 735.5L48.4 735.5L48.2 735.6L47.9 735.7L47.7 735.7L47.4 735.8L47.2 735.8L47.0 735.8L46.7 735.9L46.5 735.9L46.3 735.9L46.0 735.9L45.8 735.9L45.6 735.9L45.3 735.9L45.1 735.9L44.9 735.9L44.6 735.8L44.4 735.8L44.2 735.8L43.9 735.7L43.7 735.7L43.4 735.6L43.2 735.5L42.9 735.5L42.7 735.4L42.4 735.3L42.2 735.2L41.9 735.0L41.6 734.8L41.4 734.6L41.1 734.4L40.7 734.1L40.4 733.5L39.7 731.5L39.5 731.5L39.2 731.6L38.9 731.7L38.6 731.7L38.4 731.8L38.1 731.8L37.8 731.9L37.6 732.0L37.3 732.1L37.0 732.1L36.8 732.2L36.5 732.3L36.2 732.4L36.0 732.5L35.7 732.5L35.4 732.6L35.2 732.7L34.9 732.8L34.7 732.9L34.4 733.0L34.1 733.1L33.9 733.2L33.6 733.3L33.4 733.4L33.1 733.5L32.9 733.6L32.6 733.8L32.4 733.9L32.1 734.0L31.9 734.1L31.6 734.2L31.4 734.4L31.1 734.5L30.9 734.6L30.6 734.8L30.4 734.9L30.1 735.0L29.9 735.2L29.7 735.3L29.4 735.4L29.2 735.6L28.9 735.7L28.7 735.9L28.5 736.0L28.2 736.2L28.0 736.3L27.8 736.5L27.6 736.7L27.3 736.8L27.1 737.0L26.9 737.1L26.7 737.3L26.4 737.5L26.2 737.6L26.0 737.8L25.8 738.0L26.9 739.8L27.1 740.4L27.2 740.9L27.2 741.3L27.1 741.6L27.1 741.9L27.0 742.2L27.0 742.5L26.9 742.8L26.8 743.0L26.7 743.2L26.6 743.5L26.5 743.7L26.3 743.9L26.2 744.1L26.1 744.3L26.0 744.5L25.8 744.7L25.7 744.9L25.6 745.1L25.4 745.3L25.3 745.5L25.1 745.7L25.0 745.8L24.8 746.0L24.6 746.2L24.5 746.3L24.3 746.5L24.1 746.6L23.9 746.8L23.7 747.0L23.5 747.1L23.3 747.2L23.1 747.4L22.9 747.5L22.6 747.7L22.4 747.8L22.1 747.9L21.8 748.0L21.5 748.1L21.1 748.1L20.6 748.2L20.0 748.1L18.0 747.3L17.9 747.5L17.7 747.8L17.6 748.0L17.5 748.3L17.3 748.5L17.2 748.8L17.1 749.0L17.0 749.3L16.9 749.5L16.7 749.8L16.6 750.0L16.5 750.3L16.4 750.5L16.3 750.8L16.2 751.0L16.1 751.3L16.0 751.6L15.9 751.8L15.8 752.1L15.7 752.3L15.6 752.6L15.6 752.9L15.5 753.1L15.4 753.4L15.3 753.7L15.2 753.9L15.2 754.2L15.1 754.5L15.0 754.7L14.9 755.0L14.9 755.3L14.8 755.5L14.8 755.8L14.7 756.1L14.6 756.4L14.6 756.6L14.5 756.9L14.5 757.2L14.4 757.5L14.4 757.7L14.3 758.0L14.3 758.3L14.3 758.5L14.2 758.8L14.2 759.1L14.2 759.4L14.1 759.7L14.1 759.9L14.1 760.2L14.1 760.5L14.1 760.8L14.0 761.0L14.0 761.3L14.0 761.6L14.0 761.9L14.0 762.1L14.0 762.4L14.0 762.7L14.0 763.0L14.0 763.3L14.0 763.5L14.0 763.8L14.0 764.1L14.0 764.4L14.1 764.6L14.1 764.9L14.1 765.2L14.1 765.5L14.1 765.7L14.2 766.0L14.2 766.3L14.2 766.6L14.3 766.9L14.3 767.1L14.3 767.4L14.4 767.7L14.4 767.9L14.5 768.2L14.5 768.5L14.6 768.8L14.6 769.0L14.7 769.3L14.8 769.6L14.8 769.9L14.9 770.1L14.9 770.4L15.0 770.7L15.1 770.9L15.2 771.2L15.2 771.5L15.3 771.7L15.4 772.0L15.5 772.3L15.6 772.5L15.6 772.8L15.7 773.1L15.8 773.3L15.9 773.6L16.0 773.8L16.1 774.1L16.2 774.4L16.3 774.6L16.4 774.9L16.5 775.1L16.6 775.4L16.7 775.6L16.9 775.9L17.0 776.1L17.1 776.4L17.2 776.6L17.3 776.9L17.5 777.1L17.6 777.4L17.7 777.6L17.9 777.9L18.0 778.1L20.0 777.3L20.6 777.2L21.1 777.3L21.5 777.3L21.8 777.4L22.1 777.5L22.4 777.6L22.6 777.7L22.9 777.9L23.1 778.0L23.3 778.2L23.5 778.3L23.7 778.4L23.9 778.6L24.1 778.8L24.3 778.9L24.5 779.1L24.6 779.2L24.8 779.4L25.0 779.6L25.1 779.7L25.3 779.9L25.4 780.1L25.6 780.3L25.7 780.5L25.8 780.7L26.0 780.9L26.1 781.1L26.2 781.3L26.3 781.5L26.5 781.7L26.6 781.9L26.7 782.2L26.8 782.4L26.9 782.6L27.0 782.9L27.0 783.2L27.1 783.5L27.1 783.8L27.2 784.1L27.2 784.5L27.1 785.0L26.9 785.6L25.8 787.4L26.0 787.6L26.2 787.8L26.4 787.9L26.7 788.1L26.9 788.3L27.1 788.4L27.3 788.6L27.6 788.7L27.8 788.9L28.0 789.1L28.2 789.2L28.5 789.4L28.7 789.5L28.9 789.7L29.2 789.8L29.4 790.0L29.7 790.1L29.9 790.2L30.1 790.4L30.4 790.5L30.6 790.6L30.9 790.8L31.1 790.9L31.4 791.0L31.6 791.2L31.9 791.3L32.1 791.4L32.4 791.5L32.6 791.6L32.9 791.8L33.1 791.9L33.4 792.0L33.6 792.1L33.9 792.2L34.1 792.3L34.4 792.4L34.7 792.5L34.9 792.6L35.2 792.7L35.4 792.8L35.7 792.9L36.0 792.9L36.2 793.0L36.5 793.1L36.8 793.2L37.0 793.3L37.3 793.3L37.6 793.4L37.8 793.5L38.1 793.6L38.4 793.6L38.6 793.7L38.9 793.7L39.2 793.8L39.5 793.9L39.7 793.9L40.4 791.9L40.7 791.3L41.1 791.0L41.4 790.8L41.6 790.6L41.9 790.4L42.2 790.2L42.4 790.1L42.7 790.0L42.9 789.9L43.2 789.9L43.4 789.8L43.7 789.7L43.9 789.7L44.2 789.6L44.4 789.6L44.6 789.6L44.9 789.5L45.1 789.5L45.3 789.5L45.6 789.5L45.8 789.5L46.0 789.5L46.3 789.5L46.5 789.5L46.7 789.5L47.0 789.6L47.2 789.6L47.4 789.6L47.7 789.7L47.9 789.7L48.2 789.8L48.4 789.9L48.7 789.9L48.9 790.0L49.2 790.1L49.4 790.2L49.7 790.4L50.0 790.6L50.2 790.8L50.5 791.0L50.9 791.3L51.2 791.9L51.9 793.9L52.1 793.9L52.4 793.8L52.7 793.7L53.0 793.7L53.2 793.6L53.5 793.6L53.8 793.5L54.0 793.4L54.3 793.3L54.6 793.3L54.8 793.2L55.1 793.1L55.4 793.0L55.6 792.9L55.9 792.9L56.2 792.8L56.4 792.7L56.7 792.6L56.9 792.5L57.2 792.4L57.5 792.3L57.7 792.2L58.0 792.1L58.2 792.0L58.5 791.9L58.7 791.8L59.0 791.6L59.2 791.5L59.5 791.4L59.7 791.3L60.0 791.2L60.2 791.0L60.5 790.9L60.7 790.8L61.0 790.6L61.2 790.5L61.5 790.4L61.7 790.2L61.9 790.1L62.2 790.0L62.4 789.8L62.7 789.7L62.9 789.5L63.1 789.4L63.4 789.2L63.6 789.1L63.8 788.9L64.0 788.7L64.3 788.6L64.5 788.4L64.7 788.3L64.9 788.1L65.2 787.9L65.4 787.8L65.6 787.6L65.8 787.4L64.7 785.6L64.5 785.0L64.4 784.5L64.4 784.1L64.5 783.8L64.5 783.5L64.6 783.2L64.6 782.9L64.7 782.6L64.8 782.4L64.9 782.2L65.0 781.9L65.1 781.7L65.3 781.5L65.4 781.3L65.5 781.1L65.6 780.9L65.8 780.7L65.9 780.5L66.0 780.3L66.2 780.1L66.3 779.9L66.5 779.7L66.6 779.6L66.8 779.4L67.0 779.2L67.1 779.1L67.3 778.9L67.5 778.8L67.7 778.6L67.9 778.4L68.1 778.3L68.3 778.2L68.5 778.0L68.7 777.9L69.0 777.7L69.2 777.6L69.5 777.5L69.8 777.4L70.1 777.3L70.5 777.3L71.0 777.2L71.6 777.3L73.6 778.1L73.7 777.9L73.9 777.6L74.0 777.4L74.1 777.1L74.3 776.9L74.4 776.6L74.5 776.4L74.6 776.1L74.7 775.9L74.9 775.6L75.0 775.4L75.1 775.1L75.2 774.9L75.3 774.6L75.4 774.4L75.5 774.1L75.6 773.8L75.7 773.6L75.8 773.3L75.9 773.1L76.0 772.8L76.0 772.5L76.1 772.3L76.2 772.0L76.3 771.7L76.4 771.5L76.4 771.2L76.5 770.9L76.6 770.7L76.7 770.4L76.7 770.1L76.8 769.9L76.8 769.6L76.9 769.3L77.0 769.0L77.0 768.8L77.1 768.5L77.1 768.2L77.2 767.9L77.2 767.7L77.3 767.4L77.3 767.1L77.3 766.9L77.4 766.6L77.4 766.3L77.4 766.0L77.5 765.7L77.5 765.5L77.5 765.2L77.5 764.9L77.5 764.6L77.6 764.4L77.6 764.1L77.6 763.8L77.6 763.5L77.6 763.3L77.6 763.0Z" fill="url(#gm)"/>
<path d="M70.8 762.7L70.8 762.5L70.8 762.3L70.8 762.0L70.8 761.8L70.8 761.6L70.8 761.4L70.8 761.2L70.7 761.0L70.7 760.7L70.7 760.5L70.7 760.3L70.7 760.1L70.6 759.9L70.6 759.7L70.6 759.4L70.6 759.2L70.5 759.0L70.5 758.8L70.5 758.6L70.4 758.4L70.4 758.1L70.3 757.9L70.3 757.7L70.3 757.5L70.2 757.3L70.2 757.1L70.1 756.9L70.1 756.7L70.0 756.4L69.9 756.2L69.9 756.0L69.8 755.8L69.8 755.6L69.7 755.4L69.6 755.2L69.6 755.0L69.5 754.8L69.4 754.6L69.4 754.4L69.3 754.1L69.2 753.9L69.1 753.7L69.1 753.5L69.0 753.3L68.9 753.1L68.8 752.9L68.7 752.7L68.6 752.5L68.5 752.3L68.5 752.1L68.4 751.9L68.3 751.7L66.4 752.4L65.8 752.5L65.4 752.5L65.1 752.4L64.8 752.4L64.5 752.3L64.3 752.2L64.1 752.1L63.9 752.1L63.7 752.0L63.5 751.9L63.3 751.8L63.1 751.7L63.0 751.5L62.8 751.4L62.7 751.3L62.5 751.2L62.4 751.1L62.2 751.0L62.1 750.9L62.0 750.7L61.8 750.6L61.7 750.5L61.6 750.4L61.5 750.2L61.3 750.1L61.2 750.0L61.1 749.8L61.0 749.7L60.9 749.6L60.8 749.4L60.7 749.3L60.6 749.2L60.5 749.0L60.4 748.9L60.3 748.7L60.2 748.6L60.1 748.4L60.0 748.2L59.9 748.1L59.8 747.9L59.8 747.7L59.7 747.5L59.6 747.4L59.5 747.2L59.5 747.0L59.4 746.8L59.4 746.5L59.3 746.3L59.3 746.0L59.3 745.8L59.3 745.5L59.3 745.1L59.3 744.7L59.5 744.2L60.5 742.5L60.3 742.3L60.1 742.2L60.0 742.1L59.8 742.0L59.6 741.9L59.4 741.7L59.2 741.6L59.0 741.5L58.9 741.4L58.7 741.3L58.5 741.2L58.3 741.0L58.1 740.9L57.9 740.8L57.7 740.7L57.5 740.6L57.3 740.5L57.1 740.4L57.0 740.3L56.8 740.2L56.6 740.1L56.4 740.0L56.2 740.0L56.0 739.9L55.8 739.8L55.6 739.7L55.4 739.6L55.2 739.5L55.0 739.4L54.8 739.4L54.6 739.3L54.4 739.2L54.1 739.1L53.9 739.1L53.7 739.0L53.5 738.9L53.3 738.9L53.1 738.8L52.9 738.7L52.7 738.7L52.5 738.6L52.3 738.6L52.1 738.5L51.8 738.4L51.2 740.3L50.9 740.8L50.6 741.1L50.3 741.3L50.1 741.5L49.9 741.7L49.7 741.8L49.5 741.9L49.3 742.0L49.1 742.1L48.9 742.2L48.7 742.3L48.5 742.3L48.3 742.4L48.1 742.4L47.9 742.5L47.7 742.5L47.6 742.5L47.4 742.6L47.2 742.6L47.0 742.6L46.9 742.6L46.7 742.7L46.5 742.7L46.3 742.7L46.1 742.7L46.0 742.7L45.8 742.7L45.6 742.7L45.5 742.7L45.3 742.7L45.1 742.7L44.9 742.7L44.7 742.6L44.6 742.6L44.4 742.6L44.2 742.6L44.0 742.5L43.9 742.5L43.7 742.5L43.5 742.4L43.3 742.4L43.1 742.3L42.9 742.3L42.7 742.2L42.5 742.1L42.3 742.0L42.1 741.9L41.9 741.8L41.7 741.7L41.5 741.5L41.3 741.3L41.0 741.1L40.7 740.8L40.4 740.3L39.8 738.4L39.5 738.5L39.3 738.6L39.1 738.6L38.9 738.7L38.7 738.7L38.5 738.8L38.3 738.9L38.1 738.9L37.9 739.0L37.7 739.1L37.5 739.1L37.2 739.2L37.0 739.3L36.8 739.4L36.6 739.4L36.4 739.5L36.2 739.6L36.0 739.7L35.8 739.8L35.6 739.9L35.4 740.0L35.2 740.0L35.0 740.1L34.8 740.2L34.6 740.3L34.5 740.4L34.3 740.5L34.1 740.6L33.9 740.7L33.7 740.8L33.5 740.9L33.3 741.0L33.1 741.2L32.9 741.3L32.7 741.4L32.6 741.5L32.4 741.6L32.2 741.7L32.0 741.9L31.8 742.0L31.6 742.1L31.5 742.2L31.3 742.3L31.1 742.5L32.1 744.2L32.3 744.7L32.3 745.1L32.3 745.5L32.3 745.8L32.3 746.0L32.3 746.3L32.2 746.5L32.2 746.8L32.1 747.0L32.1 747.2L32.0 747.4L31.9 747.5L31.8 747.7L31.8 747.9L31.7 748.1L31.6 748.2L31.5 748.4L31.4 748.6L31.3 748.7L31.2 748.9L31.1 749.0L31.0 749.2L30.9 749.3L30.8 749.4L30.7 749.6L30.6 749.7L30.5 749.8L30.4 750.0L30.3 750.1L30.1 750.2L30.0 750.4L29.9 750.5L29.8 750.6L29.6 750.7L29.5 750.9L29.4 751.0L29.2 751.1L29.1 751.2L28.9 751.3L28.8 751.4L28.6 751.5L28.5 751.7L28.3 751.8L28.1 751.9L27.9 752.0L27.7 752.1L27.5 752.1L27.3 752.2L27.1 752.3L26.8 752.4L26.5 752.4L26.2 752.5L25.8 752.5L25.2 752.4L23.3 751.7L23.2 751.9L23.1 752.1L23.1 752.3L23.0 752.5L22.9 752.7L22.8 752.9L22.7 753.1L22.6 753.3L22.5 753.5L22.5 753.7L22.4 753.9L22.3 754.1L22.2 754.4L22.2 754.6L22.1 754.8L22.0 755.0L22.0 755.2L21.9 755.4L21.8 755.6L21.8 755.8L21.7 756.0L21.7 756.2L21.6 756.4L21.5 756.7L21.5 756.9L21.4 757.1L21.4 757.3L21.3 757.5L21.3 757.7L21.3 757.9L21.2 758.1L21.2 758.4L21.1 758.6L21.1 758.8L21.1 759.0L21.0 759.2L21.0 759.4L21.0 759.7L21.0 759.9L20.9 760.1L20.9 760.3L20.9 760.5L20.9 760.7L20.9 761.0L20.8 761.2L20.8 761.4L20.8 761.6L20.8 761.8L20.8 762.0L20.8 762.3L20.8 762.5L20.8 762.7L20.8 762.9L20.8 763.1L20.8 763.4L20.8 763.6L20.8 763.8L20.8 764.0L20.8 764.2L20.9 764.4L20.9 764.7L20.9 764.9L20.9 765.1L20.9 765.3L21.0 765.5L21.0 765.7L21.0 766.0L21.0 766.2L21.1 766.4L21.1 766.6L21.1 766.8L21.2 767.0L21.2 767.3L21.3 767.5L21.3 767.7L21.3 767.9L21.4 768.1L21.4 768.3L21.5 768.5L21.5 768.7L21.6 769.0L21.7 769.2L21.7 769.4L21.8 769.6L21.8 769.8L21.9 770.0L22.0 770.2L22.0 770.4L22.1 770.6L22.2 770.8L22.2 771.0L22.3 771.3L22.4 771.5L22.5 771.7L22.5 771.9L22.6 772.1L22.7 772.3L22.8 772.5L22.9 772.7L23.0 772.9L23.1 773.1L23.1 773.3L23.2 773.5L23.3 773.7L25.2 773.0L25.8 772.9L26.2 772.9L26.5 773.0L26.8 773.0L27.1 773.1L27.3 773.2L27.5 773.3L27.7 773.3L27.9 773.4L28.1 773.5L28.3 773.6L28.5 773.7L28.6 773.9L28.8 774.0L28.9 774.1L29.1 774.2L29.2 774.3L29.4 774.4L29.5 774.5L29.6 774.7L29.8 774.8L29.9 774.9L30.0 775.0L30.1 775.2L30.3 775.3L30.4 775.4L30.5 775.6L30.6 775.7L30.7 775.8L30.8 776.0L30.9 776.1L31.0 776.2L31.1 776.4L31.2 776.5L31.3 776.7L31.4 776.8L31.5 777.0L31.6 777.2L31.7 777.3L31.8 777.5L31.8 777.7L31.9 777.9L32.0 778.0L32.1 778.2L32.1 778.4L32.2 778.6L32.2 778.9L32.3 779.1L32.3 779.4L32.3 779.6L32.3 779.9L32.3 780.3L32.3 780.7L32.1 781.2L31.1 782.9L31.3 783.1L31.5 783.2L31.6 783.3L31.8 783.4L32.0 783.5L32.2 783.7L32.4 783.8L32.6 783.9L32.7 784.0L32.9 784.1L33.1 784.2L33.3 784.4L33.5 784.5L33.7 784.6L33.9 784.7L34.1 784.8L34.3 784.9L34.5 785.0L34.6 785.1L34.8 785.2L35.0 785.3L35.2 785.4L35.4 785.4L35.6 785.5L35.8 785.6L36.0 785.7L36.2 785.8L36.4 785.9L36.6 786.0L36.8 786.0L37.0 786.1L37.2 786.2L37.5 786.3L37.7 786.3L37.9 786.4L38.1 786.5L38.3 786.5L38.5 786.6L38.7 786.7L38.9 786.7L39.1 786.8L39.3 786.8L39.5 786.9L39.8 787.0L40.4 785.1L40.7 784.6L41.0 784.3L41.3 784.1L41.5 783.9L41.7 783.7L41.9 783.6L42.1 783.5L42.3 783.4L42.5 783.3L42.7 783.2L42.9 783.1L43.1 783.1L43.3 783.0L43.5 783.0L43.7 782.9L43.9 782.9L44.0 782.9L44.2 782.8L44.4 782.8L44.6 782.8L44.7 782.8L44.9 782.7L45.1 782.7L45.3 782.7L45.5 782.7L45.6 782.7L45.8 782.7L46.0 782.7L46.1 782.7L46.3 782.7L46.5 782.7L46.7 782.7L46.9 782.8L47.0 782.8L47.2 782.8L47.4 782.8L47.6 782.9L47.7 782.9L47.9 782.9L48.1 783.0L48.3 783.0L48.5 783.1L48.7 783.1L48.9 783.2L49.1 783.3L49.3 783.4L49.5 783.5L49.7 783.6L49.9 783.7L50.1 783.9L50.3 784.1L50.6 784.3L50.9 784.6L51.2 785.1L51.8 787.0L52.1 786.9L52.3 786.8L52.5 786.8L52.7 786.7L52.9 786.7L53.1 786.6L53.3 786.5L53.5 786.5L53.7 786.4L53.9 786.3L54.1 786.3L54.4 786.2L54.6 786.1L54.8 786.0L55.0 786.0L55.2 785.9L55.4 785.8L55.6 785.7L55.8 785.6L56.0 785.5L56.2 785.4L56.4 785.4L56.6 785.3L56.8 785.2L57.0 785.1L57.1 785.0L57.3 784.9L57.5 784.8L57.7 784.7L57.9 784.6L58.1 784.5L58.3 784.4L58.5 784.2L58.7 784.1L58.9 784.0L59.0 783.9L59.2 783.8L59.4 783.7L59.6 783.5L59.8 783.4L60.0 783.3L60.1 783.2L60.3 783.1L60.5 782.9L59.5 781.2L59.3 780.7L59.3 780.3L59.3 779.9L59.3 779.6L59.3 779.4L59.3 779.1L59.4 778.9L59.4 778.6L59.5 778.4L59.5 778.2L59.6 778.0L59.7 777.9L59.8 777.7L59.8 777.5L59.9 777.3L60.0 777.2L60.1 777.0L60.2 776.8L60.3 776.7L60.4 776.5L60.5 776.4L60.6 776.2L60.7 776.1L60.8 776.0L60.9 775.8L61.0 775.7L61.1 775.6L61.2 775.4L61.3 775.3L61.5 775.2L61.6 775.0L61.7 774.9L61.8 774.8L62.0 774.7L62.1 774.5L62.2 774.4L62.4 774.3L62.5 774.2L62.7 774.1L62.8 774.0L63.0 773.9L63.1 773.7L63.3 773.6L63.5 773.5L63.7 773.4L63.9 773.3L64.1 773.3L64.3 773.2L64.5 773.1L64.8 773.0L65.1 773.0L65.4 772.9L65.8 772.9L66.4 773.0L68.3 773.7L68.4 773.5L68.5 773.3L68.5 773.1L68.6 772.9L68.7 772.7L68.8 772.5L68.9 772.3L69.0 772.1L69.1 771.9L69.1 771.7L69.2 771.5L69.3 771.3L69.4 771.0L69.4 770.8L69.5 770.6L69.6 770.4L69.6 770.2L69.7 770.0L69.8 769.8L69.8 769.6L69.9 769.4L69.9 769.2L70.0 769.0L70.1 768.7L70.1 768.5L70.2 768.3L70.2 768.1L70.3 767.9L70.3 767.7L70.3 767.5L70.4 767.3L70.4 767.0L70.5 766.8L70.5 766.6L70.5 766.4L70.6 766.2L70.6 766.0L70.6 765.7L70.6 765.5L70.7 765.3L70.7 765.1L70.7 764.9L70.7 764.7L70.7 764.4L70.8 764.2L70.8 764.0L70.8 763.8L70.8 763.6L70.8 763.4L70.8 763.1L70.8 762.9Z" fill="url(#gi)"/>
<path d="M34 750.3H54.5Q59.5 750.3 59.5 755.5V759.5Q59.5 764 55 764.8L61 775.4H54L48.5 765.2H41.8V775.4H35.3V759.8H52.6V756.3H38.5Z" fill="url(#rg)" stroke="#5a5a5a" stroke-width="0.6"/>
</svg><div style="position:absolute;left:95px;top:735px;width:65px;height:22px;box-sizing:border-box;border:2px solid #22c77f;border-bottom:none;border-radius:4px 4px 0 0;background:#000"></div><div style="position:absolute;left:107.5px;top:736.23px;font:normal 15.5px/19px 'Liberation Sans', sans-serif;color:#f0f0f0;white-space:pre;transform:scale(0.9,1.0);transform-origin:left;">VSA</div><div style="position:absolute;left:159px;top:744.5px;width:53px;height:12px;background:#22c77f;border-radius:3px;border-bottom-left-radius:0;border-bottom-right-radius:0;"></div><div style="position:absolute;left:95px;top:755px;width:117px;height:35px;box-sizing:border-box;border:2px solid #22c77f;border-top:none;border-radius:0 0 4px 4px;background:#525d62"></div><div style="position:absolute;left:-148px;width:600px;text-align:center;top:759.52px;font:normal 19px/23px 'Liberation Sans', sans-serif;color:#f0f0f0;white-space:pre;transform:scale(0.92,1.0);transform-origin:center;">DMA 1</div><div style="position:absolute;left:940.3px;top:737px;width:51.2px;height:52px;background:#2d363b;border-radius:4px;box-sizing:border-box;border:1px solid #6a7073;"></div><svg style="position:absolute;left:945px;top:743px" width="42" height="42"><path d="M20.9 11.5V29.5M11.8 20.5H29.8" stroke="#c8ccd0" stroke-width="3.3" stroke-linecap="round"/></svg><svg style="position:absolute;left:0;top:0" width="1280" height="800"><g stroke="#e0e0e0" fill="none" stroke-width="1.05">
<circle cx="1113.5" cy="749.9" r="2.2"/>
<path d="M1115.7 749.9H1135.2"/>
<path d="M1119.2 749.6Q1121.5 745.6 1123.5 745.6H1127"/>
<path d="M1121.8 750.2Q1124.5 754.6 1126.5 754.6H1130"/>
<path d="M1148 747.3L1155 741.9Q1158.5 740.8 1158.6 749.4Q1158.5 758 1155 756.9L1148 752Q1147.2 751.5 1147.2 750V749.3Q1147.2 747.8 1148 747.3Z"/>
<path d="M1154.8 742.5Q1152.6 749.4 1154.8 756.3"/>
<path d="M1160 747.2L1166 753.8M1166 747.2L1160 753.8"/>
</g><g fill="#e6e6e6"><circle cx="1127.6" cy="745.6" r="1.6"/><rect x="1129.9" y="753.3" width="2.6" height="2.6"/><path d="M1137.6 749.9L1134.4 748.3V751.5Z"/></g></svg><div style="position:absolute;left:840px;width:600px;text-align:center;top:769.91px;font:normal 17px/20px 'Liberation Sans', sans-serif;color:#e8e8e8;white-space:pre;transform:scale(0.955,1.0);transform-origin:center;">1970-01-01 08:51:00</div></body></html>
